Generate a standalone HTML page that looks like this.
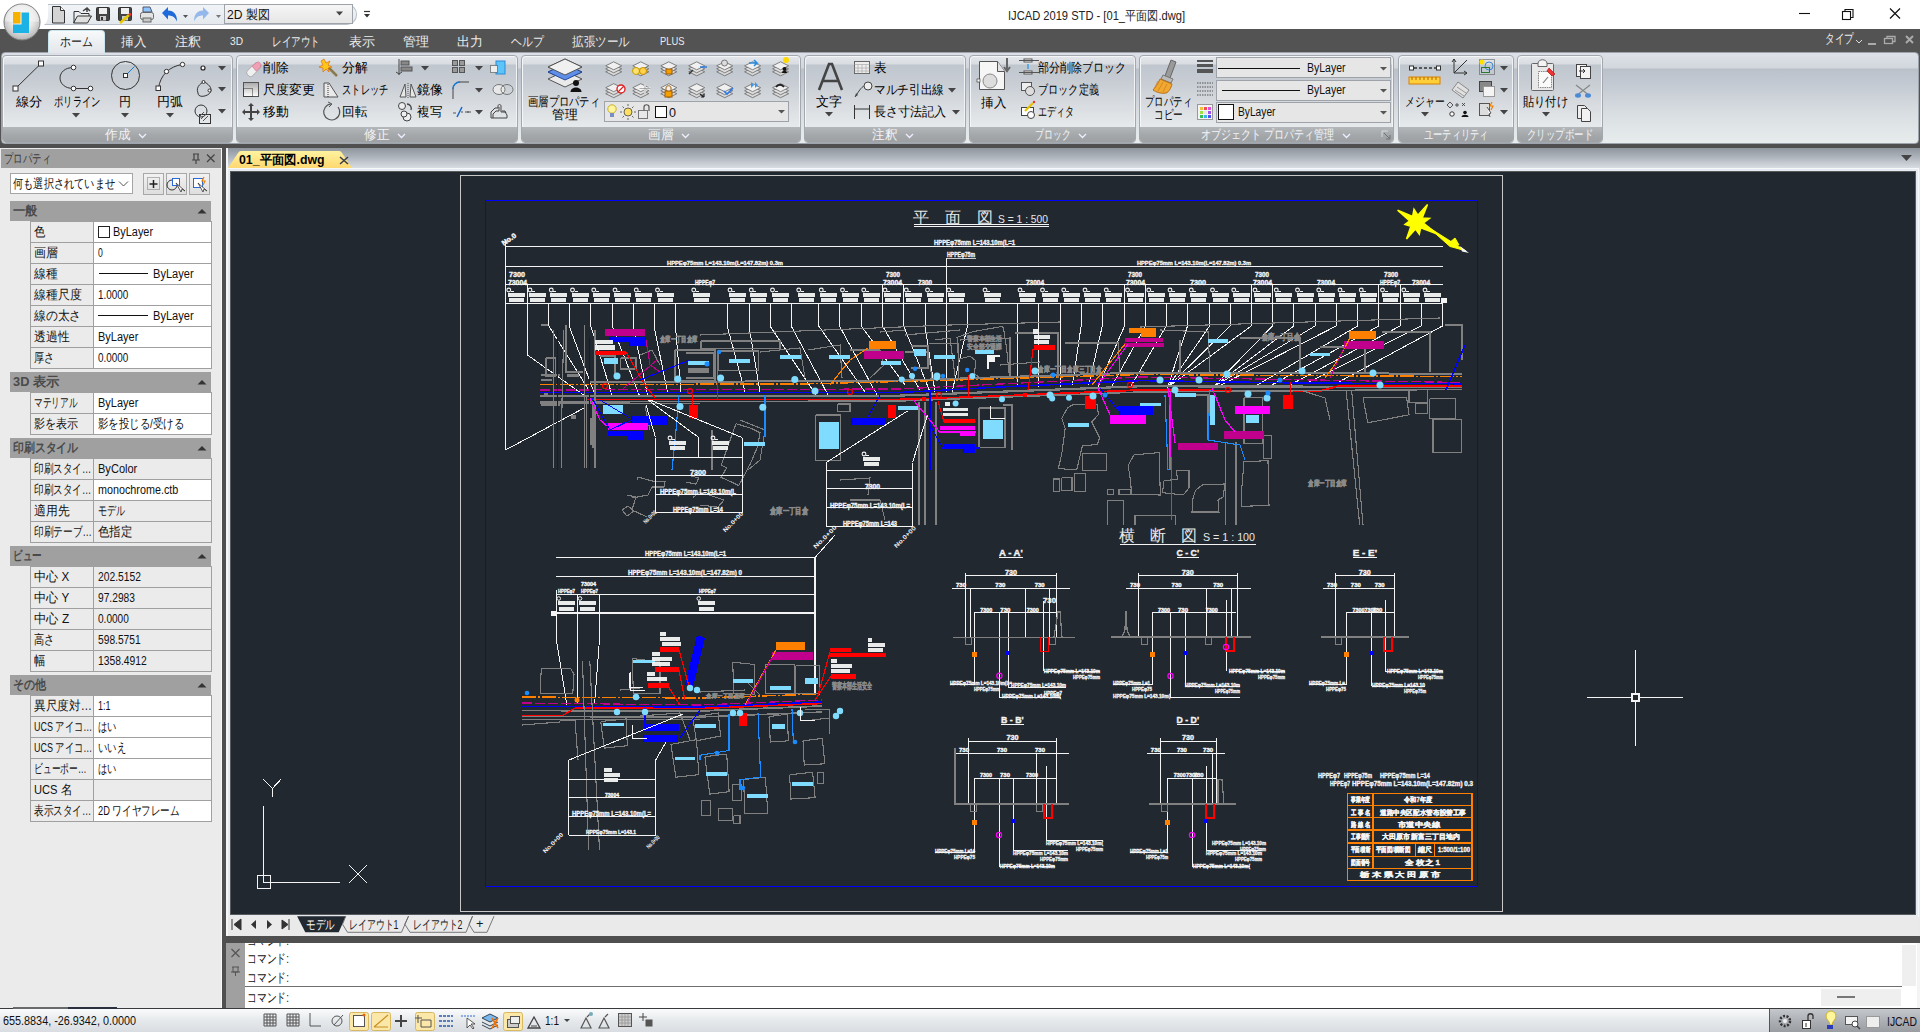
<!DOCTYPE html>
<html><head><meta charset="utf-8"><title>IJCAD</title><style>
*{margin:0;padding:0;box-sizing:border-box}
html,body{width:1920px;height:1032px;overflow:hidden;background:#fff;font-family:"Liberation Sans",sans-serif;font-size:12px;color:#000;position:relative}
.a{position:absolute}
.t{position:absolute;white-space:nowrap;line-height:1;transform-origin:0 50%}
svg{position:absolute;overflow:visible}
</style></head><body>
<div class="a" style="left:0;top:29px;width:1920px;height:23px;background:#535353"></div>
<div class="a" style="left:0;top:52px;width:1920px;height:93px;background:#535353"></div>
<div class="a" style="left:1px;top:52px;width:1918px;height:92px;border:1px solid #9ea4ab;border-radius:4px;background:linear-gradient(#dde1e7 0px,#d2d7de 15px,#bac1ca 16px,#c6ccd4 35px,#d9dee2 60px,#e8eced 90px)"></div>
<div class="a" style="left:48px;top:30px;width:57px;height:23px;border:1px solid #c9e6ee;border-bottom:none;border-radius:4px 4px 0 0;background:linear-gradient(#f7f9fa,#e3e7eb)"></div>
<div class="a" style="left:37px;top:4px;width:320px;height:21px;border:1px solid #b9c0c9;border-left:none;border-radius:0 10px 10px 0;background:linear-gradient(#f1f4f7,#e4e9ee)"></div>
<div class="a" style="left:30px;top:1px;width:18px;height:27px;background:#fff;border-radius:0 0 12px 0"></div>
<svg style="left:48px;top:3px" width="180" height="24">
 <path d="M4.5 3.5h8l4 4v12.5h-12z" fill="#d4d4d4" stroke="#333" stroke-width="1"/><path d="M12.5 3.5v4h4" fill="#f4f4f4" stroke="#333"/>
 <path d="M26 8.5h5l2 2h8v3" fill="#eee" stroke="#333"/><path d="M25.5 20l4-7h14l-4 7z" fill="#e0e0e0" stroke="#333"/><path d="M26 8.5v11.5" stroke="#333"/><path d="M35 8l4-3 3 3M39 5v4" stroke="#444" fill="none" stroke-width="1.5"/>
 <rect x="48.5" y="4.5" width="13" height="13" rx="1" fill="#444" stroke="#333"/><rect x="51" y="5" width="8" height="6" fill="#eee"/><rect x="52" y="13" width="6" height="4.5" fill="#ccc"/><rect x="53" y="14" width="2" height="3" fill="#333"/>
 <rect x="70.5" y="4.5" width="13" height="13" rx="1" fill="#444" stroke="#333"/><rect x="73" y="5" width="8" height="6" fill="#eee"/><rect x="74" y="13" width="6" height="4.5" fill="#ccc"/><path d="M72 20l9-8" stroke="#e8c800" stroke-width="2.5"/><circle cx="82" cy="11.5" r="1.4" fill="#e33"/>
 <path d="M95 4h7l2 5h-9z" fill="#8ec6ff" stroke="#556"/><rect x="92.5" y="9.5" width="13" height="7" rx="2" fill="#e4e4e4" stroke="#666"/><rect x="95" y="15" width="8" height="4" fill="#c8c8c8" stroke="#666"/>
 <path d="M114 10l6-6v3.5c6 0 9 4 9 11-2-4-4-6-9-6v4z" fill="#1e6ad8"/>
 <path d="M135 12h5l-2.5 3z" fill="#555"/>
 <path d="M161 10l-6-6v3.5c-6 0-9 4-9 11 2-4 4-6 9-6v4z" fill="#94b8ec"/>
 <path d="M168 12h5l-2.5 3z" fill="#777"/>
</svg>
<div class="a" style="left:224px;top:4px;width:129px;height:20px;border:1px solid #9ea3aa;background:linear-gradient(#f6f6f6,#e6e6e6)"></div>
<svg style="left:335px;top:11px" width="10" height="6"><path d="M1 0.5h7l-3.5 4z" fill="#444"/></svg>
<svg style="left:362px;top:9px" width="10" height="10"><path d="M2 2.5h6" stroke="#333" stroke-width="1.2"/><path d="M2 5h6l-3 3.5z" fill="#333"/></svg>
<svg style="left:1795px;top:5px" width="110" height="18">
 <path d="M4 8.5h11" stroke="#111" stroke-width="1.1"/>
 <rect x="47.5" y="6.5" width="8" height="8" fill="none" stroke="#111" stroke-width="1.1"/><path d="M50 6.5V4.5h8v8h-2.5" fill="none" stroke="#111" stroke-width="1.1"/>
 <path d="M95 3.5l10 10M105 3.5L95 13.5" stroke="#111" stroke-width="1.2"/>
</svg>
<svg style="left:0;top:0;z-index:3" width="48" height="48">
 <defs><radialGradient id="lg" cx="50%" cy="40%" r="60%"><stop offset="0" stop-color="#ffffff"/><stop offset=".55" stop-color="#e6e6e6"/><stop offset="1" stop-color="#b5b5b5"/></radialGradient></defs>
 <circle cx="22" cy="22" r="18" fill="url(#lg)" stroke="#7d7d7d" stroke-width="1"/>
 <path d="M5 21.5A17 17 0 0 1 39 21.5z" fill="#f6f6f6" opacity=".55"/>
 <rect x="13" y="12" width="7.5" height="11.5" fill="#f7b200"/>
 <path d="M21.5 12.5h7.5v20.5H13v-8.5h8.5z" fill="#1cb2e6"/>
</svg>
<svg style="left:1854px;top:33px" width="64" height="14">
 <path d="M2 7l3 3 3-3" stroke="#ddd" fill="none" stroke-width="1"/>
 <path d="M14 11h8" stroke="#aaa" stroke-width="2"/>
 <rect x="30.5" y="5.5" width="8" height="5" fill="none" stroke="#aaa" stroke-width="1.3"/><path d="M33 5.5V3.5h8v5h-2.5" fill="none" stroke="#aaa" stroke-width="1.3"/>
 <path d="M52 3l7 7M59 3l-7 7" stroke="#aaa" stroke-width="2"/>
</svg>
<div class="a" style="left:2px;top:55px;width:231px;height:88px;border:1px solid #a3a8ae;border-radius:4px;overflow:hidden;background:linear-gradient(#e4e7eb 0px,#d9dde2 8px,#c0c6ce 9px,#c9ced5 28px,#d9dde1 50px,#e6eaec 71px);box-shadow:inset 1px 1px 0 #f4f6f8,inset -1px 0 0 #f0f2f4"><div class="a" style="left:0;right:0;top:71px;height:16px;background:linear-gradient(#b4b7ba,#a5a8ab 50%,#9c9fa2)"></div></div>
<svg style="left:138px;top:133px" width="10" height="6"><path d="M1 1l3.5 3.5L8 1" stroke="#eef" fill="none" stroke-width="1.3"/></svg>
<div class="a" style="left:236px;top:55px;width:282px;height:88px;border:1px solid #a3a8ae;border-radius:4px;overflow:hidden;background:linear-gradient(#e4e7eb 0px,#d9dde2 8px,#c0c6ce 9px,#c9ced5 28px,#d9dde1 50px,#e6eaec 71px);box-shadow:inset 1px 1px 0 #f4f6f8,inset -1px 0 0 #f0f2f4"><div class="a" style="left:0;right:0;top:71px;height:16px;background:linear-gradient(#b4b7ba,#a5a8ab 50%,#9c9fa2)"></div></div>
<svg style="left:397px;top:133px" width="10" height="6"><path d="M1 1l3.5 3.5L8 1" stroke="#eef" fill="none" stroke-width="1.3"/></svg>
<div class="a" style="left:521px;top:55px;width:280px;height:88px;border:1px solid #a3a8ae;border-radius:4px;overflow:hidden;background:linear-gradient(#e4e7eb 0px,#d9dde2 8px,#c0c6ce 9px,#c9ced5 28px,#d9dde1 50px,#e6eaec 71px);box-shadow:inset 1px 1px 0 #f4f6f8,inset -1px 0 0 #f0f2f4"><div class="a" style="left:0;right:0;top:71px;height:16px;background:linear-gradient(#b4b7ba,#a5a8ab 50%,#9c9fa2)"></div></div>
<svg style="left:681px;top:133px" width="10" height="6"><path d="M1 1l3.5 3.5L8 1" stroke="#eef" fill="none" stroke-width="1.3"/></svg>
<div class="a" style="left:804px;top:55px;width:162px;height:88px;border:1px solid #a3a8ae;border-radius:4px;overflow:hidden;background:linear-gradient(#e4e7eb 0px,#d9dde2 8px,#c0c6ce 9px,#c9ced5 28px,#d9dde1 50px,#e6eaec 71px);box-shadow:inset 1px 1px 0 #f4f6f8,inset -1px 0 0 #f0f2f4"><div class="a" style="left:0;right:0;top:71px;height:16px;background:linear-gradient(#b4b7ba,#a5a8ab 50%,#9c9fa2)"></div></div>
<svg style="left:905px;top:133px" width="10" height="6"><path d="M1 1l3.5 3.5L8 1" stroke="#eef" fill="none" stroke-width="1.3"/></svg>
<div class="a" style="left:969px;top:55px;width:167px;height:88px;border:1px solid #a3a8ae;border-radius:4px;overflow:hidden;background:linear-gradient(#e4e7eb 0px,#d9dde2 8px,#c0c6ce 9px,#c9ced5 28px,#d9dde1 50px,#e6eaec 71px);box-shadow:inset 1px 1px 0 #f4f6f8,inset -1px 0 0 #f0f2f4"><div class="a" style="left:0;right:0;top:71px;height:16px;background:linear-gradient(#b4b7ba,#a5a8ab 50%,#9c9fa2)"></div></div>
<svg style="left:1078px;top:133px" width="10" height="6"><path d="M1 1l3.5 3.5L8 1" stroke="#eef" fill="none" stroke-width="1.3"/></svg>
<div class="a" style="left:1139px;top:55px;width:255px;height:88px;border:1px solid #a3a8ae;border-radius:4px;overflow:hidden;background:linear-gradient(#e4e7eb 0px,#d9dde2 8px,#c0c6ce 9px,#c9ced5 28px,#d9dde1 50px,#e6eaec 71px);box-shadow:inset 1px 1px 0 #f4f6f8,inset -1px 0 0 #f0f2f4"><div class="a" style="left:0;right:0;top:71px;height:16px;background:linear-gradient(#b4b7ba,#a5a8ab 50%,#9c9fa2)"></div></div>
<svg style="left:1342px;top:133px" width="10" height="6"><path d="M1 1l3.5 3.5L8 1" stroke="#eef" fill="none" stroke-width="1.3"/></svg>
<div class="a" style="left:1398px;top:55px;width:116px;height:88px;border:1px solid #a3a8ae;border-radius:4px;overflow:hidden;background:linear-gradient(#e4e7eb 0px,#d9dde2 8px,#c0c6ce 9px,#c9ced5 28px,#d9dde1 50px,#e6eaec 71px);box-shadow:inset 1px 1px 0 #f4f6f8,inset -1px 0 0 #f0f2f4"><div class="a" style="left:0;right:0;top:71px;height:16px;background:linear-gradient(#b4b7ba,#a5a8ab 50%,#9c9fa2)"></div></div>
<div class="a" style="left:1517px;top:55px;width:86px;height:88px;border:1px solid #a3a8ae;border-radius:4px;overflow:hidden;background:linear-gradient(#e4e7eb 0px,#d9dde2 8px,#c0c6ce 9px,#c9ced5 28px,#d9dde1 50px,#e6eaec 71px);box-shadow:inset 1px 1px 0 #f4f6f8,inset -1px 0 0 #f0f2f4"><div class="a" style="left:0;right:0;top:71px;height:16px;background:linear-gradient(#b4b7ba,#a5a8ab 50%,#9c9fa2)"></div></div>
<svg style="left:1380px;top:129px" width="12" height="12"><path d="M2 2h6M2 2v6" stroke="#d8dadc" stroke-width="1"/><path d="M4 4l6 6M10 6v4H6" stroke="#6e7175" fill="none" stroke-width="1"/></svg>
<svg style="left:0;top:55px" width="236" height="75">
 <path d="M15.5 33.5L41 8.5" stroke="#333" stroke-width="1"/>
 <rect x="13" y="31" width="5" height="5" fill="#fff" stroke="#333"/><rect x="38.5" y="6" width="5" height="5" fill="#fff" stroke="#333"/>
 <path d="M73.5 12.5c-18 0-18 21 0 21h17" fill="none" stroke="#333"/>
 <circle cx="73.5" cy="12.5" r="2.3" fill="#fff" stroke="#333"/><circle cx="73.5" cy="33.5" r="2.3" fill="#fff" stroke="#333"/><circle cx="90.5" cy="33.5" r="2.3" fill="#fff" stroke="#333"/>
 <circle cx="125.5" cy="20.5" r="14" fill="none" stroke="#333"/><path d="M125.5 20.5l9-9" stroke="#1a7ad0"/><rect x="123.5" y="18.5" width="4" height="4" fill="#fff" stroke="#333"/>
 <path d="M158.5 33.5C160 20 170 11 182.5 9.5" fill="none" stroke="#333"/>
 <rect x="156" y="31" width="4.5" height="4.5" fill="#fff" stroke="#333"/><circle cx="166.5" cy="16.5" r="2.2" fill="#fff" stroke="#333"/><circle cx="182.5" cy="9.5" r="2.2" fill="#fff" stroke="#333"/>
 <circle cx="203" cy="13" r="2" fill="#fff" stroke="#222" stroke-width="1.2"/>
 <path d="M198 38c-3-7 5-11 6-11s8 4 7 9-13 8-13 2z" fill="none" stroke="#333"/><circle cx="203.5" cy="27" r="1.5" fill="#fff" stroke="#333"/><circle cx="209.5" cy="35.5" r="1.5" fill="#fff" stroke="#333"/>
 <rect x="199.5" y="59.5" width="11" height="9" fill="none" stroke="#333"/><circle cx="201" cy="56" r="6" fill="none" stroke="#333"/><path d="M199 62l5-5M201 64l5-5M203 66l5-5" stroke="#555"/>
</svg>
<svg style="left:218px;top:66px" width="8" height="5"><path d="M0 0h8l-4 4.5z" fill="#444"/></svg>
<svg style="left:218px;top:87px" width="8" height="5"><path d="M0 0h8l-4 4.5z" fill="#444"/></svg>
<svg style="left:218px;top:109px" width="8" height="5"><path d="M0 0h8l-4 4.5z" fill="#444"/></svg>
<svg style="left:72px;top:113px" width="8" height="5"><path d="M0 0h8l-4 4.5z" fill="#444"/></svg>
<svg style="left:121px;top:113px" width="8" height="5"><path d="M0 0h8l-4 4.5z" fill="#444"/></svg>
<svg style="left:166px;top:113px" width="8" height="5"><path d="M0 0h8l-4 4.5z" fill="#444"/></svg>
<svg style="left:236px;top:55px" width="285" height="75">
 <g transform="translate(6,4) scale(0.72)"><path d="M8 16l9-9c2-2 4-2 6 0l1 1c2 2 2 4 0 6l-9 9c-2 2-4 2-6 0l-1-1c-2-2-2-4 0-6z" fill="#f0f0f0" stroke="#9a9a9a"/><path d="M14 10l6-5c2-1 4-1 5 1l1 1c1 2 0 4-1 5l-5 5z" fill="#f0a0b4" stroke="#c87890"/></g>
 <path d="M90 10l11 11" stroke="#8a7a50" stroke-width="2.5"/><path d="M88 4l2 4 4-2-2 4 4 2-4 1 1 4-3-3-3 3 0-4-4-1 4-2-2-4z" fill="#ffc61a" stroke="#e07000" stroke-width=".7"/>
 <path d="M163 4v16M163 19l-3-2M163 19l3-2" stroke="#444"/><rect x="165" y="6" width="8" height="4" fill="#888" stroke="#555"/><rect x="165" y="12" width="11" height="4" fill="#888" stroke="#555"/>
 <rect x="216.5" y="5.5" width="5" height="5" fill="#999" stroke="#555"/><rect x="223.5" y="5.5" width="5" height="5" fill="#999" stroke="#555"/><rect x="216.5" y="12.5" width="5" height="5" fill="#999" stroke="#555"/><rect x="223.5" y="12.5" width="5" height="5" fill="#999" stroke="#555"/>
 <rect x="260" y="6" width="9" height="13" fill="#5cc4f8" stroke="#2a8ad8"/><rect x="254.5" y="10.5" width="7" height="7" fill="#eee" stroke="#333" stroke-dasharray="1,1"/>
 <rect x="7.5" y="27.5" width="15" height="14" fill="url(#gsc)" stroke="#555"/><rect x="7.5" y="33.5" width="9" height="8" fill="none" stroke="#333" stroke-dasharray="1,1"/>
 <defs><linearGradient id="gsc" x1="0" y1="0" x2="0" y2="1"><stop offset="0" stop-color="#aaa"/><stop offset="1" stop-color="#fff"/></linearGradient></defs>
 <path d="M88 42V28h5l9 14z" fill="#eaeaea" stroke="#555"/><path d="M92 29v13" stroke="#333" stroke-dasharray="1,1"/>
 <path d="M172 28v15" stroke="#555" stroke-dasharray="1,1"/><path d="M170 42h-6l5-13zM174 42h6l-5-13z" fill="#e8e8e8" stroke="#555"/>
 <path d="M217 44V34c0-4 3-7 7-7h9" fill="none" stroke="#444"/><path d="M217 34c0-4 3-7 7-7" fill="none" stroke="#1a7ad0" stroke-width="1.5"/>
 <ellipse cx="263" cy="34.5" rx="6" ry="5" fill="#e8e8e8" stroke="#777"/><ellipse cx="271" cy="34.5" rx="6" ry="5" fill="none" stroke="#777"/>
 <path d="M15 50v14M8 57h14" stroke="#444" stroke-width="2"/><path d="M15 48l-3 3h6zM15 66l-3-3h6zM6 57l3-3v6zM24 57l-3-3v6z" fill="#444"/>
 <path d="M102 52a8 8 0 1 1-7-3" fill="none" stroke="#555" stroke-width="1.2"/><path d="M92 47l4 2-3 3" fill="none" stroke="#555"/>
 <circle cx="166" cy="51" r="3.5" fill="#eee" stroke="#444"/><circle cx="171" cy="62" r="4" fill="#eee" stroke="#444"/><circle cx="168" cy="59" r="3" fill="#eee" stroke="#444"/><path d="M171 49c3 0 5 3 4 6" fill="none" stroke="#444" stroke-width="1.3"/>
 <path d="M217 58h3M229 57h6" stroke="#555"/><path d="M221 62l5-10" stroke="#1a6ac8" stroke-width="1.6"/><path d="M225 57h2M231 57h2" stroke="#555"/>
 <path d="M255 63v-6l4-4h3v-2c0-2 3-2 3 0v6h4l2 3v3z" fill="none" stroke="#444"/><path d="M257 63v-4l3-3h3v-4M266 56h3l1 2" fill="none" stroke="#444"/>
</svg>
<svg style="left:421px;top:66px" width="8" height="5"><path d="M0 0h8l-4 4.5z" fill="#444"/></svg>
<svg style="left:475px;top:66px" width="8" height="5"><path d="M0 0h8l-4 4.5z" fill="#444"/></svg>
<svg style="left:475px;top:88px" width="8" height="5"><path d="M0 0h8l-4 4.5z" fill="#444"/></svg>
<svg style="left:475px;top:110px" width="8" height="5"><path d="M0 0h8l-4 4.5z" fill="#444"/></svg>
<svg style="left:520px;top:55px" width="285" height="75">
 <path d="M28 17l17-8 17 8-17 8z" fill="#d8d8d8" stroke="#555"/><path d="M28 12l17-8 17 8-17 8z" fill="#f4f4f4" stroke="#555"/>
 <path d="M28 24l17-8 17 8-17 8z" fill="#eaeaea" stroke="#555"/><path d="M28 17l17-8 17 8-17 8z" fill="#5e8ee8" stroke="#24489a"/>
 <path d="M28 12l17-8 17 8-17 8z" fill="#f0f0f0" stroke="#555"/>
 <circle cx="56" cy="28" r="3" fill="#111"/><path d="M50.5 37c0-6 11-6 11 0z" fill="#111"/>
 <g transform="translate(85.70000000000005,6.799999999999997) scale(1.0)"><path d="M0 10l8-4 8 4-8 4z" fill="#d8d8d8" stroke="#666" stroke-width=".8"/><path d="M0 7l8-4 8 4-8 4z" fill="#e0e0e0" stroke="#666" stroke-width=".8"/><path d="M0 4l8-4 8 4-8 4z" fill="#f0f0f0" stroke="#666" stroke-width=".8"/></g><g transform="translate(85.70000000000005,28.700000000000003) scale(1.0)"><path d="M0 10l8-4 8 4-8 4z" fill="#d8d8d8" stroke="#666" stroke-width=".8"/><path d="M0 7l8-4 8 4-8 4z" fill="#e0e0e0" stroke="#666" stroke-width=".8"/><path d="M0 4l8-4 8 4-8 4z" fill="#f0f0f0" stroke="#666" stroke-width=".8"/></g><g transform="translate(112.79999999999995,6.799999999999997) scale(1.0)"><path d="M0 10l8-4 8 4-8 4z" fill="#d8d8d8" stroke="#666" stroke-width=".8"/><path d="M0 7l8-4 8 4-8 4z" fill="#e0e0e0" stroke="#666" stroke-width=".8"/><path d="M0 4l8-4 8 4-8 4z" fill="#f0f0f0" stroke="#666" stroke-width=".8"/></g><g transform="translate(112.79999999999995,28.700000000000003) scale(1.0)"><path d="M0 10l8-4 8 4-8 4z" fill="#d8d8d8" stroke="#666" stroke-width=".8"/><path d="M0 7l8-4 8 4-8 4z" fill="#e0e0e0" stroke="#666" stroke-width=".8"/><path d="M0 4l8-4 8 4-8 4z" fill="#f0f0f0" stroke="#666" stroke-width=".8"/></g><g transform="translate(140.79999999999995,6.799999999999997) scale(1.0)"><path d="M0 10l8-4 8 4-8 4z" fill="#d8d8d8" stroke="#666" stroke-width=".8"/><path d="M0 7l8-4 8 4-8 4z" fill="#e0e0e0" stroke="#666" stroke-width=".8"/><path d="M0 4l8-4 8 4-8 4z" fill="#f0f0f0" stroke="#666" stroke-width=".8"/></g><g transform="translate(140.79999999999995,28.700000000000003) scale(1.0)"><path d="M0 10l8-4 8 4-8 4z" fill="#d8d8d8" stroke="#666" stroke-width=".8"/><path d="M0 7l8-4 8 4-8 4z" fill="#e0e0e0" stroke="#666" stroke-width=".8"/><path d="M0 4l8-4 8 4-8 4z" fill="#f0f0f0" stroke="#666" stroke-width=".8"/></g><g transform="translate(168.70000000000005,6.799999999999997) scale(1.0)"><path d="M0 10l8-4 8 4-8 4z" fill="#d8d8d8" stroke="#666" stroke-width=".8"/><path d="M0 7l8-4 8 4-8 4z" fill="#e0e0e0" stroke="#666" stroke-width=".8"/><path d="M0 4l8-4 8 4-8 4z" fill="#f0f0f0" stroke="#666" stroke-width=".8"/></g><g transform="translate(168.70000000000005,28.700000000000003) scale(1.0)"><path d="M0 10l8-4 8 4-8 4z" fill="#d8d8d8" stroke="#666" stroke-width=".8"/><path d="M0 7l8-4 8 4-8 4z" fill="#e0e0e0" stroke="#666" stroke-width=".8"/><path d="M0 4l8-4 8 4-8 4z" fill="#f0f0f0" stroke="#666" stroke-width=".8"/></g><g transform="translate(196.70000000000005,6.799999999999997) scale(1.0)"><path d="M0 10l8-4 8 4-8 4z" fill="#d8d8d8" stroke="#666" stroke-width=".8"/><path d="M0 7l8-4 8 4-8 4z" fill="#e0e0e0" stroke="#666" stroke-width=".8"/><path d="M0 4l8-4 8 4-8 4z" fill="#f0f0f0" stroke="#666" stroke-width=".8"/></g><g transform="translate(196.70000000000005,28.700000000000003) scale(1.0)"><path d="M0 10l8-4 8 4-8 4z" fill="#d8d8d8" stroke="#666" stroke-width=".8"/><path d="M0 7l8-4 8 4-8 4z" fill="#e0e0e0" stroke="#666" stroke-width=".8"/><path d="M0 4l8-4 8 4-8 4z" fill="#f0f0f0" stroke="#666" stroke-width=".8"/></g><g transform="translate(224.60000000000002,6.799999999999997) scale(1.0)"><path d="M0 10l8-4 8 4-8 4z" fill="#d8d8d8" stroke="#666" stroke-width=".8"/><path d="M0 7l8-4 8 4-8 4z" fill="#e0e0e0" stroke="#666" stroke-width=".8"/><path d="M0 4l8-4 8 4-8 4z" fill="#f0f0f0" stroke="#666" stroke-width=".8"/></g><g transform="translate(224.60000000000002,28.700000000000003) scale(1.0)"><path d="M0 10l8-4 8 4-8 4z" fill="#d8d8d8" stroke="#666" stroke-width=".8"/><path d="M0 7l8-4 8 4-8 4z" fill="#e0e0e0" stroke="#666" stroke-width=".8"/><path d="M0 4l8-4 8 4-8 4z" fill="#f0f0f0" stroke="#666" stroke-width=".8"/></g><g transform="translate(252.60000000000002,6.799999999999997) scale(1.0)"><path d="M0 10l8-4 8 4-8 4z" fill="#d8d8d8" stroke="#666" stroke-width=".8"/><path d="M0 7l8-4 8 4-8 4z" fill="#e0e0e0" stroke="#666" stroke-width=".8"/><path d="M0 4l8-4 8 4-8 4z" fill="#f0f0f0" stroke="#666" stroke-width=".8"/></g><g transform="translate(252.60000000000002,28.700000000000003) scale(1.0)"><path d="M0 10l8-4 8 4-8 4z" fill="#d8d8d8" stroke="#666" stroke-width=".8"/><path d="M0 7l8-4 8 4-8 4z" fill="#e0e0e0" stroke="#666" stroke-width=".8"/><path d="M0 4l8-4 8 4-8 4z" fill="#f0f0f0" stroke="#666" stroke-width=".8"/></g>
 
 <circle cx="116" cy="16" r="3.5" fill="#ffe070" stroke="#c9a000"/>
 <circle cx="123" cy="16" r="3.5" fill="#ffd24a" stroke="#c98c00"/>
 <rect x="146" y="14" width="6" height="5" fill="#f5a000" stroke="#a05a00"/>
 <path d="M169 19l4-4" stroke="#333" stroke-width="1.4"/><path d="M180 12h7" stroke="#2a7ad8" stroke-width="1.5"/>
 <circle cx="204.5" cy="8" r="3" fill="#ddd" stroke="#777"/>
 <path d="M229 8h8l-3-3M237 8l-3 3" stroke="#2a8ae0" fill="none" stroke-width="1.6"/>
 <circle cx="266" cy="5" r="3" fill="#ffd900"/><path d="M262 18c0-3 5-3 5 0z" fill="#111"/><circle cx="264.5" cy="14" r="2" fill="#111"/>
 <circle cx="101" cy="34" r="4" fill="#fff" stroke="#d22" stroke-width="1.4"/><path d="M98 37l6-6" stroke="#d22" stroke-width="1.2"/>
 <path d="M125 28v11M119.5 33.5h11" stroke="#f8f8f8" stroke-width="2"/><path d="M125 28v11M119.5 33.5h11" stroke="#777" stroke-width=".6"/>
 <rect x="145" y="36" width="7" height="6" fill="#f5a000" stroke="#a05a00"/><path d="M146 36v-3c0-3 5-3 5 0v3" fill="none" stroke="#a05a00"/>
 <path d="M180 39l4 3M184 42v-3M184 42h-3" stroke="#222" stroke-width="1.2"/>
 <path d="M204 36l3 3 6-6" stroke="#2a7ae8" fill="none" stroke-width="1.6"/>
 <path d="M231 27l3 3-3 3zM235 27l3 3-3 3z" fill="#3a9af0"/>
 <path d="M256 32c2-3 6-3 8 0" stroke="#222" fill="none" stroke-width="1.8"/>

</svg>
<div class="a" style="left:604px;top:101px;width:185px;height:21px;border:1px solid #9ea3aa;background:#e6e6e6"></div>
<svg style="left:604px;top:101px" width="185" height="21">
 <circle cx="8" cy="8" r="4.2" fill="#fff59a" stroke="#c8b030"/><rect x="6" y="12" width="4" height="4" fill="#7c8cc4"/>
 <circle cx="24" cy="11" r="4" fill="#ffe060" stroke="#444" stroke-width=".8"/><path d="M24 3v2M24 17v2M16 11h2M30 11h2M18.5 5.5l1.5 1.5M28 15l1.5 1.5M18.5 16.5l1.5-1.5M28 7l1.5-1.5" stroke="#444" stroke-width=".8"/>
 <rect x="34.5" y="9.5" width="9" height="8" fill="#e8e8e8" stroke="#777"/><path d="M40 9.5V6c0-3 5-3 5 0v4" fill="none" stroke="#555" stroke-width="1.2"/>
 <rect x="51.5" y="5.5" width="11" height="11" fill="#fff" stroke="#111"/>
 <path d="M174 9h7l-3.5 3.5z" fill="#555"/>
</svg>
<svg style="left:804px;top:55px" width="165" height="75">
 <path d="M15 35l10-26h3l10 26M19 26h15" stroke="#444" stroke-width="2.6" fill="none"/>
 <rect x="50.5" y="6.5" width="15" height="12" fill="#eee" stroke="#666"/><path d="M50.5 9.5h15M54 9.5v9M58 9.5v9M62 9.5v9M50.5 13h15M50.5 16h15" stroke="#aaa" stroke-width=".7"/>
 <path d="M51 42l4-6c2-3 4-5 6-5" fill="none" stroke="#444"/><circle cx="64" cy="31" r="4" fill="#eee" stroke="#444"/><path d="M51 42l1-4 2 2z" fill="#444"/>
 <path d="M50.5 50v14M65.5 50v14M51 54h14" stroke="#333"/>
</svg>
<svg style="left:825px;top:112px" width="8" height="5"><path d="M0 0h8l-4 4.5z" fill="#444"/></svg>
<svg style="left:948px;top:88px" width="8" height="5"><path d="M0 0h8l-4 4.5z" fill="#444"/></svg>
<svg style="left:952px;top:110px" width="8" height="5"><path d="M0 0h8l-4 4.5z" fill="#444"/></svg>
<svg style="left:969px;top:55px" width="170" height="75">
 <path d="M10.5 6.5h18l7 10v18h-25z" fill="#f6f6f6" stroke="#555"/><path d="M28.5 6.5v10h7" fill="#e4e4e4" stroke="#555"/>
 <circle cx="21" cy="26" r="7" fill="#ddd" stroke="#888"/><rect x="8" y="24" width="3" height="3" fill="#fff" stroke="#444" stroke-width=".7"/>
 <path d="M38 3v13M35 12l3 4 3-4" stroke="#666" stroke-width="2" fill="none"/>
 <rect x="55" y="4" width="8" height="3" fill="#fff" stroke="#555"/><rect x="55" y="16" width="8" height="3" fill="#fff" stroke="#555"/><path d="M50 5.5h20M50 17.5h20" stroke="#555"/><path d="M59 9v5" stroke="#2a9ae8" stroke-width="1.3"/>
 <rect x="52.5" y="27.5" width="10" height="8" fill="#eee" stroke="#555"/><circle cx="61" cy="36" r="4.5" fill="#ddd" stroke="#555"/>
 <rect x="52.5" y="52.5" width="12" height="8" fill="#fff" stroke="#444"/><circle cx="62" cy="60" r="3.5" fill="#fff" stroke="#444"/><path d="M56 56l8-8" stroke="#e8c000" stroke-width="2.2"/><circle cx="65" cy="47" r="1.2" fill="#e33"/>
</svg>
<svg style="left:1139px;top:55px" width="255" height="75">
 <path d="M32 5l5 2-6 16-5-2z" fill="#9a9a9a" stroke="#666"/><path d="M24 20l10 4-2 4-10-4z" fill="#bbb" stroke="#777"/>
 <path d="M21 24l12 5c-1 4-3 8-6 9-5 1-10-1-13-3 2-2 5-6 7-11z" fill="#f0a830" stroke="#b8701a"/><path d="M15 34l4-8M19 36l5-9M24 37l4-8" stroke="#d08020" stroke-width=".8"/>
 <rect x="58" y="5" width="16" height="2" fill="#555"/><rect x="58" y="9" width="16" height="3" fill="#555"/><rect x="58" y="14" width="16" height="4" fill="#555"/>
 <path d="M58 28h16M58 32h16M58 36h16M58 40h16" stroke="#555" stroke-dasharray="1.5,1" stroke-width="1"/>
 <rect x="58.5" y="49.5" width="15" height="15" fill="#f4f4f4" stroke="#999"/>
 <rect x="61" y="52" width="3" height="3" fill="#f0c040"/><rect x="65" y="52" width="3" height="3" fill="#f05050"/><rect x="69" y="52" width="3" height="3" fill="#e050e0"/>
 <rect x="61" y="56" width="3" height="3" fill="#a0e040"/><rect x="65" y="56" width="3" height="3" fill="#e8e8e8"/><rect x="69" y="56" width="3" height="3" fill="#a050f0"/>
 <rect x="61" y="60" width="3" height="3" fill="#30c050"/><rect x="65" y="60" width="3" height="3" fill="#40b0f0"/><rect x="69" y="60" width="3" height="3" fill="#5050f0"/>
</svg>
<div class="a" style="left:1216px;top:57px;width:175px;height:21px;border:1px solid #9ea3aa;background:#e6e6e6"></div>
<div class="a" style="left:1216px;top:79.5px;width:175px;height:21px;border:1px solid #9ea3aa;background:#e6e6e6"></div>
<div class="a" style="left:1216px;top:101.5px;width:175px;height:21px;border:1px solid #9ea3aa;background:#e6e6e6"></div>
<svg style="left:1216px;top:57px" width="175" height="66">
 <path d="M2 11.5h82" stroke="#111" stroke-width="1"/><path d="M6 33.5h78" stroke="#111" stroke-width="1"/>
 <rect x="2.5" y="47.5" width="15" height="15" fill="#fff" stroke="#111"/>
 <path d="M164 10h7l-3.5 3.5zM164 32h7l-3.5 3.5zM164 54h7l-3.5 3.5z" fill="#555"/>
</svg>
<svg style="left:1398px;top:55px" width="120" height="75">
 <rect x="11.5" y="11" width="4" height="4" fill="#fff" stroke="#333"/><rect x="38.5" y="11" width="4" height="4" fill="#fff" stroke="#333"/><path d="M16 13h22" stroke="#333" stroke-width="1.5" stroke-dasharray="3,2"/>
 <rect x="11" y="22" width="31" height="7" fill="#ffcf3a" stroke="#d88000"/><path d="M14 22v3M18 22v3M22 22v3M26 22v3M30 22v3M34 22v3M38 22v3" stroke="#a05000" stroke-width=".8"/>
 <path d="M56 4v14h13M56 18l13-13" stroke="#333" fill="none"/><path d="M54 7l2-3 2 3M66 16l3 2-3 2" fill="none" stroke="#333"/>
 <path d="M54 35l6-8 11 8-6 8z" fill="#e0e0e0" stroke="#888"/><path d="M57 35l9 6M59 32l9 6" stroke="#999"/>
 <path d="M52 47l3 3-3 3-3-3zM57 50h4M59 48v4M64 48l3 3M67 48l-3 3" stroke="#333" fill="none" stroke-width=".8"/><circle cx="54" cy="59" r="2.2" fill="#fff" stroke="#333"/><circle cx="67" cy="57.5" r="1.8" fill="#111"/><path d="M63.5 62c0-3 7-3 7 0z" fill="#111"/>
 <rect x="81.5" y="4.5" width="15" height="15" fill="none" stroke="#444" stroke-dasharray="1,1"/><circle cx="84" cy="7" r="2.5" fill="#ffe000"/><circle cx="91" cy="11" r="4" fill="none" stroke="#3a8ad8"/><rect x="83.5" y="12.5" width="8" height="5" fill="none" stroke="#2a7a2a"/>
 <rect x="81.5" y="26.5" width="12" height="10" fill="#888" stroke="#444"/><rect x="85.5" y="31.5" width="11" height="10" fill="#f4f4f4" stroke="#999"/>
 <rect x="81.5" y="48.5" width="10" height="12" fill="#ddd" stroke="#555"/><path d="M89 52l4 6-2 1 1 3" stroke="#555" fill="#fff"/><path d="M94 47l-2 4h3l-2 4" stroke="#f08000" fill="none" stroke-width="1.2"/>
</svg>
<svg style="left:1420.7px;top:112px" width="8" height="5"><path d="M0 0h8l-4 4.5z" fill="#444"/></svg>
<svg style="left:1499.5px;top:66px" width="8" height="5"><path d="M0 0h8l-4 4.5z" fill="#444"/></svg>
<svg style="left:1499.5px;top:88px" width="8" height="5"><path d="M0 0h8l-4 4.5z" fill="#444"/></svg>
<svg style="left:1499.5px;top:110px" width="8" height="5"><path d="M0 0h8l-4 4.5z" fill="#444"/></svg>
<svg style="left:1517px;top:55px" width="90" height="75">
 <rect x="14.5" y="8.5" width="22" height="27" rx="1" fill="#e8e8e8" stroke="#666"/><path d="M21 8.5c0-5 9-5 9 0v3h-9z" fill="#f4f4f4" stroke="#666"/>
 <rect x="21.5" y="16.5" width="13" height="16" fill="#fafafa" stroke="#888" stroke-dasharray="1.5,0.8"/>
 <path d="M31 22l-5 6" stroke="#777" stroke-width="1.1"/><path d="M32 13l6 6-3 2-5-5z" fill="#e33" stroke="#a11" stroke-width=".7"/>
 <rect x="59.5" y="9.5" width="10" height="12" fill="#f4f4f4" stroke="#444"/><rect x="63.5" y="11.5" width="10" height="12" fill="#f4f4f4" stroke="#444"/><path d="M62 16h6l-2-2M68 16l-2 2" stroke="#333" fill="none"/>
 <path d="M59 30l14 11M73 30L59 41" stroke="#888" stroke-width="1.3"/><ellipse cx="61" cy="40.5" rx="3" ry="2.2" fill="#4a8ad8"/><ellipse cx="71" cy="40.5" rx="3" ry="2.2" fill="#4a8ad8"/>
 <path d="M60.5 50.5h7l3 3v10h-10z" fill="#eee" stroke="#444"/><path d="M64.5 53.5h6l3 3v10h-9z" fill="#f2f2f2" stroke="#444"/>
</svg>
<svg style="left:1541.5px;top:112px" width="8" height="5"><path d="M0 0h8l-4 4.5z" fill="#444"/></svg>
<div class="a" style="left:0;top:144px;width:1920px;height:4px;background:#4f4f4f"></div>
<div class="a" style="left:0;top:148px;width:222px;height:861px;background:#ebebeb;border-right:1px solid #f8f8f8"></div>
<div class="a" style="left:1px;top:149px;width:220px;height:19px;background:#a0a0a0"></div>
<svg style="left:188px;top:150px" width="34" height="18">
 <path d="M5 4h6M6 4v6h4V4M4 10h8M8 10v4" stroke="#444" fill="none" stroke-width="1.2"/>
 <path d="M19 4.5l7.5 7.5M26.5 4.5L19 12" stroke="#444" stroke-width="1.3"/>
</svg>
<div class="a" style="left:10px;top:173px;width:123px;height:21px;border:1px solid #a5a5a5;background:#fff"></div>
<svg style="left:118px;top:180px" width="12" height="8"><path d="M1 1.5l4.5 4.5L10 1.5" stroke="#555" fill="none" stroke-width="1"/></svg>
<div class="a" style="left:143px;top:173px;width:21px;height:22px;border:1px solid #a8a8a8;background:linear-gradient(#f2f2f2,#dedede)"></div>
<div class="a" style="left:166px;top:173px;width:21px;height:22px;border:1px solid #a8a8a8;background:linear-gradient(#f2f2f2,#dedede)"></div>
<div class="a" style="left:189px;top:173px;width:21px;height:22px;border:1px solid #a8a8a8;background:linear-gradient(#f2f2f2,#dedede)"></div>
<svg style="left:143px;top:173px" width="70" height="22">
 <rect x="4.5" y="4.5" width="12" height="12" fill="none" stroke="#777" stroke-dasharray="1,1"/><path d="M10.5 7v8M6.5 11h8" stroke="#222" stroke-width="1.5"/>
 <circle cx="29" cy="12" r="5" fill="none" stroke="#333"/><rect x="29.5" y="5.5" width="7" height="7" fill="#fff" stroke="#2a6ad8"/><path d="M33 10l5 9 1-3 3 2z" fill="#fff" stroke="#333" stroke-width=".8"/>
 <rect x="50.5" y="5.5" width="9" height="9" fill="#fff" stroke="#2a6ad8"/><path d="M55 10l5 9 1-3 3 2z" fill="#fff" stroke="#333" stroke-width=".8"/><path d="M61 4l-2 4h3l-2 4" stroke="#f08000" fill="none" stroke-width="1.2"/>
</svg>
<div class="a" style="left:10px;top:201px;width:201px;height:20px;background:#a0a0a0"></div>
<svg style="left:197px;top:208px" width="10" height="6"><path d="M0.5 5.5L5 1l4.5 4.5z" fill="#333"/></svg>
<div class="a" style="left:30px;top:221px;width:182px;height:22px;border:1px solid #a0a0a0;background:#ebebeb"></div>
<div class="a" style="left:93px;top:221px;width:119px;height:22px;border:1px solid #a0a0a0;background:#fff"></div>
<div class="a" style="left:30px;top:242px;width:182px;height:22px;border:1px solid #a0a0a0;background:#ebebeb"></div>
<div class="a" style="left:93px;top:242px;width:119px;height:22px;border:1px solid #a0a0a0;background:#fff"></div>
<div class="a" style="left:30px;top:263px;width:182px;height:22px;border:1px solid #a0a0a0;background:#ebebeb"></div>
<div class="a" style="left:93px;top:263px;width:119px;height:22px;border:1px solid #a0a0a0;background:#fff"></div>
<div class="a" style="left:30px;top:284px;width:182px;height:22px;border:1px solid #a0a0a0;background:#ebebeb"></div>
<div class="a" style="left:93px;top:284px;width:119px;height:22px;border:1px solid #a0a0a0;background:#fff"></div>
<div class="a" style="left:30px;top:305px;width:182px;height:22px;border:1px solid #a0a0a0;background:#ebebeb"></div>
<div class="a" style="left:93px;top:305px;width:119px;height:22px;border:1px solid #a0a0a0;background:#fff"></div>
<div class="a" style="left:30px;top:326px;width:182px;height:22px;border:1px solid #a0a0a0;background:#ebebeb"></div>
<div class="a" style="left:93px;top:326px;width:119px;height:22px;border:1px solid #a0a0a0;background:#fff"></div>
<div class="a" style="left:30px;top:347px;width:182px;height:22px;border:1px solid #a0a0a0;background:#ebebeb"></div>
<div class="a" style="left:93px;top:347px;width:119px;height:22px;border:1px solid #a0a0a0;background:#fff"></div>
<div class="a" style="left:10px;top:372px;width:201px;height:20px;background:#a0a0a0"></div>
<svg style="left:197px;top:379px" width="10" height="6"><path d="M0.5 5.5L5 1l4.5 4.5z" fill="#333"/></svg>
<div class="a" style="left:30px;top:392px;width:182px;height:22px;border:1px solid #a0a0a0;background:#ebebeb"></div>
<div class="a" style="left:93px;top:392px;width:119px;height:22px;border:1px solid #a0a0a0;background:#fff"></div>
<div class="a" style="left:30px;top:413px;width:182px;height:22px;border:1px solid #a0a0a0;background:#ebebeb"></div>
<div class="a" style="left:93px;top:413px;width:119px;height:22px;border:1px solid #a0a0a0;background:#fff"></div>
<div class="a" style="left:10px;top:438px;width:201px;height:20px;background:#a0a0a0"></div>
<svg style="left:197px;top:445px" width="10" height="6"><path d="M0.5 5.5L5 1l4.5 4.5z" fill="#333"/></svg>
<div class="a" style="left:30px;top:458px;width:182px;height:22px;border:1px solid #a0a0a0;background:#ebebeb"></div>
<div class="a" style="left:93px;top:458px;width:119px;height:22px;border:1px solid #a0a0a0;background:#ebebeb"></div>
<div class="a" style="left:30px;top:479px;width:182px;height:22px;border:1px solid #a0a0a0;background:#ebebeb"></div>
<div class="a" style="left:93px;top:479px;width:119px;height:22px;border:1px solid #a0a0a0;background:#fff"></div>
<div class="a" style="left:30px;top:500px;width:182px;height:22px;border:1px solid #a0a0a0;background:#ebebeb"></div>
<div class="a" style="left:93px;top:500px;width:119px;height:22px;border:1px solid #a0a0a0;background:#ebebeb"></div>
<div class="a" style="left:30px;top:521px;width:182px;height:22px;border:1px solid #a0a0a0;background:#ebebeb"></div>
<div class="a" style="left:93px;top:521px;width:119px;height:22px;border:1px solid #a0a0a0;background:#ebebeb"></div>
<div class="a" style="left:10px;top:546px;width:201px;height:20px;background:#a0a0a0"></div>
<svg style="left:197px;top:553px" width="10" height="6"><path d="M0.5 5.5L5 1l4.5 4.5z" fill="#333"/></svg>
<div class="a" style="left:30px;top:566px;width:182px;height:22px;border:1px solid #a0a0a0;background:#ebebeb"></div>
<div class="a" style="left:93px;top:566px;width:119px;height:22px;border:1px solid #a0a0a0;background:#ebebeb"></div>
<div class="a" style="left:30px;top:587px;width:182px;height:22px;border:1px solid #a0a0a0;background:#ebebeb"></div>
<div class="a" style="left:93px;top:587px;width:119px;height:22px;border:1px solid #a0a0a0;background:#ebebeb"></div>
<div class="a" style="left:30px;top:608px;width:182px;height:22px;border:1px solid #a0a0a0;background:#ebebeb"></div>
<div class="a" style="left:93px;top:608px;width:119px;height:22px;border:1px solid #a0a0a0;background:#ebebeb"></div>
<div class="a" style="left:30px;top:629px;width:182px;height:22px;border:1px solid #a0a0a0;background:#ebebeb"></div>
<div class="a" style="left:93px;top:629px;width:119px;height:22px;border:1px solid #a0a0a0;background:#ebebeb"></div>
<div class="a" style="left:30px;top:650px;width:182px;height:22px;border:1px solid #a0a0a0;background:#ebebeb"></div>
<div class="a" style="left:93px;top:650px;width:119px;height:22px;border:1px solid #a0a0a0;background:#ebebeb"></div>
<div class="a" style="left:10px;top:675px;width:201px;height:20px;background:#a0a0a0"></div>
<svg style="left:197px;top:682px" width="10" height="6"><path d="M0.5 5.5L5 1l4.5 4.5z" fill="#333"/></svg>
<div class="a" style="left:30px;top:695px;width:182px;height:22px;border:1px solid #a0a0a0;background:#ebebeb"></div>
<div class="a" style="left:93px;top:695px;width:119px;height:22px;border:1px solid #a0a0a0;background:#fff"></div>
<div class="a" style="left:30px;top:716px;width:182px;height:22px;border:1px solid #a0a0a0;background:#ebebeb"></div>
<div class="a" style="left:93px;top:716px;width:119px;height:22px;border:1px solid #a0a0a0;background:#fff"></div>
<div class="a" style="left:30px;top:737px;width:182px;height:22px;border:1px solid #a0a0a0;background:#ebebeb"></div>
<div class="a" style="left:93px;top:737px;width:119px;height:22px;border:1px solid #a0a0a0;background:#fff"></div>
<div class="a" style="left:30px;top:758px;width:182px;height:22px;border:1px solid #a0a0a0;background:#ebebeb"></div>
<div class="a" style="left:93px;top:758px;width:119px;height:22px;border:1px solid #a0a0a0;background:#fff"></div>
<div class="a" style="left:30px;top:779px;width:182px;height:22px;border:1px solid #a0a0a0;background:#ebebeb"></div>
<div class="a" style="left:93px;top:779px;width:119px;height:22px;border:1px solid #a0a0a0;background:#ebebeb"></div>
<div class="a" style="left:30px;top:800px;width:182px;height:22px;border:1px solid #a0a0a0;background:#ebebeb"></div>
<div class="a" style="left:93px;top:800px;width:119px;height:22px;border:1px solid #a0a0a0;background:#fff"></div>
<div class="a" style="left:98px;top:226px;width:12px;height:12px;border:1px solid #222;background:#fff"></div>
<svg style="left:97px;top:263px" width="60" height="60"><path d="M2 10.5h49M1 52.5h50" stroke="#111" stroke-width="1"/></svg>
<div class="a" style="left:222px;top:148px;width:4px;height:861px;background:#505050"></div>
<div class="a" style="left:226px;top:148px;width:1694px;height:789px;background:#e9e9e9"></div>
<div class="a" style="left:226px;top:148px;width:1694px;height:24px;background:linear-gradient(#8f959d 0,#aab0b8 8px,#c9ced5 16px,#dfe4ea 22px)"></div>
<div class="a" style="left:226px;top:148px;width:2px;height:789px;background:#f4f6f8"></div>
<div class="a" style="left:227px;top:168px;width:1692px;height:749px;background:#e4ebf2;border:1px solid #f6f8fa"></div>
<svg style="left:226px;top:150px" width="130" height="20"><path d="M2 18l10-15q1-2 3-2h98q2 0 3 2l10 15z" fill="url(#tabg)"/><defs><linearGradient id="tabg" x1="0" y1="0" x2="0" y2="1"><stop offset="0" stop-color="#fff3a0"/><stop offset="1" stop-color="#ffd870"/></linearGradient></defs><path d="M114 7l8 7M122 7l-8 7" stroke="#3a3f4a" stroke-width="1.6"/></svg>
<svg style="left:1900px;top:154px" width="14" height="8"><path d="M1 1h11l-5.5 6z" fill="#444"/></svg>
<div class="a" style="left:230px;top:171px;width:1686px;height:744px;background:#5a5a5a"></div>
<div class="a" style="left:231px;top:172px;width:1684px;height:742px;background:#212830;overflow:hidden" id="vp"></div>
<div class="a" style="left:228px;top:916px;width:1690px;height:20px;background:#eaeaea"></div>
<svg style="left:226px;top:914px" width="300" height="22">
 <path d="M6 5v11M15 5l-7 5.5 7 5.5z" fill="#333" stroke="#333" stroke-width="1"/>
 <path d="M30 6l-5 4.5 5 4.5z" fill="#333"/>
 <path d="M41 6l5 4.5-5 4.5z" fill="#333"/>
 <path d="M56 6l6 4.5-6 4.5zM63 5v11" fill="#333" stroke="#333" stroke-width="1"/>
 <path d="M71.1 2.2h48.7l-7.1 16.1H79.3z" fill="#212830"/>
 <path d="M119.8 2.2l-3.3 8 5 8.1h54l7-16.1l-3.7 8 5.2 8.1h56l6.5-16.1l-3.5 8 5 8.1h13l7-16.1" fill="none" stroke="#6a6a6a" stroke-width=".9"/>
</svg>
<div class="a" style="left:226px;top:936px;width:1694px;height:7px;background:#4f4f4f"></div>
<div class="a" style="left:226px;top:943px;width:1694px;height:66px;background:#fff"></div>
<div class="a" style="left:226px;top:943px;width:19px;height:66px;background:#a0a0a0"></div>
<svg style="left:226px;top:943px" width="20" height="40"><path d="M5.5 6l8 8M13.5 6l-8 8" stroke="#555" stroke-width="1.2"/><path d="M6 24h7M7 24v5h5v-5M5 29h9M9.5 29v4" stroke="#555" fill="none"/></svg>
<div class="a" style="left:245px;top:986px;width:1657px;height:1px;background:#707070"></div>
<div class="a" style="left:1902px;top:945px;width:14px;height:41px;background:#efefef"></div>
<div class="a" style="left:1821px;top:989px;width:80px;height:17px;background:#efefef"></div>
<div class="a" style="left:1837px;top:996px;width:18px;height:2px;background:#777"></div>
<div class="a" style="left:1917px;top:943px;width:3px;height:66px;background:#f4f4f4"></div>
<div class="a" style="left:0;top:1008px;width:1920px;height:1px;background:#3a3a3a"></div>
<div class="a" style="left:13px;top:1007px;width:104px;height:2px;background:#6a6a6a"></div>
<div class="a" style="left:68px;top:1007px;width:49px;height:2px;background:#2a3040"></div>
<div class="a" style="left:0;top:1009px;width:1920px;height:23px;background:linear-gradient(#fafbfc,#e6e9ec 50%,#d9dde1)"></div>
<div class="a" style="left:1769px;top:1009px;width:151px;height:23px;background:linear-gradient(#c4c8cd,#a9adb2 60%,#9a9ea3);border-left:1px solid #555"></div>
<svg style="left:260px;top:1010px" width="400" height="22">
 <g stroke="#555" fill="none" stroke-width="1">
 <path d="M4 4h12v12H4zM7 4v12M10 4v12M13 4v12M4 7h12M4 10h12M4 13h12"/>
 <path d="M27 4h12v12H27zM30 4v12M33 4v12M36 4v12M27 7h12M27 10h12M27 13h12"/>
 <path d="M50 3v13h11M53 13h0"/>
 <circle cx="77" cy="11" r="5"/><path d="M74 15l9-10"/>
 </g>
 <rect x="89.5" y="2.5" width="19" height="18" rx="2" fill="#fbe7a8" stroke="#d8b860"/><rect x="93.5" y="5.5" width="11" height="11" fill="#fff" stroke="#555"/><circle cx="104" cy="5" r="1.5" fill="#f06000"/>
 <rect x="111.5" y="2.5" width="19" height="18" rx="2" fill="#fbe7a8" stroke="#d8b860"/><path d="M114 17l14-12M114 17h14" stroke="#c89020" stroke-width="1.2"/>
 <path d="M135 11h12M141 5v12" stroke="#444" stroke-width="2"/>
 <rect x="155.5" y="2.5" width="19" height="18" rx="2" fill="#fbe7a8" stroke="#d8b860"/><path d="M158 5v8M155 8h7M161 10h10v7h-10z" stroke="#555" fill="none"/>
 <path d="M179 6h14M179 11h14M179 16h14" stroke="#2a5aa8" stroke-width="1.3" stroke-dasharray="3,1"/>
 <path d="M201 6h14" stroke="#2a6ad8" stroke-dasharray="2,1"/><path d="M207 8l0 10 3-3 3 4 1-1-3-4h4z" fill="#fff" stroke="#333" stroke-width=".8"/>
 <path d="M222 8l8-4 8 4-8 4z" fill="#7ab8f0" stroke="#345"/><path d="M222 12l8 4 8-4M222 15l8 4 8-4" stroke="#345" fill="none"/><path d="M232 8l6 10M238 8l-6 10" stroke="#f07000" stroke-width="1.5"/>
 <rect x="243.5" y="2.5" width="19" height="18" rx="2" fill="#fbe7a8" stroke="#d8b860"/><rect x="247.5" y="9.5" width="11" height="8" fill="#ccc" stroke="#555"/><rect x="250.5" y="6.5" width="9" height="7" fill="#eee" stroke="#555"/>
 <path d="M268 18l6-11 6 11z" fill="none" stroke="#444" stroke-width="1.3"/><path d="M271 16h6" stroke="#444"/>
 <path d="M304 9h6l-3 3z" fill="#444"/>
 <path d="M321 18l5-10 5 10zM327 7l3-3" stroke="#555" fill="none" stroke-width="1.2"/><circle cx="331" cy="4" r="2" fill="#7ab"/>
 <path d="M339 18l5-10 5 10zM345 7l3-3" stroke="#555" fill="none" stroke-width="1.2"/>
 <rect x="358.5" y="3.5" width="13" height="13" fill="#ccc" stroke="#555"/><path d="M359 7h12M359 10h12M359 13h12M362 4v12M365 4v12M368 4v12" stroke="#888" stroke-width=".6"/>
 <path d="M383 3v8M379 7h8" stroke="#444"/><rect x="385.5" y="9.5" width="7" height="7" fill="#555"/>
 </g>
</svg>
<svg style="left:1775px;top:1010px" width="120" height="22">
 <circle cx="10" cy="11" r="5" fill="none" stroke="#333" stroke-width="2.5" stroke-dasharray="2,1.5"/><circle cx="10" cy="11" r="2" fill="#eee"/>
 <rect x="27.5" y="10.5" width="8" height="8" fill="#fff" stroke="#333"/><path d="M33 10.5V6c0-3 5-3 5 0v3" fill="none" stroke="#333" stroke-width="1.3"/><path d="M31 13v4" stroke="#333"/>
 <path d="M55 15c0-4-4-5-4-9a5 5 0 0 1 10 0c0 4-4 5-4 9z" fill="#fff59a" stroke="#c8b030"/><rect x="52" y="15" width="6" height="4" fill="#2a3ab8"/>
 <rect x="70.5" y="6.5" width="12" height="8" fill="#f4f4f4" stroke="#555"/><circle cx="80" cy="14" r="3" fill="#fff" stroke="#444"/><path d="M82 16l3 3" stroke="#444" stroke-width="1.5"/>
 <rect x="91.5" y="6.5" width="13" height="11" fill="#eee" stroke="#999"/>
</svg>
<svg style="left:231px;top:172px" width="1684" height="742" viewBox="231 172 1684 742" shape-rendering="crispEdges"><defs><pattern id="txw" width="4" height="5" patternUnits="userSpaceOnUse"><rect x="0" y="0" width="3" height="5" fill="#f4f4f4"/><rect x="0" y="2" width="1.5" height="1" fill="#212830"/></pattern><pattern id="txg" width="4" height="5" patternUnits="userSpaceOnUse"><rect x="0" y="0" width="3" height="5" fill="#808080"/><rect x="0" y="2" width="1.5" height="1" fill="#212830"/></pattern></defs><rect x="460.5" y="175.5" width="1042.0" height="736.0" fill="none" stroke="#c8c8c8" stroke-width="1"/><rect x="485.5" y="200.5" width="992.0" height="686.0" fill="none" stroke="#0000ff" stroke-width="1.7"/><text x="913" y="223" font-size="16" fill="#e8e8e8" font-family="'Liberation Sans',sans-serif" letter-spacing="16">平面図</text><text x="998" y="223" font-size="11" fill="#e8e8e8" font-family="'Liberation Sans',sans-serif" textLength="50" lengthAdjust="spacingAndGlyphs">S = 1 : 500</text><line x1="914" y1="224" x2="1049" y2="224" stroke="#f4f4f4" stroke-width="1" /><line x1="914" y1="226.5" x2="1049" y2="226.5" stroke="#f4f4f4" stroke-width="1" /><line x1="505.5" y1="246.5" x2="1443" y2="246.5" stroke="#f4f4f4" stroke-width="1.1" /><line x1="505.5" y1="266.5" x2="1443" y2="266.5" stroke="#f4f4f4" stroke-width="1.1" /><line x1="505.5" y1="284.5" x2="1443" y2="284.5" stroke="#f4f4f4" stroke-width="1.1" /><line x1="505.5" y1="303.5" x2="1443" y2="303.5" stroke="#f4f4f4" stroke-width="1.1" /><line x1="505.5" y1="240" x2="505.5" y2="450" stroke="#f4f4f4" stroke-width="1.1" /><text x="934" y="244.5" font-size="6.5" font-weight="bold" fill="#f4f4f4" stroke="#f4f4f4" stroke-width="0.35" textLength="81.0" lengthAdjust="spacingAndGlyphs" font-family="'Liberation Sans',sans-serif">HPPEφ75mm L=143.10m(L=1</text><text x="667" y="264.5" font-size="5.9" font-weight="bold" fill="#f4f4f4" stroke="#f4f4f4" stroke-width="0.35" textLength="116.0" lengthAdjust="spacingAndGlyphs" font-family="'Liberation Sans',sans-serif">HPPEφ75mm L=143.10m(L=147.82m) 0.3m </text><text x="1137" y="264.5" font-size="5.9" font-weight="bold" fill="#f4f4f4" stroke="#f4f4f4" stroke-width="0.35" textLength="114.0" lengthAdjust="spacingAndGlyphs" font-family="'Liberation Sans',sans-serif">HPPEφ75mm L=143.10m(L=147.82m) 0.3m</text><line x1="946.25" y1="258" x2="946.25" y2="303.5" stroke="#f4f4f4" stroke-width="1" /><text x="947" y="257" font-size="6.5" font-weight="bold" fill="#f4f4f4" stroke="#f4f4f4" stroke-width="0.35" textLength="28.0" lengthAdjust="spacingAndGlyphs" font-family="'Liberation Sans',sans-serif">HPPEφ75m</text><line x1="946.25" y1="258" x2="976" y2="258" stroke="#f4f4f4" stroke-width="0.8" /><text x="509" y="276.5" font-size="6.5" font-weight="bold" fill="#f4f4f4" stroke="#f4f4f4" stroke-width="0.35" textLength="16.0" lengthAdjust="spacingAndGlyphs" font-family="'Liberation Sans',sans-serif">7300</text><text x="508" y="284.5" font-size="6.5" font-weight="bold" fill="#f4f4f4" stroke="#f4f4f4" stroke-width="0.35" textLength="19.0" lengthAdjust="spacingAndGlyphs" font-family="'Liberation Sans',sans-serif">73004</text><text x="695" y="284.5" font-size="6.5" font-weight="bold" fill="#f4f4f4" stroke="#f4f4f4" stroke-width="0.35" textLength="20.0" lengthAdjust="spacingAndGlyphs" font-family="'Liberation Sans',sans-serif">HPPEφ7</text><text x="886" y="276.5" font-size="6.5" font-weight="bold" fill="#f4f4f4" stroke="#f4f4f4" stroke-width="0.35" textLength="14.0" lengthAdjust="spacingAndGlyphs" font-family="'Liberation Sans',sans-serif">7300</text><text x="883" y="284.5" font-size="6.5" font-weight="bold" fill="#f4f4f4" stroke="#f4f4f4" stroke-width="0.35" textLength="19.0" lengthAdjust="spacingAndGlyphs" font-family="'Liberation Sans',sans-serif">73004</text><text x="918" y="284.5" font-size="6.5" font-weight="bold" fill="#f4f4f4" stroke="#f4f4f4" stroke-width="0.35" textLength="14.0" lengthAdjust="spacingAndGlyphs" font-family="'Liberation Sans',sans-serif">7300</text><text x="1026" y="284.5" font-size="6.5" font-weight="bold" fill="#f4f4f4" stroke="#f4f4f4" stroke-width="0.35" textLength="18.0" lengthAdjust="spacingAndGlyphs" font-family="'Liberation Sans',sans-serif">73004</text><text x="1128" y="276.5" font-size="6.5" font-weight="bold" fill="#f4f4f4" stroke="#f4f4f4" stroke-width="0.35" textLength="14.0" lengthAdjust="spacingAndGlyphs" font-family="'Liberation Sans',sans-serif">7300</text><text x="1126" y="284.5" font-size="6.5" font-weight="bold" fill="#f4f4f4" stroke="#f4f4f4" stroke-width="0.35" textLength="19.0" lengthAdjust="spacingAndGlyphs" font-family="'Liberation Sans',sans-serif">73004</text><text x="1190" y="284.5" font-size="6.5" font-weight="bold" fill="#f4f4f4" stroke="#f4f4f4" stroke-width="0.35" textLength="16.0" lengthAdjust="spacingAndGlyphs" font-family="'Liberation Sans',sans-serif">7300</text><text x="1255" y="276.5" font-size="6.5" font-weight="bold" fill="#f4f4f4" stroke="#f4f4f4" stroke-width="0.35" textLength="14.0" lengthAdjust="spacingAndGlyphs" font-family="'Liberation Sans',sans-serif">7300</text><text x="1253" y="284.5" font-size="6.5" font-weight="bold" fill="#f4f4f4" stroke="#f4f4f4" stroke-width="0.35" textLength="19.0" lengthAdjust="spacingAndGlyphs" font-family="'Liberation Sans',sans-serif">73004</text><text x="1317" y="284.5" font-size="6.5" font-weight="bold" fill="#f4f4f4" stroke="#f4f4f4" stroke-width="0.35" textLength="18.0" lengthAdjust="spacingAndGlyphs" font-family="'Liberation Sans',sans-serif">73004</text><text x="1384" y="276.5" font-size="6.5" font-weight="bold" fill="#f4f4f4" stroke="#f4f4f4" stroke-width="0.35" textLength="14.0" lengthAdjust="spacingAndGlyphs" font-family="'Liberation Sans',sans-serif">7300</text><text x="1380" y="284.5" font-size="6.5" font-weight="bold" fill="#f4f4f4" stroke="#f4f4f4" stroke-width="0.35" textLength="20.0" lengthAdjust="spacingAndGlyphs" font-family="'Liberation Sans',sans-serif">HPPEφ7</text><text x="1412" y="284.5" font-size="6.5" font-weight="bold" fill="#f4f4f4" stroke="#f4f4f4" stroke-width="0.35" textLength="18.0" lengthAdjust="spacingAndGlyphs" font-family="'Liberation Sans',sans-serif">73004</text><text x="500" y="242" font-size="7" font-weight="bold" fill="#f4f4f4" stroke="#f4f4f4" stroke-width=".4" textLength="16" lengthAdjust="spacingAndGlyphs" transform="rotate(-35 508 238)" font-family="'Liberation Sans',sans-serif">No.0</text><circle cx="508.75" cy="290" r="1.9" fill="none" stroke="#f4f4f4" stroke-width="1.1" shape-rendering="geometricPrecision"/><line x1="510.75" y1="291.5" x2="513.75" y2="291.5" stroke="#f4f4f4" stroke-width="1" /><rect x="507.75" y="293" width="17.0" height="4" fill="#f4f4f4" opacity="0.95"/><rect x="508.75" y="298" width="15.0" height="4" fill="#f4f4f4" opacity="0.95"/><circle cx="530" cy="290" r="1.9" fill="none" stroke="#f4f4f4" stroke-width="1.1" shape-rendering="geometricPrecision"/><line x1="532" y1="291.5" x2="535" y2="291.5" stroke="#f4f4f4" stroke-width="1" /><rect x="529" y="293" width="17" height="4" fill="#f4f4f4" opacity="0.95"/><rect x="530" y="298" width="15" height="4" fill="#f4f4f4" opacity="0.95"/><circle cx="551.25" cy="290" r="1.9" fill="none" stroke="#f4f4f4" stroke-width="1.1" shape-rendering="geometricPrecision"/><line x1="553.25" y1="291.5" x2="556.25" y2="291.5" stroke="#f4f4f4" stroke-width="1" /><rect x="550.25" y="293" width="17.0" height="4" fill="#f4f4f4" opacity="0.95"/><rect x="551.25" y="298" width="15.0" height="4" fill="#f4f4f4" opacity="0.95"/><circle cx="572.5" cy="290" r="1.9" fill="none" stroke="#f4f4f4" stroke-width="1.1" shape-rendering="geometricPrecision"/><line x1="574.5" y1="291.5" x2="577.5" y2="291.5" stroke="#f4f4f4" stroke-width="1" /><rect x="571.5" y="293" width="17.0" height="4" fill="#f4f4f4" opacity="0.95"/><rect x="572.5" y="298" width="15.0" height="4" fill="#f4f4f4" opacity="0.95"/><circle cx="593.75" cy="290" r="1.9" fill="none" stroke="#f4f4f4" stroke-width="1.1" shape-rendering="geometricPrecision"/><line x1="595.75" y1="291.5" x2="598.75" y2="291.5" stroke="#f4f4f4" stroke-width="1" /><rect x="592.75" y="293" width="17.0" height="4" fill="#f4f4f4" opacity="0.95"/><rect x="593.75" y="298" width="15.0" height="4" fill="#f4f4f4" opacity="0.95"/><circle cx="615" cy="290" r="1.9" fill="none" stroke="#f4f4f4" stroke-width="1.1" shape-rendering="geometricPrecision"/><line x1="617" y1="291.5" x2="620" y2="291.5" stroke="#f4f4f4" stroke-width="1" /><rect x="614" y="293" width="17" height="4" fill="#f4f4f4" opacity="0.95"/><rect x="615" y="298" width="15" height="4" fill="#f4f4f4" opacity="0.95"/><circle cx="636.25" cy="290" r="1.9" fill="none" stroke="#f4f4f4" stroke-width="1.1" shape-rendering="geometricPrecision"/><line x1="638.25" y1="291.5" x2="641.25" y2="291.5" stroke="#f4f4f4" stroke-width="1" /><rect x="635.25" y="293" width="17.0" height="4" fill="#f4f4f4" opacity="0.95"/><rect x="636.25" y="298" width="15.0" height="4" fill="#f4f4f4" opacity="0.95"/><circle cx="657.5" cy="290" r="1.9" fill="none" stroke="#f4f4f4" stroke-width="1.1" shape-rendering="geometricPrecision"/><line x1="659.5" y1="291.5" x2="662.5" y2="291.5" stroke="#f4f4f4" stroke-width="1" /><rect x="656.5" y="293" width="17.0" height="4" fill="#f4f4f4" opacity="0.95"/><rect x="657.5" y="298" width="15.0" height="4" fill="#f4f4f4" opacity="0.95"/><circle cx="693.75" cy="290" r="1.9" fill="none" stroke="#f4f4f4" stroke-width="1.1" shape-rendering="geometricPrecision"/><line x1="695.75" y1="291.5" x2="698.75" y2="291.5" stroke="#f4f4f4" stroke-width="1" /><rect x="692.75" y="293" width="17.0" height="4" fill="#f4f4f4" opacity="0.95"/><rect x="693.75" y="298" width="15.0" height="4" fill="#f4f4f4" opacity="0.95"/><circle cx="730" cy="290" r="1.9" fill="none" stroke="#f4f4f4" stroke-width="1.1" shape-rendering="geometricPrecision"/><line x1="732" y1="291.5" x2="735" y2="291.5" stroke="#f4f4f4" stroke-width="1" /><rect x="729" y="293" width="17" height="4" fill="#f4f4f4" opacity="0.95"/><rect x="730" y="298" width="15" height="4" fill="#f4f4f4" opacity="0.95"/><circle cx="751.25" cy="290" r="1.9" fill="none" stroke="#f4f4f4" stroke-width="1.1" shape-rendering="geometricPrecision"/><line x1="753.25" y1="291.5" x2="756.25" y2="291.5" stroke="#f4f4f4" stroke-width="1" /><rect x="750.25" y="293" width="17.0" height="4" fill="#f4f4f4" opacity="0.95"/><rect x="751.25" y="298" width="15.0" height="4" fill="#f4f4f4" opacity="0.95"/><circle cx="772.5" cy="290" r="1.9" fill="none" stroke="#f4f4f4" stroke-width="1.1" shape-rendering="geometricPrecision"/><line x1="774.5" y1="291.5" x2="777.5" y2="291.5" stroke="#f4f4f4" stroke-width="1" /><rect x="771.5" y="293" width="17.0" height="4" fill="#f4f4f4" opacity="0.95"/><rect x="772.5" y="298" width="15.0" height="4" fill="#f4f4f4" opacity="0.95"/><circle cx="798.75" cy="290" r="1.9" fill="none" stroke="#f4f4f4" stroke-width="1.1" shape-rendering="geometricPrecision"/><line x1="800.75" y1="291.5" x2="803.75" y2="291.5" stroke="#f4f4f4" stroke-width="1" /><rect x="797.75" y="293" width="17.0" height="4" fill="#f4f4f4" opacity="0.95"/><rect x="798.75" y="298" width="15.0" height="4" fill="#f4f4f4" opacity="0.95"/><circle cx="821.25" cy="290" r="1.9" fill="none" stroke="#f4f4f4" stroke-width="1.1" shape-rendering="geometricPrecision"/><line x1="823.25" y1="291.5" x2="826.25" y2="291.5" stroke="#f4f4f4" stroke-width="1" /><rect x="820.25" y="293" width="17.0" height="4" fill="#f4f4f4" opacity="0.95"/><rect x="821.25" y="298" width="15.0" height="4" fill="#f4f4f4" opacity="0.95"/><circle cx="842.5" cy="290" r="1.9" fill="none" stroke="#f4f4f4" stroke-width="1.1" shape-rendering="geometricPrecision"/><line x1="844.5" y1="291.5" x2="847.5" y2="291.5" stroke="#f4f4f4" stroke-width="1" /><rect x="841.5" y="293" width="17.0" height="4" fill="#f4f4f4" opacity="0.95"/><rect x="842.5" y="298" width="15.0" height="4" fill="#f4f4f4" opacity="0.95"/><circle cx="863.75" cy="290" r="1.9" fill="none" stroke="#f4f4f4" stroke-width="1.1" shape-rendering="geometricPrecision"/><line x1="865.75" y1="291.5" x2="868.75" y2="291.5" stroke="#f4f4f4" stroke-width="1" /><rect x="862.75" y="293" width="17.0" height="4" fill="#f4f4f4" opacity="0.95"/><rect x="863.75" y="298" width="15.0" height="4" fill="#f4f4f4" opacity="0.95"/><circle cx="885" cy="290" r="1.9" fill="none" stroke="#f4f4f4" stroke-width="1.1" shape-rendering="geometricPrecision"/><line x1="887" y1="291.5" x2="890" y2="291.5" stroke="#f4f4f4" stroke-width="1" /><rect x="884" y="293" width="17" height="4" fill="#f4f4f4" opacity="0.95"/><rect x="885" y="298" width="15" height="4" fill="#f4f4f4" opacity="0.95"/><circle cx="906.25" cy="290" r="1.9" fill="none" stroke="#f4f4f4" stroke-width="1.1" shape-rendering="geometricPrecision"/><line x1="908.25" y1="291.5" x2="911.25" y2="291.5" stroke="#f4f4f4" stroke-width="1" /><rect x="905.25" y="293" width="17.0" height="4" fill="#f4f4f4" opacity="0.95"/><rect x="906.25" y="298" width="15.0" height="4" fill="#f4f4f4" opacity="0.95"/><circle cx="927.5" cy="290" r="1.9" fill="none" stroke="#f4f4f4" stroke-width="1.1" shape-rendering="geometricPrecision"/><line x1="929.5" y1="291.5" x2="932.5" y2="291.5" stroke="#f4f4f4" stroke-width="1" /><rect x="926.5" y="293" width="17.0" height="4" fill="#f4f4f4" opacity="0.95"/><rect x="927.5" y="298" width="15.0" height="4" fill="#f4f4f4" opacity="0.95"/><circle cx="948.75" cy="290" r="1.9" fill="none" stroke="#f4f4f4" stroke-width="1.1" shape-rendering="geometricPrecision"/><line x1="950.75" y1="291.5" x2="953.75" y2="291.5" stroke="#f4f4f4" stroke-width="1" /><rect x="947.75" y="293" width="17.0" height="4" fill="#f4f4f4" opacity="0.95"/><rect x="948.75" y="298" width="15.0" height="4" fill="#f4f4f4" opacity="0.95"/><circle cx="985" cy="290" r="1.9" fill="none" stroke="#f4f4f4" stroke-width="1.1" shape-rendering="geometricPrecision"/><line x1="987" y1="291.5" x2="990" y2="291.5" stroke="#f4f4f4" stroke-width="1" /><rect x="984" y="293" width="17" height="4" fill="#f4f4f4" opacity="0.95"/><rect x="985" y="298" width="15" height="4" fill="#f4f4f4" opacity="0.95"/><circle cx="1020" cy="290" r="1.9" fill="none" stroke="#f4f4f4" stroke-width="1.1" shape-rendering="geometricPrecision"/><line x1="1022" y1="291.5" x2="1025" y2="291.5" stroke="#f4f4f4" stroke-width="1" /><rect x="1019" y="293" width="17" height="4" fill="#f4f4f4" opacity="0.95"/><rect x="1020" y="298" width="15" height="4" fill="#f4f4f4" opacity="0.95"/><circle cx="1042.5" cy="290" r="1.9" fill="none" stroke="#f4f4f4" stroke-width="1.1" shape-rendering="geometricPrecision"/><line x1="1044.5" y1="291.5" x2="1047.5" y2="291.5" stroke="#f4f4f4" stroke-width="1" /><rect x="1041.5" y="293" width="17.0" height="4" fill="#f4f4f4" opacity="0.95"/><rect x="1042.5" y="298" width="15.0" height="4" fill="#f4f4f4" opacity="0.95"/><circle cx="1063.75" cy="290" r="1.9" fill="none" stroke="#f4f4f4" stroke-width="1.1" shape-rendering="geometricPrecision"/><line x1="1065.75" y1="291.5" x2="1068.75" y2="291.5" stroke="#f4f4f4" stroke-width="1" /><rect x="1062.75" y="293" width="17.0" height="4" fill="#f4f4f4" opacity="0.95"/><rect x="1063.75" y="298" width="15.0" height="4" fill="#f4f4f4" opacity="0.95"/><circle cx="1085" cy="290" r="1.9" fill="none" stroke="#f4f4f4" stroke-width="1.1" shape-rendering="geometricPrecision"/><line x1="1087" y1="291.5" x2="1090" y2="291.5" stroke="#f4f4f4" stroke-width="1" /><rect x="1084" y="293" width="17" height="4" fill="#f4f4f4" opacity="0.95"/><rect x="1085" y="298" width="15" height="4" fill="#f4f4f4" opacity="0.95"/><circle cx="1106.25" cy="290" r="1.9" fill="none" stroke="#f4f4f4" stroke-width="1.1" shape-rendering="geometricPrecision"/><line x1="1108.25" y1="291.5" x2="1111.25" y2="291.5" stroke="#f4f4f4" stroke-width="1" /><rect x="1105.25" y="293" width="17.0" height="4" fill="#f4f4f4" opacity="0.95"/><rect x="1106.25" y="298" width="15.0" height="4" fill="#f4f4f4" opacity="0.95"/><circle cx="1127.5" cy="290" r="1.9" fill="none" stroke="#f4f4f4" stroke-width="1.1" shape-rendering="geometricPrecision"/><line x1="1129.5" y1="291.5" x2="1132.5" y2="291.5" stroke="#f4f4f4" stroke-width="1" /><rect x="1126.5" y="293" width="17.0" height="4" fill="#f4f4f4" opacity="0.95"/><rect x="1127.5" y="298" width="15.0" height="4" fill="#f4f4f4" opacity="0.95"/><circle cx="1148.75" cy="290" r="1.9" fill="none" stroke="#f4f4f4" stroke-width="1.1" shape-rendering="geometricPrecision"/><line x1="1150.75" y1="291.5" x2="1153.75" y2="291.5" stroke="#f4f4f4" stroke-width="1" /><rect x="1147.75" y="293" width="17.0" height="4" fill="#f4f4f4" opacity="0.95"/><rect x="1148.75" y="298" width="15.0" height="4" fill="#f4f4f4" opacity="0.95"/><circle cx="1170" cy="290" r="1.9" fill="none" stroke="#f4f4f4" stroke-width="1.1" shape-rendering="geometricPrecision"/><line x1="1172" y1="291.5" x2="1175" y2="291.5" stroke="#f4f4f4" stroke-width="1" /><rect x="1169" y="293" width="17" height="4" fill="#f4f4f4" opacity="0.95"/><rect x="1170" y="298" width="15" height="4" fill="#f4f4f4" opacity="0.95"/><circle cx="1191.25" cy="290" r="1.9" fill="none" stroke="#f4f4f4" stroke-width="1.1" shape-rendering="geometricPrecision"/><line x1="1193.25" y1="291.5" x2="1196.25" y2="291.5" stroke="#f4f4f4" stroke-width="1" /><rect x="1190.25" y="293" width="17.0" height="4" fill="#f4f4f4" opacity="0.95"/><rect x="1191.25" y="298" width="15.0" height="4" fill="#f4f4f4" opacity="0.95"/><circle cx="1212.5" cy="290" r="1.9" fill="none" stroke="#f4f4f4" stroke-width="1.1" shape-rendering="geometricPrecision"/><line x1="1214.5" y1="291.5" x2="1217.5" y2="291.5" stroke="#f4f4f4" stroke-width="1" /><rect x="1211.5" y="293" width="17.0" height="4" fill="#f4f4f4" opacity="0.95"/><rect x="1212.5" y="298" width="15.0" height="4" fill="#f4f4f4" opacity="0.95"/><circle cx="1233.75" cy="290" r="1.9" fill="none" stroke="#f4f4f4" stroke-width="1.1" shape-rendering="geometricPrecision"/><line x1="1235.75" y1="291.5" x2="1238.75" y2="291.5" stroke="#f4f4f4" stroke-width="1" /><rect x="1232.75" y="293" width="17.0" height="4" fill="#f4f4f4" opacity="0.95"/><rect x="1233.75" y="298" width="15.0" height="4" fill="#f4f4f4" opacity="0.95"/><circle cx="1255" cy="290" r="1.9" fill="none" stroke="#f4f4f4" stroke-width="1.1" shape-rendering="geometricPrecision"/><line x1="1257" y1="291.5" x2="1260" y2="291.5" stroke="#f4f4f4" stroke-width="1" /><rect x="1254" y="293" width="17" height="4" fill="#f4f4f4" opacity="0.95"/><rect x="1255" y="298" width="15" height="4" fill="#f4f4f4" opacity="0.95"/><circle cx="1276.25" cy="290" r="1.9" fill="none" stroke="#f4f4f4" stroke-width="1.1" shape-rendering="geometricPrecision"/><line x1="1278.25" y1="291.5" x2="1281.25" y2="291.5" stroke="#f4f4f4" stroke-width="1" /><rect x="1275.25" y="293" width="17.0" height="4" fill="#f4f4f4" opacity="0.95"/><rect x="1276.25" y="298" width="15.0" height="4" fill="#f4f4f4" opacity="0.95"/><circle cx="1297.5" cy="290" r="1.9" fill="none" stroke="#f4f4f4" stroke-width="1.1" shape-rendering="geometricPrecision"/><line x1="1299.5" y1="291.5" x2="1302.5" y2="291.5" stroke="#f4f4f4" stroke-width="1" /><rect x="1296.5" y="293" width="17.0" height="4" fill="#f4f4f4" opacity="0.95"/><rect x="1297.5" y="298" width="15.0" height="4" fill="#f4f4f4" opacity="0.95"/><circle cx="1318.75" cy="290" r="1.9" fill="none" stroke="#f4f4f4" stroke-width="1.1" shape-rendering="geometricPrecision"/><line x1="1320.75" y1="291.5" x2="1323.75" y2="291.5" stroke="#f4f4f4" stroke-width="1" /><rect x="1317.75" y="293" width="17.0" height="4" fill="#f4f4f4" opacity="0.95"/><rect x="1318.75" y="298" width="15.0" height="4" fill="#f4f4f4" opacity="0.95"/><circle cx="1340" cy="290" r="1.9" fill="none" stroke="#f4f4f4" stroke-width="1.1" shape-rendering="geometricPrecision"/><line x1="1342" y1="291.5" x2="1345" y2="291.5" stroke="#f4f4f4" stroke-width="1" /><rect x="1339" y="293" width="17" height="4" fill="#f4f4f4" opacity="0.95"/><rect x="1340" y="298" width="15" height="4" fill="#f4f4f4" opacity="0.95"/><circle cx="1361.25" cy="290" r="1.9" fill="none" stroke="#f4f4f4" stroke-width="1.1" shape-rendering="geometricPrecision"/><line x1="1363.25" y1="291.5" x2="1366.25" y2="291.5" stroke="#f4f4f4" stroke-width="1" /><rect x="1360.25" y="293" width="17.0" height="4" fill="#f4f4f4" opacity="0.95"/><rect x="1361.25" y="298" width="15.0" height="4" fill="#f4f4f4" opacity="0.95"/><circle cx="1382.5" cy="290" r="1.9" fill="none" stroke="#f4f4f4" stroke-width="1.1" shape-rendering="geometricPrecision"/><line x1="1384.5" y1="291.5" x2="1387.5" y2="291.5" stroke="#f4f4f4" stroke-width="1" /><rect x="1381.5" y="293" width="17.0" height="4" fill="#f4f4f4" opacity="0.95"/><rect x="1382.5" y="298" width="15.0" height="4" fill="#f4f4f4" opacity="0.95"/><circle cx="1403.75" cy="290" r="1.9" fill="none" stroke="#f4f4f4" stroke-width="1.1" shape-rendering="geometricPrecision"/><line x1="1405.75" y1="291.5" x2="1408.75" y2="291.5" stroke="#f4f4f4" stroke-width="1" /><rect x="1402.75" y="293" width="17.0" height="4" fill="#f4f4f4" opacity="0.95"/><rect x="1403.75" y="298" width="15.0" height="4" fill="#f4f4f4" opacity="0.95"/><circle cx="1425" cy="290" r="1.9" fill="none" stroke="#f4f4f4" stroke-width="1.1" shape-rendering="geometricPrecision"/><line x1="1427" y1="291.5" x2="1430" y2="291.5" stroke="#f4f4f4" stroke-width="1" /><rect x="1424" y="293" width="17" height="4" fill="#f4f4f4" opacity="0.95"/><rect x="1425" y="298" width="15" height="4" fill="#f4f4f4" opacity="0.95"/><rect x="1441" y="298" width="6" height="5" fill="#f4f4f4" opacity="1"/><line x1="527.5" y1="284.5" x2="527.5" y2="303.5" stroke="#f4f4f4" stroke-width="1" /><line x1="882.5" y1="284.5" x2="882.5" y2="303.5" stroke="#f4f4f4" stroke-width="1" /><line x1="903.75" y1="284.5" x2="903.75" y2="303.5" stroke="#f4f4f4" stroke-width="1" /><line x1="1124.5" y1="284.5" x2="1124.5" y2="303.5" stroke="#f4f4f4" stroke-width="1" /><line x1="1145.5" y1="284.5" x2="1145.5" y2="303.5" stroke="#f4f4f4" stroke-width="1" /><line x1="1251.25" y1="284.5" x2="1251.25" y2="303.5" stroke="#f4f4f4" stroke-width="1" /><line x1="1272.5" y1="284.5" x2="1272.5" y2="303.5" stroke="#f4f4f4" stroke-width="1" /><line x1="1378.75" y1="284.5" x2="1378.75" y2="303.5" stroke="#f4f4f4" stroke-width="1" /><line x1="1400" y1="284.5" x2="1400" y2="303.5" stroke="#f4f4f4" stroke-width="1" /><polyline points="527.5,303.5 527.5,355 585,396" fill="none" stroke="#f4f4f4" stroke-width="1" /><polyline points="548.25,303.5 548.25,325 590,392" fill="none" stroke="#f4f4f4" stroke-width="1" /><polyline points="569.5,303.5 569.5,327 594,392" fill="none" stroke="#f4f4f4" stroke-width="1" /><polyline points="590.5,303.5 590.5,325 612,395" fill="none" stroke="#f4f4f4" stroke-width="1" /><polyline points="612.5,303.5 612.5,327 640,397" fill="none" stroke="#f4f4f4" stroke-width="1" /><polyline points="633.25,303.5 633.25,327 648,397" fill="none" stroke="#f4f4f4" stroke-width="1" /><polyline points="654.25,303.5 654.25,327 667.5,392.5" fill="none" stroke="#f4f4f4" stroke-width="1" /><polyline points="675.5,303.5 675.5,327 681,392.5" fill="none" stroke="#f4f4f4" stroke-width="1" /><polyline points="727.5,303.5 727.5,327 745,392" fill="none" stroke="#f4f4f4" stroke-width="1" /><polyline points="749.25,303.5 749.25,327 760,392" fill="none" stroke="#f4f4f4" stroke-width="1" /><polyline points="770,303.5 770,326 816,395" fill="none" stroke="#f4f4f4" stroke-width="1" /><polyline points="791.25,303.5 791.25,326 828,395" fill="none" stroke="#f4f4f4" stroke-width="1" /><polyline points="818.75,303.5 818.75,326 865,392" fill="none" stroke="#f4f4f4" stroke-width="1" /><polyline points="839.5,303.5 839.5,326 877,395" fill="none" stroke="#f4f4f4" stroke-width="1" /><polyline points="861.25,303.5 861.25,326 905,385" fill="none" stroke="#f4f4f4" stroke-width="1" /><polyline points="882.5,303.5 882.5,326 920,390" fill="none" stroke="#f4f4f4" stroke-width="1" /><polyline points="903.75,303.5 903.75,326 930,392" fill="none" stroke="#f4f4f4" stroke-width="1" /><polyline points="925,303.5 925,326 935,392" fill="none" stroke="#f4f4f4" stroke-width="1" /><polyline points="946.25,303.5 946.25,392 946.25,392" fill="none" stroke="#f4f4f4" stroke-width="1" /><polyline points="967.5,303.5 967.5,326 952,392" fill="none" stroke="#f4f4f4" stroke-width="1" /><polyline points="1017.5,303.5 1017.5,387 1017.5,387" fill="none" stroke="#f4f4f4" stroke-width="1" /><polyline points="1038.75,303.5 1038.75,387 1038.75,387" fill="none" stroke="#f4f4f4" stroke-width="1" /><polyline points="1060,303.5 1060,387 1060,387" fill="none" stroke="#f4f4f4" stroke-width="1" /><polyline points="1081.25,303.5 1081.25,325 1072.5,385" fill="none" stroke="#f4f4f4" stroke-width="1" /><polyline points="1102.5,303.5 1102.5,325 1088.75,385" fill="none" stroke="#f4f4f4" stroke-width="1" /><polyline points="1124.5,303.5 1124.5,326 1097.5,388" fill="none" stroke="#f4f4f4" stroke-width="1" /><polyline points="1145.5,303.5 1145.5,326 1111,387.5" fill="none" stroke="#f4f4f4" stroke-width="1" /><polyline points="1166.25,303.5 1166.25,326 1131,386" fill="none" stroke="#f4f4f4" stroke-width="1" /><polyline points="1187.5,303.5 1187.5,326 1167.5,387.5" fill="none" stroke="#f4f4f4" stroke-width="1" /><polyline points="1209.5,303.5 1209.5,326 1167.5,387.5" fill="none" stroke="#f4f4f4" stroke-width="1" /><polyline points="1230,303.5 1230,326 1167.5,387.5" fill="none" stroke="#f4f4f4" stroke-width="1" /><polyline points="1251.25,303.5 1251.25,326 1167.5,387.5" fill="none" stroke="#f4f4f4" stroke-width="1" /><polyline points="1272.5,303.5 1272.5,326 1212.5,387.5" fill="none" stroke="#f4f4f4" stroke-width="1" /><polyline points="1293.75,303.5 1293.75,326 1212.5,387.5" fill="none" stroke="#f4f4f4" stroke-width="1" /><polyline points="1315,303.5 1315,326 1212.5,387.5" fill="none" stroke="#f4f4f4" stroke-width="1" /><polyline points="1336.25,303.5 1336.25,326 1217,387" fill="none" stroke="#f4f4f4" stroke-width="1" /><polyline points="1357.5,303.5 1357.5,326 1252,388" fill="none" stroke="#f4f4f4" stroke-width="1" /><polyline points="1378.75,303.5 1378.75,326 1270,386" fill="none" stroke="#f4f4f4" stroke-width="1" /><polyline points="1400,303.5 1400,326 1290,385" fill="none" stroke="#f4f4f4" stroke-width="1" /><polyline points="1421.25,303.5 1421.25,326 1305,384" fill="none" stroke="#f4f4f4" stroke-width="1" /><polyline points="1442.5,303.5 1442.5,326 1337,383" fill="none" stroke="#f4f4f4" stroke-width="1" /><polyline points="505.5,450 585,407.5" fill="none" stroke="#f4f4f4" stroke-width="1" /><polyline points="590,382.5 900,380.5 1140,372.5 1462,373.8" fill="none" stroke="#808080" stroke-width="2" /><polyline points="540,384.5 800,384 940,380.5 1140,374.5 1300,375.5 1462,376.5" fill="none" stroke="#ff7f00" stroke-width="1.4" stroke-dasharray="14,2,2,2"/><polyline points="540,390 900,389 1000,384 1140,377 1462,382.5" fill="none" stroke="#c0008c" stroke-width="1.3" stroke-dasharray="10,3"/><polyline points="540,392.3 900,392.5 1000,387 1140,380.6 1300,383 1462,383.8" fill="none" stroke="#0000ff" stroke-width="1.5" /><polyline points="540,396.3 900,395.6 1140,386.3 1462,386.9" fill="none" stroke="#808080" stroke-width="2.2" /><polyline points="587,399.4 900,399.4 1000,396 1140,390 1320,391 1340,385.6 1462,385.6" fill="none" stroke="#ff0000" stroke-width="1.8" /><polyline points="540,402 900,401 1140,392 1462,389.4" fill="none" stroke="#808080" stroke-width="1.5" /><rect x="566.7" y="374" width="12.299999999999955" height="3.3999999999999773" fill="#808080" opacity="1"/><rect x="543.7" y="393" width="4.099999999999909" height="3.3999999999999773" fill="#808080" opacity="1"/><rect x="570.8" y="415.3" width="5.0" height="3.3000000000000114" fill="#808080" opacity="1"/><rect x="592" y="402" width="3" height="46" fill="#808080" opacity="1"/><polyline points="540,404 700,403.5" fill="none" stroke="#808080" stroke-width="1" /><polyline points="553.6,330 553.6,468" fill="none" stroke="#808080" stroke-width="1.1" /><polyline points="563.8,330 562,400 561.7,468" fill="none" stroke="#808080" stroke-width="1.1" /><polyline points="584.8,325 584.8,468" fill="none" stroke="#808080" stroke-width="1.1" /><polyline points="595,330 595,468" fill="none" stroke="#808080" stroke-width="1.1" /><polyline points="546,358 555.5,358 555.5,376.7 546,376.7 546,358" fill="none" stroke="#808080" stroke-width="1.1" /><polyline points="541,375 560,375" fill="none" stroke="#808080" stroke-width="1.1" /><polyline points="541,380 552,380" fill="none" stroke="#808080" stroke-width="1.1" /><polyline points="541,405 560,405" fill="none" stroke="#808080" stroke-width="1.1" /><polyline points="541,325 548,325" fill="none" stroke="#808080" stroke-width="1.1" /><polyline points="566,325 566,372 583,372" fill="none" stroke="#808080" stroke-width="1.1" /><polyline points="620.6,358 636,358 636,369 620.6,369 620.6,358" fill="none" stroke="#808080" stroke-width="1.1" /><polyline points="600,356 615,356 615,378" fill="none" stroke="#808080" stroke-width="1.1" /><polyline points="640,355 652,350 660,365" fill="none" stroke="#808080" stroke-width="1.1" /><polyline points="675,350 715,350 715,381 675,381 675,350" fill="none" stroke="#808080" stroke-width="1.1" /><polyline points="686,353 714,353 714,378 686,378" fill="none" stroke="#808080" stroke-width="1.1" /><polyline points="701,341 780,341 780,348.8 701,348.8 701,341" fill="none" stroke="#808080" stroke-width="1.1" /><polyline points="718,351 758.6,351 758.6,370.5 718,370.5 718,351" fill="none" stroke="#808080" stroke-width="1.1" /><polyline points="760,352 800,348 805,378" fill="none" stroke="#808080" stroke-width="1.1" /><polyline points="808,350 840,345 842,378" fill="none" stroke="#808080" stroke-width="1.1" /><polyline points="850,350 880,350 884,365 870,378" fill="none" stroke="#808080" stroke-width="1.1" /><polyline points="905,352 928,352 932,378" fill="none" stroke="#808080" stroke-width="1.1" /><polyline points="935,340 950,338 955,376" fill="none" stroke="#808080" stroke-width="1.1" /><polyline points="700,335 950,325 1060,322" fill="none" stroke="#808080" stroke-width="1.1" /><polyline points="960,340 1010,338 1010,378" fill="none" stroke="#808080" stroke-width="1.1" /><polyline points="1015,333 1058,333 1058,378" fill="none" stroke="#808080" stroke-width="1.1" /><polyline points="1065,343 1118,343 1120,373" fill="none" stroke="#808080" stroke-width="1.1" /><polyline points="1160,330 1208,332 1210,372" fill="none" stroke="#808080" stroke-width="1.1" /><polyline points="1180,340 1180,372" fill="none" stroke="#808080" stroke-width="1.1" /><polyline points="1240,338 1300,338 1300,370" fill="none" stroke="#808080" stroke-width="1.1" /><polyline points="1320,347 1365,347 1365,372" fill="none" stroke="#808080" stroke-width="1.1" /><polyline points="1382,332 1430,332 1430,372" fill="none" stroke="#808080" stroke-width="1.1" /><polyline points="1140,327 1440,318" fill="none" stroke="#808080" stroke-width="1.1" /><polyline points="1445,325 1462,325 1462,360" fill="none" stroke="#808080" stroke-width="1.1" /><polyline points="1000,365 1040,362" fill="none" stroke="#808080" stroke-width="1.1" /><polyline points="586.5,397 586.5,468" fill="none" stroke="#808080" stroke-width="1.1" /><polyline points="591,417.6 591,444.8" fill="none" stroke="#808080" stroke-width="1.1" /><polyline points="637,480 638,477 652,481 665,482 664,487 652,487 648,495 632,498" fill="none" stroke="#808080" stroke-width="1.1" /><polyline points="627,495 636,497 632,510 647,517" fill="none" stroke="#808080" stroke-width="1.1" /><polyline points="622,510 628,506 634,511 627,516 622,510" fill="none" stroke="#808080" stroke-width="1.1" /><polyline points="736,423.7 749.7,427.8 760,432.6 757.8,446.1 750.3,463.8 738.8,485.5 721.2,477.3 726.6,467.8 721.2,465 736,423.7" fill="none" stroke="#808080" stroke-width="1.1" /><polyline points="688,475.3 698.8,478 696,484.1 686,482" fill="none" stroke="#808080" stroke-width="1.1" /><polyline points="692.7,497.7 700,492 723.9,500 718,507.2 700,505" fill="none" stroke="#808080" stroke-width="1.1" /><polyline points="712,430 712,470" fill="none" stroke="#808080" stroke-width="1.1" /><polyline points="645,406 650,430" fill="none" stroke="#808080" stroke-width="1.1" /><polyline points="815.8,415 840.8,415 840.8,460.8 815.8,460.8 815.8,415" fill="none" stroke="#808080" stroke-width="1.1" /><polyline points="837.5,404 850,404 850,411.7 837.5,411.7 837.5,404" fill="none" stroke="#808080" stroke-width="1.1" /><polyline points="919,401.7 919,525" fill="none" stroke="#808080" stroke-width="1.1" /><polyline points="925,401.7 925,525" fill="none" stroke="#808080" stroke-width="1.1" /><polyline points="936,401.7 936,525" fill="none" stroke="#808080" stroke-width="1.1" /><polyline points="979,408 1005,408 1005,447.5 979,447.5 979,408" fill="none" stroke="#808080" stroke-width="1.1" /><polyline points="1003,405 1012,405 1012,450" fill="none" stroke="#808080" stroke-width="1.1" /><polyline points="740,420 765,430 760,460 748,470" fill="none" stroke="#808080" stroke-width="1.1" /><polyline points="840,480 870,478 868,495" fill="none" stroke="#808080" stroke-width="1.1" /><polyline points="850,500 880,500 885,520" fill="none" stroke="#808080" stroke-width="1.1" /><polyline points="1061.8,418.2 1067.5,407.9 1073.2,404.5 1097.3,404.5 1098.4,414.8 1091.6,421.7 1099.6,437.7 1097.3,444.6 1082.4,445.7 1076.7,469.8 1058.3,468.6 1061.8,453.7 1065.2,428.5 1061.8,418.2" fill="none" stroke="#808080" stroke-width="1.1" /><polyline points="1082.4,453.7 1106.5,453.7 1106.5,470.9 1082.4,470.9 1082.4,453.7" fill="none" stroke="#808080" stroke-width="1.1" /><polyline points="1053.3,479 1059.5,479 1059.5,491.6 1053.3,491.6 1053.3,479" fill="none" stroke="#808080" stroke-width="1.1" /><polyline points="1061.8,477.8 1072,477.8 1072,490.4 1061.8,490.4 1061.8,477.8" fill="none" stroke="#808080" stroke-width="1.1" /><polyline points="1074.4,473.2 1085.8,473.2 1085.8,491.6 1074.4,491.6 1074.4,473.2" fill="none" stroke="#808080" stroke-width="1.1" /><polyline points="1107.6,489.3 1113.3,489.3 1113.3,494.5 1107.6,494.5 1107.6,489.3" fill="none" stroke="#808080" stroke-width="1.1" /><polyline points="1119,489.3 1130.5,489.3 1130.5,494.5 1119,494.5 1119,489.3" fill="none" stroke="#808080" stroke-width="1.1" /><polyline points="1128.2,465.2 1134,454.9 1159.2,452.6 1160.3,495 1131.7,494.5 1130.5,481.2 1128.2,465.2" fill="none" stroke="#808080" stroke-width="1.1" /><polyline points="1163.7,481 1177.5,479 1176.3,471 1189,470.2 1189,488 1183.2,495 1162.6,492.7 1163.7,481" fill="none" stroke="#808080" stroke-width="1.1" /><polyline points="1195.8,490 1202.7,484.7 1225,484 1223,497 1218,500 1219,512 1192,512 1193,498 1195.8,490" fill="none" stroke="#808080" stroke-width="1.1" /><polyline points="1107.6,524.8 1107.6,500.7 1123.6,500.7 1123.6,524.8" fill="none" stroke="#808080" stroke-width="1.1" /><polyline points="1135,524.8 1135,515.6 1175.2,515.6 1175.2,524.8" fill="none" stroke="#808080" stroke-width="1.1" /><polyline points="1225.6,442 1225.6,525" fill="none" stroke="#808080" stroke-width="1.1" /><polyline points="1236,442 1236,525" fill="none" stroke="#808080" stroke-width="1.1" /><polyline points="1241.6,490.4 1244,461.8 1268,460.6 1269,505.3 1241.6,506.4 1241.6,490.4" fill="none" stroke="#808080" stroke-width="1.1" /><polyline points="1263.4,435.4 1271.4,435.4 1271.4,458.3 1263.4,458.3 1263.4,435.4" fill="none" stroke="#808080" stroke-width="1.1" /><polyline points="1244,397.6 1262.3,397.6 1262.3,443.4 1244,443.4 1244,397.6" fill="none" stroke="#808080" stroke-width="1.1" /><polyline points="1175,395 1208,395 1208,440" fill="none" stroke="#808080" stroke-width="1.1" /><polyline points="1170,400 1170,470" fill="none" stroke="#808080" stroke-width="1.1" /><polyline points="1346,389.6 1359.7,524.8" fill="none" stroke="#808080" stroke-width="1.1" /><polyline points="1351.6,389.6 1363,524.8" fill="none" stroke="#808080" stroke-width="1.1" /><polyline points="1363,397.6 1406.6,397.6 1409,414.8 1367.7,422.8 1363,397.6" fill="none" stroke="#808080" stroke-width="1.1" /><polyline points="1409,389.6 1427.3,389.6 1427.3,402.2 1409,402.2 1409,389.6" fill="none" stroke="#808080" stroke-width="1.1" /><polyline points="1415.8,403.3 1427.3,403.3 1427.3,413.6 1415.8,413.6 1415.8,403.3" fill="none" stroke="#808080" stroke-width="1.1" /><polyline points="1429.5,398.7 1455.9,398.7 1455.9,418.2 1429.5,418.2 1429.5,398.7" fill="none" stroke="#808080" stroke-width="1.1" /><polyline points="1433,419.4 1461.6,419.4 1461.6,452.6 1433,452.6 1433,419.4" fill="none" stroke="#808080" stroke-width="1.1" /><polyline points="1300,390 1325,398 1330,420" fill="none" stroke="#808080" stroke-width="1.1" /><polyline points="957,337.4 973,331.6 1002,326.5 1003.5,328 1006.5,347.6 1009.4,376.7 980.3,378.1 974.5,373.8 975.9,360.7 970,356.3 958.5,359.2 957,337.4" fill="none" stroke="#808080" stroke-width="1.1" /><polyline points="929.4,343.3 958.5,343.3 958.5,378" fill="none" stroke="#808080" stroke-width="1.1" /><polyline points="910.5,346 928,346 928,368 910.5,368" fill="none" stroke="#808080" stroke-width="1.1" /><polyline points="905,335 960,330" fill="none" stroke="#808080" stroke-width="1.1" /><polyline points="880,332 905,330" fill="none" stroke="#808080" stroke-width="1.1" /><polyline points="988,369 988,356 1000,356" fill="none" stroke="#f4f4f4" stroke-width="1.2" /><rect x="988" y="357" width="7" height="5" fill="#f4f4f4" opacity="1"/><polyline points="990.5,406 990.5,418.8 1005,418.8" fill="none" stroke="#f4f4f4" stroke-width="1.1" /><polyline points="930,392 930,470" fill="none" stroke="#0000ff" stroke-width="1.2" /><polyline points="913.4,400 939.6,432 976,432" fill="none" stroke="#ff00ff" stroke-width="1.2" /><polyline points="930,424.7 942.5,447.9 980,447.9" fill="none" stroke="#0000ff" stroke-width="1.2" /><polyline points="938,401.4 944,421.7 976,421.7" fill="none" stroke="#ff0000" stroke-width="1.2" /><circle cx="901.8" cy="379.6" r="3" fill="#80dcff" stroke="#80dcff" stroke-width="0" shape-rendering="geometricPrecision"/><circle cx="912" cy="376" r="3" fill="#80dcff" stroke="#80dcff" stroke-width="0" shape-rendering="geometricPrecision"/><circle cx="936.7" cy="377.4" r="3" fill="#80dcff" stroke="#80dcff" stroke-width="0" shape-rendering="geometricPrecision"/><circle cx="972.3" cy="376" r="3" fill="#80dcff" stroke="#80dcff" stroke-width="0" shape-rendering="geometricPrecision"/><circle cx="1002" cy="399.2" r="3" fill="#80dcff" stroke="#80dcff" stroke-width="0" shape-rendering="geometricPrecision"/><circle cx="1052.2" cy="398.5" r="3" fill="#80dcff" stroke="#80dcff" stroke-width="0" shape-rendering="geometricPrecision"/><circle cx="1069" cy="397.8" r="3" fill="#80dcff" stroke="#80dcff" stroke-width="0" shape-rendering="geometricPrecision"/><circle cx="955.6" cy="403.6" r="3" fill="#80dcff" stroke="#80dcff" stroke-width="0" shape-rendering="geometricPrecision"/><circle cx="915" cy="368.7" r="2.2" fill="#1a8cff" stroke="#1a8cff" stroke-width="0" shape-rendering="geometricPrecision"/><circle cx="967.2" cy="370" r="2.2" fill="#1a8cff" stroke="#1a8cff" stroke-width="0" shape-rendering="geometricPrecision"/><circle cx="943" cy="376" r="2.2" fill="#1a8cff" stroke="#1a8cff" stroke-width="0" shape-rendering="geometricPrecision"/><polyline points="968,375 968,395.6" fill="none" stroke="#ff0000" stroke-width="1" /><rect x="921.5" y="396.5" width="4.0" height="4.0" fill="#ff0000" opacity="1"/><rect x="1023" y="393" width="4" height="4" fill="#ff0000" opacity="1"/><text x="660" y="342" font-size="7.8" font-weight="bold" fill="#8a8a8a" stroke="#8a8a8a" stroke-width="0.35" textLength="37.5" lengthAdjust="spacingAndGlyphs" font-family="'Liberation Sans',sans-serif">倉庫一丁目倉庫</text><text x="1262" y="339.5" font-size="8.5" font-weight="bold" fill="#8a8a8a" stroke="#8a8a8a" stroke-width="0.35" textLength="38.0" lengthAdjust="spacingAndGlyphs" font-family="'Liberation Sans',sans-serif">倉庫一丁目倉</text><text x="1038" y="372" font-size="7.8" font-weight="bold" fill="#8a8a8a" stroke="#8a8a8a" stroke-width="0.35" textLength="64.0" lengthAdjust="spacingAndGlyphs" font-family="'Liberation Sans',sans-serif">倉庫一丁目倉庫三丁目倉</text><text x="770" y="513.5" font-size="8.5" font-weight="bold" fill="#8a8a8a" stroke="#8a8a8a" stroke-width="0.35" textLength="38.0" lengthAdjust="spacingAndGlyphs" font-family="'Liberation Sans',sans-serif">倉庫一丁目倉</text><text x="1308" y="486" font-size="7.8" font-weight="bold" fill="#8a8a8a" stroke="#8a8a8a" stroke-width="0.35" textLength="39.0" lengthAdjust="spacingAndGlyphs" font-family="'Liberation Sans',sans-serif">倉庫一丁目倉庫</text><text x="967" y="341" font-size="6.5" font-weight="bold" fill="#8a8a8a" stroke="#8a8a8a" stroke-width="0.35" textLength="35.0" lengthAdjust="spacingAndGlyphs" font-family="'Liberation Sans',sans-serif">警察本部生活</text><text x="967" y="349" font-size="6.5" font-weight="bold" fill="#8a8a8a" stroke="#8a8a8a" stroke-width="0.35" textLength="35.0" lengthAdjust="spacingAndGlyphs" font-family="'Liberation Sans',sans-serif">安全部交通課</text><rect x="605" y="328.75" width="40" height="7.5" fill="#c0008c" opacity="1"/><rect x="608.75" y="337" width="37.5" height="5" fill="#0000ff" opacity="1"/><rect x="628.75" y="342" width="17.5" height="3.5" fill="#0000ff" opacity="1"/><rect x="595" y="351.25" width="31.25" height="3.75" fill="#ff0000" opacity="1"/><rect x="603.75" y="357.5" width="13.75" height="6.25" fill="#80dcff" opacity="1"/><rect x="687.5" y="361.25" width="21.25" height="3.75" fill="#80dcff" opacity="1"/><rect x="687.5" y="367.5" width="21.25" height="5.0" fill="#808080" opacity="1"/><rect x="728.75" y="358.75" width="21.25" height="4.25" fill="#80dcff" opacity="1"/><rect x="780" y="355" width="21.25" height="3.75" fill="#80dcff" opacity="1"/><rect x="828.75" y="355" width="21.25" height="3.75" fill="#80dcff" opacity="1"/><rect x="868.75" y="341.25" width="27.5" height="7.5" fill="#ff7f00" opacity="1"/><rect x="863.75" y="351.25" width="40.0" height="7.5" fill="#c0008c" opacity="1"/><rect x="881.25" y="360.5" width="20.0" height="4.5" fill="#80dcff" opacity="1"/><rect x="913.75" y="348.75" width="12.5" height="7.5" fill="#80dcff" opacity="1"/><rect x="933.75" y="355" width="21.25" height="3.75" fill="#80dcff" opacity="1"/><rect x="602.5" y="405" width="20.0" height="8.75" fill="#80dcff" opacity="1"/><rect x="631.25" y="416.25" width="36.25" height="8.75" fill="#0000ff" opacity="1"/><rect x="607.5" y="422.5" width="40.0" height="7.5" fill="#ff00ff" opacity="1"/><rect x="607.5" y="431.25" width="36.25" height="5.0" fill="#0000ff" opacity="1"/><rect x="627.5" y="436.25" width="16.25" height="3.75" fill="#0000ff" opacity="1"/><rect x="688.75" y="405" width="8.75" height="12.5" fill="#ff0000" opacity="1"/><rect x="818.5" y="422" width="20.25" height="27" fill="#80dcff" opacity="1"/><rect x="851.25" y="417.5" width="35.0" height="7.5" fill="#0000ff" opacity="1"/><rect x="887.5" y="405" width="8.75" height="12.5" fill="#ff0000" opacity="1"/><rect x="897.5" y="406.25" width="20.0" height="3.75" fill="#80dcff" opacity="1"/><rect x="943.75" y="418.75" width="31.25" height="3.75" fill="#ff0000" opacity="1"/><rect x="940" y="426.25" width="35" height="3.75" fill="#ff00ff" opacity="1"/><rect x="960" y="431.25" width="15" height="4.25" fill="#ff00ff" opacity="1"/><rect x="943.75" y="443.75" width="31.25" height="3.75" fill="#0000ff" opacity="1"/><rect x="962.5" y="448.75" width="12.5" height="3.75" fill="#0000ff" opacity="1"/><rect x="743.75" y="442" width="21.25" height="3.5" fill="#80dcff" opacity="1"/><rect x="1033.75" y="345" width="21.25" height="4.5" fill="#ff0000" opacity="1"/><rect x="975" y="350" width="18.75" height="3.75" fill="#80dcff" opacity="1"/><rect x="1128.75" y="327.5" width="27.5" height="5.0" fill="#ff7f00" opacity="1"/><rect x="1141.25" y="332.5" width="15.0" height="4.5" fill="#ff7f00" opacity="1"/><rect x="1125" y="337.5" width="37.5" height="4.5" fill="#c0008c" opacity="1"/><rect x="1123.75" y="343" width="40.0" height="4" fill="#c0008c" opacity="1"/><rect x="1207.5" y="338.75" width="20.0" height="4.25" fill="#80dcff" opacity="1"/><rect x="1348.75" y="331.25" width="27.5" height="7.5" fill="#ff7f00" opacity="1"/><rect x="1343.75" y="341.25" width="40.0" height="7.5" fill="#c0008c" opacity="1"/><rect x="1310" y="352.5" width="20" height="3.75" fill="#80dcff" opacity="1"/><rect x="1085" y="396.25" width="11.25" height="12.5" fill="#ff0000" opacity="1"/><rect x="1117.5" y="406.25" width="35.0" height="5.0" fill="#0000ff" opacity="1"/><rect x="1118.75" y="411.25" width="33.75" height="3.75" fill="#0000ff" opacity="1"/><rect x="1110" y="415" width="36.25" height="8.75" fill="#ff00ff" opacity="1"/><rect x="1140" y="402.5" width="21.25" height="3.75" fill="#80dcff" opacity="1"/><rect x="1175" y="392.5" width="21.25" height="4.5" fill="#80dcff" opacity="1"/><rect x="1067.5" y="422.5" width="21.25" height="4.5" fill="#80dcff" opacity="1"/><rect x="982.5" y="420" width="20.0" height="18.75" fill="#80dcff" opacity="1"/><rect x="1210" y="395" width="5" height="30" fill="#80dcff" opacity="1"/><rect x="1235" y="406.25" width="35" height="7.5" fill="#ff00ff" opacity="1"/><rect x="1246.25" y="415" width="12.5" height="7.5" fill="#80dcff" opacity="1"/><rect x="1223.75" y="431.25" width="40.0" height="7.5" fill="#c0008c" opacity="1"/><rect x="1177.5" y="442.5" width="40.0" height="7.5" fill="#c0008c" opacity="1"/><rect x="1282.5" y="395" width="10.0" height="13.75" fill="#ff0000" opacity="1"/><rect x="595" y="340" width="17.5" height="3.75" fill="#f4f4f4" opacity="0.95"/><rect x="595" y="345" width="20" height="4.5" fill="#f4f4f4" opacity="0.95"/><rect x="1032.5" y="328.75" width="6.25" height="5.0" fill="#f4f4f4" opacity="0.95"/><rect x="1033.75" y="335" width="16.25" height="3.75" fill="#f4f4f4" opacity="0.95"/><rect x="1033.75" y="340" width="15.0" height="3.75" fill="#f4f4f4" opacity="0.95"/><rect x="942.5" y="407.5" width="25.0" height="3.75" fill="#f4f4f4" opacity="0.95"/><rect x="942.5" y="412.5" width="25.0" height="3.75" fill="#f4f4f4" opacity="0.95"/><rect x="945" y="402" width="5" height="4" fill="#f4f4f4" opacity="0.95"/><polyline points="626,352 645,385 655,398" fill="none" stroke="#ff0000" stroke-width="1.2" /><polyline points="646,340 650,365 660,372" fill="none" stroke="#c0008c" stroke-width="1.1" /><polyline points="640,380 690,360" fill="none" stroke="#0000ff" stroke-width="1" /><polyline points="590,398 600,420 607,426" fill="none" stroke="#ff00ff" stroke-width="1.2" /><polyline points="592,398 610,430 631,420" fill="none" stroke="#0000ff" stroke-width="1.1" /><polyline points="600,400 630,418" fill="none" stroke="#0000ff" stroke-width="1" /><polyline points="868,348 850,360 830,385" fill="none" stroke="#ff7f00" stroke-width="1.2" /><polyline points="880,395 868,417" fill="none" stroke="#0000ff" stroke-width="1" /><polyline points="1033,349 1030,375 1028,390" fill="none" stroke="#ff0000" stroke-width="1.2" /><polyline points="1125,344 1100,375 1092,385" fill="none" stroke="#ff7f00" stroke-width="1.2" /><polyline points="1128,344 1098,385" fill="none" stroke="#ff00ff" stroke-width="1" /><polyline points="1098,388 1110,415" fill="none" stroke="#ff00ff" stroke-width="1.2" /><polyline points="1100,388 1118,410" fill="none" stroke="#0000ff" stroke-width="1.1" /><polyline points="1350,338 1338,360 1325,378" fill="none" stroke="#ff7f00" stroke-width="1.2" /><polyline points="1345,346 1330,378" fill="none" stroke="#c0008c" stroke-width="1" /><polyline points="1212,388 1225,420 1235,432" fill="none" stroke="#ff00ff" stroke-width="1.2" /><polyline points="1210,390 1208,440 1240,445 1245,460" fill="none" stroke="#1a8cff" stroke-width="1.1" /><polyline points="1168,388 1175,443" fill="none" stroke="#ff00ff" stroke-width="1.2" /><polyline points="1165,395 1168,470" fill="none" stroke="#1a8cff" stroke-width="1.1" /><polyline points="1170,392 1172,520" fill="none" stroke="#ff00ff" stroke-width="1" /><polyline points="717.7,350.5 717.7,395.6" fill="none" stroke="#1a8cff" stroke-width="1.1" /><circle cx="719" cy="352" r="2.2" fill="#1a8cff" stroke="#1a8cff" stroke-width="0" shape-rendering="geometricPrecision"/><polyline points="679,395 676,430 672,470" fill="none" stroke="#1a8cff" stroke-width="1.1" /><polyline points="717,378 717,399" fill="none" stroke="#ff0000" stroke-width="1" /><polyline points="692.3,394 692.3,419" fill="none" stroke="#ff0000" stroke-width="1" /><polyline points="621.8,389.8 658,359.2" fill="none" stroke="#c0008c" stroke-width="1" /><polyline points="765,395 765,437" fill="none" stroke="#1a8cff" stroke-width="1.1" /><polyline points="1290,382 1290,395" fill="none" stroke="#ff0000" stroke-width="1" /><polyline points="1465,345 1446,390" fill="none" stroke="#0000ff" stroke-width="1.5" /><polyline points="557.7,330 557.7,470" fill="none" stroke="#0000ff" stroke-width="1" /><polyline points="589,338 589,470" fill="none" stroke="#0000ff" stroke-width="1" /><circle cx="617" cy="376" r="3.5" fill="#80dcff" stroke="#80dcff" stroke-width="0" shape-rendering="geometricPrecision"/><circle cx="677.8" cy="378.9" r="3.5" fill="#80dcff" stroke="#80dcff" stroke-width="0" shape-rendering="geometricPrecision"/><circle cx="720.6" cy="378" r="3.5" fill="#80dcff" stroke="#80dcff" stroke-width="0" shape-rendering="geometricPrecision"/><circle cx="680" cy="406.5" r="3.5" fill="#80dcff" stroke="#80dcff" stroke-width="0" shape-rendering="geometricPrecision"/><circle cx="762.8" cy="407.2" r="3.5" fill="#80dcff" stroke="#80dcff" stroke-width="0" shape-rendering="geometricPrecision"/><circle cx="794.8" cy="379.6" r="3.5" fill="#80dcff" stroke="#80dcff" stroke-width="0" shape-rendering="geometricPrecision"/><circle cx="815" cy="391" r="3.5" fill="#80dcff" stroke="#80dcff" stroke-width="0" shape-rendering="geometricPrecision"/><circle cx="937" cy="376" r="3.5" fill="#80dcff" stroke="#80dcff" stroke-width="0" shape-rendering="geometricPrecision"/><circle cx="1035" cy="371" r="3.5" fill="#80dcff" stroke="#80dcff" stroke-width="0" shape-rendering="geometricPrecision"/><circle cx="1050" cy="395" r="3.5" fill="#80dcff" stroke="#80dcff" stroke-width="0" shape-rendering="geometricPrecision"/><circle cx="1093" cy="396" r="3.5" fill="#80dcff" stroke="#80dcff" stroke-width="0" shape-rendering="geometricPrecision"/><circle cx="1160" cy="380" r="3.5" fill="#80dcff" stroke="#80dcff" stroke-width="0" shape-rendering="geometricPrecision"/><circle cx="1175" cy="390" r="3.5" fill="#80dcff" stroke="#80dcff" stroke-width="0" shape-rendering="geometricPrecision"/><circle cx="1199" cy="380" r="3.5" fill="#80dcff" stroke="#80dcff" stroke-width="0" shape-rendering="geometricPrecision"/><circle cx="1227" cy="374" r="3.5" fill="#80dcff" stroke="#80dcff" stroke-width="0" shape-rendering="geometricPrecision"/><circle cx="1302" cy="371" r="3.5" fill="#80dcff" stroke="#80dcff" stroke-width="0" shape-rendering="geometricPrecision"/><circle cx="1373" cy="373" r="3.5" fill="#80dcff" stroke="#80dcff" stroke-width="0" shape-rendering="geometricPrecision"/><circle cx="1380" cy="385" r="3.5" fill="#80dcff" stroke="#80dcff" stroke-width="0" shape-rendering="geometricPrecision"/><circle cx="1248" cy="394" r="3.5" fill="#80dcff" stroke="#80dcff" stroke-width="0" shape-rendering="geometricPrecision"/><circle cx="1267" cy="398" r="3.5" fill="#80dcff" stroke="#80dcff" stroke-width="0" shape-rendering="geometricPrecision"/><circle cx="707" cy="364" r="2.5" fill="#1a8cff" stroke="#1a8cff" stroke-width="0" shape-rendering="geometricPrecision"/><circle cx="1053" cy="375" r="2.5" fill="#1a8cff" stroke="#1a8cff" stroke-width="0" shape-rendering="geometricPrecision"/><circle cx="1105" cy="395" r="2.5" fill="#1a8cff" stroke="#1a8cff" stroke-width="0" shape-rendering="geometricPrecision"/><circle cx="1280" cy="380" r="2.5" fill="#1a8cff" stroke="#1a8cff" stroke-width="0" shape-rendering="geometricPrecision"/><circle cx="1268" cy="393" r="2.5" fill="#1a8cff" stroke="#1a8cff" stroke-width="0" shape-rendering="geometricPrecision"/><circle cx="605" cy="386" r="2.5" fill="none" stroke="#ff0000" stroke-width="1.2" shape-rendering="geometricPrecision"/><circle cx="690" cy="391" r="2.5" fill="none" stroke="#ff0000" stroke-width="1.2" shape-rendering="geometricPrecision"/><circle cx="850" cy="392" r="2.5" fill="none" stroke="#ff0000" stroke-width="1.2" shape-rendering="geometricPrecision"/><circle cx="939" cy="395" r="2.5" fill="none" stroke="#ff0000" stroke-width="1.2" shape-rendering="geometricPrecision"/><circle cx="1130" cy="385" r="2.5" fill="none" stroke="#ff0000" stroke-width="1.2" shape-rendering="geometricPrecision"/><circle cx="1228" cy="390" r="2.5" fill="none" stroke="#ff0000" stroke-width="1.2" shape-rendering="geometricPrecision"/><line x1="655.5" y1="457" x2="742" y2="457" stroke="#f4f4f4" stroke-width="1" /><line x1="655.5" y1="475" x2="742" y2="475" stroke="#f4f4f4" stroke-width="1" /><line x1="655.5" y1="494.25" x2="742" y2="494.25" stroke="#f4f4f4" stroke-width="1" /><line x1="655.5" y1="512.5" x2="742" y2="512.5" stroke="#f4f4f4" stroke-width="1" /><line x1="655.5" y1="437.5" x2="655.5" y2="512.5" stroke="#f4f4f4" stroke-width="1" /><line x1="742" y1="437.5" x2="742" y2="512.5" stroke="#f4f4f4" stroke-width="1" /><polyline points="655.5,437.5 646,405" fill="none" stroke="#f4f4f4" stroke-width="1" /><polyline points="742,437.5 650,400" fill="none" stroke="#f4f4f4" stroke-width="1" /><polyline points="698.75,457 698.75,437.5 648,400" fill="none" stroke="#f4f4f4" stroke-width="1" /><circle cx="670" cy="438" r="1.9" fill="none" stroke="#f4f4f4" stroke-width="1.1" shape-rendering="geometricPrecision"/><line x1="672" y1="439.5" x2="675" y2="439.5" stroke="#f4f4f4" stroke-width="1" /><rect x="669" y="441" width="17" height="4" fill="#f4f4f4" opacity="0.95"/><rect x="670" y="446" width="15" height="4" fill="#f4f4f4" opacity="0.95"/><circle cx="713" cy="438" r="1.9" fill="none" stroke="#f4f4f4" stroke-width="1.1" shape-rendering="geometricPrecision"/><line x1="715" y1="439.5" x2="718" y2="439.5" stroke="#f4f4f4" stroke-width="1" /><rect x="712" y="441" width="17" height="4" fill="#f4f4f4" opacity="0.95"/><rect x="713" y="446" width="15" height="4" fill="#f4f4f4" opacity="0.95"/><circle cx="864" cy="454" r="1.9" fill="none" stroke="#f4f4f4" stroke-width="1.1" shape-rendering="geometricPrecision"/><line x1="866" y1="455.5" x2="869" y2="455.5" stroke="#f4f4f4" stroke-width="1" /><rect x="863" y="457" width="17" height="4" fill="#f4f4f4" opacity="0.95"/><rect x="864" y="462" width="15" height="4" fill="#f4f4f4" opacity="0.95"/><text x="690" y="475" font-size="6.5" font-weight="bold" fill="#f4f4f4" stroke="#f4f4f4" stroke-width="0.35" textLength="16.0" lengthAdjust="spacingAndGlyphs" font-family="'Liberation Sans',sans-serif">7300</text><text x="660" y="494" font-size="6.5" font-weight="bold" fill="#f4f4f4" stroke="#f4f4f4" stroke-width="0.35" textLength="76.0" lengthAdjust="spacingAndGlyphs" font-family="'Liberation Sans',sans-serif">HPPEφ75mm L=143.10m(L</text><text x="673" y="512" font-size="6.5" font-weight="bold" fill="#f4f4f4" stroke="#f4f4f4" stroke-width="0.35" textLength="50.0" lengthAdjust="spacingAndGlyphs" font-family="'Liberation Sans',sans-serif">HPPEφ75mm L=14</text><line x1="826.25" y1="470" x2="912.5" y2="470" stroke="#f4f4f4" stroke-width="1" /><line x1="826.25" y1="488.75" x2="912.5" y2="488.75" stroke="#f4f4f4" stroke-width="1" /><line x1="826.25" y1="507.5" x2="912.5" y2="507.5" stroke="#f4f4f4" stroke-width="1" /><line x1="826.25" y1="526.25" x2="912.5" y2="526.25" stroke="#f4f4f4" stroke-width="1" /><line x1="826.25" y1="462.5" x2="826.25" y2="526.25" stroke="#f4f4f4" stroke-width="1" /><line x1="912.5" y1="462.5" x2="912.5" y2="526.25" stroke="#f4f4f4" stroke-width="1" /><polyline points="826.25,462.5 907.5,411" fill="none" stroke="#f4f4f4" stroke-width="1" /><polyline points="912.5,462.5 927.5,415" fill="none" stroke="#f4f4f4" stroke-width="1" /><text x="865" y="489" font-size="6.5" font-weight="bold" fill="#f4f4f4" stroke="#f4f4f4" stroke-width="0.35" textLength="15.0" lengthAdjust="spacingAndGlyphs" font-family="'Liberation Sans',sans-serif">7300</text><text x="830" y="508" font-size="6.5" font-weight="bold" fill="#f4f4f4" stroke="#f4f4f4" stroke-width="0.35" textLength="80.0" lengthAdjust="spacingAndGlyphs" font-family="'Liberation Sans',sans-serif">HPPEφ75mm L=143.10m(L=</text><text x="843" y="526" font-size="6.5" font-weight="bold" fill="#f4f4f4" stroke="#f4f4f4" stroke-width="0.35" textLength="54.0" lengthAdjust="spacingAndGlyphs" font-family="'Liberation Sans',sans-serif">HPPEφ75mm L=143</text><text x="642.0" y="519" font-size="6" font-weight="bold" fill="#f4f4f4" textLength="16" lengthAdjust="spacingAndGlyphs" transform="rotate(-45 650 517)" font-family="'Liberation Sans',sans-serif">No.0+00</text><text x="720.0" y="524" font-size="6" font-weight="bold" fill="#f4f4f4" textLength="26" lengthAdjust="spacingAndGlyphs" transform="rotate(-45 733 522)" font-family="'Liberation Sans',sans-serif">No.0+00</text><text x="810.0" y="539" font-size="6" font-weight="bold" fill="#f4f4f4" textLength="30" lengthAdjust="spacingAndGlyphs" transform="rotate(-45 825 537)" font-family="'Liberation Sans',sans-serif">No.0+00</text><text x="891.0" y="539" font-size="6" font-weight="bold" fill="#f4f4f4" textLength="28" lengthAdjust="spacingAndGlyphs" transform="rotate(-45 905 537)" font-family="'Liberation Sans',sans-serif">No.0+00</text><text x="540.0" y="845" font-size="6" font-weight="bold" fill="#f4f4f4" textLength="26" lengthAdjust="spacingAndGlyphs" transform="rotate(-45 553 843)" font-family="'Liberation Sans',sans-serif">No.0+00</text><text x="645.0" y="844" font-size="6" font-weight="bold" fill="#f4f4f4" textLength="16" lengthAdjust="spacingAndGlyphs" transform="rotate(-45 653 842)" font-family="'Liberation Sans',sans-serif">No.0+00</text><g shape-rendering="geometricPrecision"><polygon points="1397.6,210.3 1412.6,216.4 1414.0,209.2 1417.8,215.2 1427.5,204.5 1422.2,217.9 1429.5,218.4 1423.5,223.0 1436.6,233.7 1420.7,227.7 1419.3,234.3 1415.5,229.0 1406.5,239.1 1410.9,226.2 1405.0,224.5 1409.7,220.9" fill="#ffff00" stroke="#ffff00" stroke-width="1.5"/><path d="M1428 227L1466 251l-12-3.5-4-1zM1449 243l6-5 4 7z" fill="#ffff00" stroke="#ffff00" stroke-width="1"/><path d="M1460 246l9 7-7-1.5z" fill="#f4f4f4"/></g><line x1="556.25" y1="557.5" x2="815" y2="557.5" stroke="#f4f4f4" stroke-width="1.1" /><line x1="556.25" y1="576.25" x2="815" y2="576.25" stroke="#f4f4f4" stroke-width="1.1" /><line x1="556.25" y1="594.5" x2="815" y2="594.5" stroke="#f4f4f4" stroke-width="1.1" /><line x1="556.25" y1="613" x2="815" y2="613" stroke="#f4f4f4" stroke-width="1.1" /><line x1="556.25" y1="590" x2="556.25" y2="639" stroke="#f4f4f4" stroke-width="1" /><line x1="577.5" y1="594.5" x2="577.5" y2="704" stroke="#f4f4f4" stroke-width="1" /><line x1="599.5" y1="594.5" x2="599.5" y2="639" stroke="#f4f4f4" stroke-width="1" /><line x1="815" y1="557.5" x2="815" y2="695" stroke="#f4f4f4" stroke-width="1.1" /><polyline points="815,557.5 835,535" fill="none" stroke="#f4f4f4" stroke-width="1" /><polyline points="556.25,639 566.8,704.5" fill="none" stroke="#f4f4f4" stroke-width="1" /><polyline points="599.5,639 594.6,704" fill="none" stroke="#f4f4f4" stroke-width="1" /><text x="645" y="556" font-size="6.5" font-weight="bold" fill="#f4f4f4" stroke="#f4f4f4" stroke-width="0.35" textLength="81.0" lengthAdjust="spacingAndGlyphs" font-family="'Liberation Sans',sans-serif">HPPEφ75mm L=143.10m(L=1</text><text x="628" y="574.5" font-size="6.5" font-weight="bold" fill="#f4f4f4" stroke="#f4f4f4" stroke-width="0.35" textLength="114.0" lengthAdjust="spacingAndGlyphs" font-family="'Liberation Sans',sans-serif">HPPEφ75mm L=143.10m(L=147.82m) 0</text><text x="581" y="586" font-size="5.2" font-weight="bold" fill="#f4f4f4" stroke="#f4f4f4" stroke-width="0.35" textLength="15.0" lengthAdjust="spacingAndGlyphs" font-family="'Liberation Sans',sans-serif">73004</text><text x="558" y="593" font-size="5.2" font-weight="bold" fill="#f4f4f4" stroke="#f4f4f4" stroke-width="0.35" textLength="17.0" lengthAdjust="spacingAndGlyphs" font-family="'Liberation Sans',sans-serif">HPPEφ7</text><text x="581" y="593" font-size="5.2" font-weight="bold" fill="#f4f4f4" stroke="#f4f4f4" stroke-width="0.35" textLength="17.0" lengthAdjust="spacingAndGlyphs" font-family="'Liberation Sans',sans-serif">HPPEφ7</text><text x="699" y="593" font-size="5.2" font-weight="bold" fill="#f4f4f4" stroke="#f4f4f4" stroke-width="0.35" textLength="17.0" lengthAdjust="spacingAndGlyphs" font-family="'Liberation Sans',sans-serif">HPPEφ7</text><circle cx="558.75" cy="598.5" r="1.8" fill="none" stroke="#f4f4f4" stroke-width="1" shape-rendering="geometricPrecision"/><rect x="557.75" y="601" width="17.0" height="4" fill="#f4f4f4" opacity="0.95"/><rect x="558.75" y="607" width="15.0" height="4" fill="#f4f4f4" opacity="0.95"/><circle cx="580" cy="598.5" r="1.8" fill="none" stroke="#f4f4f4" stroke-width="1" shape-rendering="geometricPrecision"/><rect x="579" y="601" width="17" height="4" fill="#f4f4f4" opacity="0.95"/><rect x="580" y="607" width="15" height="4" fill="#f4f4f4" opacity="0.95"/><circle cx="698.75" cy="598.5" r="1.8" fill="none" stroke="#f4f4f4" stroke-width="1" shape-rendering="geometricPrecision"/><rect x="697.75" y="601" width="17.0" height="4" fill="#f4f4f4" opacity="0.95"/><rect x="698.75" y="607" width="15.0" height="4" fill="#f4f4f4" opacity="0.95"/><rect x="551" y="611" width="5" height="5" fill="#f4f4f4" opacity="1"/><polyline points="522,697 700,698 822,694" fill="none" stroke="#ff7f00" stroke-width="1.4" stroke-dasharray="14,2,2,2"/><polyline points="522,703 700,705 822,700" fill="none" stroke="#c0008c" stroke-width="1.2" stroke-dasharray="10,3"/><polyline points="522,706.5 700,707 822,702" fill="none" stroke="#0000ff" stroke-width="1.5" /><polyline points="522,710.5 700,711 822,706" fill="none" stroke="#808080" stroke-width="1.8" /><polyline points="575,708 700,708.5 822,703.5" fill="none" stroke="#ff0000" stroke-width="1.6" /><polyline points="522,715.4 563,715.4 575,708" fill="none" stroke="#ff0000" stroke-width="1.3" /><polyline points="522,716.6 700,717 822,712" fill="none" stroke="#808080" stroke-width="1.5" /><polyline points="522,720 700,719" fill="none" stroke="#808080" stroke-width="1" /><polyline points="541.3,668.1 570.4,668.1 574,674.2 572.8,693.6 540.1,693.6 541.3,668.1" fill="none" stroke="#808080" stroke-width="1.1" /><polyline points="600.7,721.5 626.1,719 627.3,745.7 604.3,748.1 600.7,721.5" fill="none" stroke="#808080" stroke-width="1.1" /><polyline points="632.2,658.4 660,662 660,693.6 633.4,693.6 632.2,658.4" fill="none" stroke="#808080" stroke-width="1.1" /><polyline points="671,744.4 696.5,739.6 698.8,774.7 675.8,777.2 671,744.4" fill="none" stroke="#808080" stroke-width="1.1" /><polyline points="692.7,717 718.2,713 720.6,736 696.4,740.8 692.7,717" fill="none" stroke="#808080" stroke-width="1.1" /><polyline points="704.9,756.6 726.7,754.1 729.1,791.7 709.7,794.1 704.9,756.6" fill="none" stroke="#808080" stroke-width="1.1" /><polyline points="701.2,800.2 710.9,800.2 710.9,815.9 701.2,815.9 701.2,800.2" fill="none" stroke="#808080" stroke-width="1.1" /><polyline points="718.2,808.6 732.7,808.6 732.7,820.8 718.2,820.8 718.2,808.6" fill="none" stroke="#808080" stroke-width="1.1" /><polyline points="733.9,815.9 740,815.9 740,823.2 733.9,823.2 733.9,815.9" fill="none" stroke="#808080" stroke-width="1.1" /><polyline points="732.7,784.4 741.2,784.4 741.2,800.2 732.7,800.2 732.7,784.4" fill="none" stroke="#808080" stroke-width="1.1" /><polyline points="743.6,779.6 765.4,777.2 767.8,813.5 744.8,813.5 743.6,779.6" fill="none" stroke="#808080" stroke-width="1.1" /><polyline points="732.7,662.1 754.5,664.5 754.5,694.8 733.9,693.6 732.7,662.1" fill="none" stroke="#808080" stroke-width="1.1" /><polyline points="765.4,664.5 794.5,664.5 794.5,693.6 765.4,693.6 765.4,664.5" fill="none" stroke="#808080" stroke-width="1.1" /><polyline points="769,716.6 787.2,714.2 788.4,740.8 770.3,742 769,716.6" fill="none" stroke="#808080" stroke-width="1.1" /><polyline points="795.7,665.7 819.9,665.7 819.9,693.6 795.7,693.6 795.7,665.7" fill="none" stroke="#808080" stroke-width="1.1" /><polyline points="803,740.8 822.3,738.4 824.8,763.8 804.2,765 803,740.8" fill="none" stroke="#808080" stroke-width="1.1" /><polyline points="789.6,774.7 812.6,772.3 815.1,797.7 790.9,799 789.6,774.7" fill="none" stroke="#808080" stroke-width="1.1" /><polyline points="817.5,772.3 823.6,772.3 823.6,783.2 817.5,783.2 817.5,772.3" fill="none" stroke="#808080" stroke-width="1.1" /><polyline points="805.4,709.3 829.6,709.3 829.6,733.5" fill="none" stroke="#808080" stroke-width="1.1" /><polyline points="812,720 829,718" fill="none" stroke="#808080" stroke-width="1.1" /><polyline points="582.5,660.9 588.6,849.8" fill="none" stroke="#808080" stroke-width="1.1" /><polyline points="589.8,660.9 599.5,849.8" fill="none" stroke="#808080" stroke-width="1.1" /><polyline points="640,716 680,713 690,740" fill="none" stroke="#808080" stroke-width="1.1" /><polyline points="700,692 745,690" fill="none" stroke="#808080" stroke-width="1.1" /><polyline points="745,680 760,695" fill="none" stroke="#808080" stroke-width="1.1" /><polyline points="560,720 575,720 578,760" fill="none" stroke="#808080" stroke-width="1.1" /><polyline points="522,725 560,722" fill="none" stroke="#808080" stroke-width="1.1" /><polyline points="620,690 640,688" fill="none" stroke="#808080" stroke-width="1.1" /><rect x="776.3" y="641.5" width="29.100000000000023" height="8.5" fill="#ff7f00" opacity="1"/><rect x="771.5" y="652.4" width="41.10000000000002" height="7.300000000000068" fill="#c0008c" opacity="1"/><rect x="660" y="646.8" width="19" height="4.900000000000091" fill="#ff0000" opacity="1"/><rect x="654.7" y="667.4" width="24.299999999999955" height="4.399999999999977" fill="#ff0000" opacity="1"/><rect x="648" y="683" width="20.5" height="4.5" fill="#ff0000" opacity="1"/><rect x="829.6" y="647.5" width="21.399999999999977" height="4.2000000000000455" fill="#ff0000" opacity="1"/><rect x="829.6" y="653" width="56.19999999999993" height="3.5" fill="#ff0000" opacity="1"/><rect x="830.8" y="674.2" width="25.5" height="4.399999999999977" fill="#ff0000" opacity="1"/><rect x="738.8" y="713" width="8.400000000000091" height="12.799999999999955" fill="#ff0000" opacity="1"/><rect x="644.3" y="723.9" width="35.10000000000002" height="7.2000000000000455" fill="#0000ff" opacity="1"/><rect x="643" y="734.8" width="34.5" height="7.2000000000000455" fill="#0000ff" opacity="1"/><rect x="633.4" y="659.7" width="21.800000000000068" height="3.099999999999909" fill="#80dcff" opacity="1"/><rect x="732.7" y="679" width="20.59999999999991" height="3.7000000000000455" fill="#80dcff" opacity="1"/><rect x="770.3" y="686.3" width="20.600000000000023" height="3.7000000000000455" fill="#80dcff" opacity="1"/><rect x="603" y="722.6" width="20.700000000000045" height="3.699999999999932" fill="#80dcff" opacity="1"/><rect x="695.2" y="723.9" width="20.59999999999991" height="3.6000000000000227" fill="#80dcff" opacity="1"/><rect x="674.6" y="756.6" width="20.600000000000023" height="3.6000000000000227" fill="#80dcff" opacity="1"/><rect x="706" y="771.8" width="20.700000000000045" height="3.7000000000000455" fill="#80dcff" opacity="1"/><rect x="747.2" y="794.1" width="20.59999999999991" height="3.6000000000000227" fill="#80dcff" opacity="1"/><rect x="792" y="782" width="20.700000000000045" height="3.6000000000000227" fill="#80dcff" opacity="1"/><rect x="771.5" y="723.9" width="13.299999999999955" height="4.800000000000068" fill="#80dcff" opacity="1"/><rect x="805.4" y="677.8" width="12.100000000000023" height="6.100000000000023" fill="#80dcff" opacity="1"/><path d="M697 635.4l8 2.5-12 49-8-2.5z" fill="#0000ff"/><rect x="660" y="631.8" width="6" height="4.2000000000000455" fill="#f4f4f4" opacity="0.95"/><rect x="660" y="637" width="20" height="4" fill="#f4f4f4" opacity="0.95"/><rect x="662" y="642" width="19" height="4" fill="#f4f4f4" opacity="0.95"/><rect x="652" y="652" width="8" height="4" fill="#f4f4f4" opacity="0.95"/><rect x="652" y="657" width="20" height="4" fill="#f4f4f4" opacity="0.95"/><rect x="652" y="662" width="18" height="4" fill="#f4f4f4" opacity="0.95"/><rect x="647" y="672" width="8" height="4" fill="#f4f4f4" opacity="0.95"/><rect x="647" y="677" width="20" height="4" fill="#f4f4f4" opacity="0.95"/><rect x="868" y="638" width="4" height="4" fill="#f4f4f4" opacity="0.95"/><rect x="868" y="643" width="17" height="4" fill="#f4f4f4" opacity="0.95"/><rect x="868" y="648" width="15" height="4" fill="#f4f4f4" opacity="0.95"/><rect x="831" y="659" width="6" height="4" fill="#f4f4f4" opacity="0.95"/><rect x="831" y="664" width="21" height="4" fill="#f4f4f4" opacity="0.95"/><rect x="831" y="669" width="19" height="4" fill="#f4f4f4" opacity="0.95"/><rect x="604" y="768" width="8" height="4" fill="#f4f4f4" opacity="0.95"/><rect x="604" y="773" width="16" height="4" fill="#f4f4f4" opacity="0.95"/><rect x="604" y="778" width="14" height="4" fill="#f4f4f4" opacity="0.95"/><polyline points="679,650 690,690" fill="none" stroke="#ff0000" stroke-width="1.2" /><polyline points="679,670 685,700" fill="none" stroke="#ff0000" stroke-width="1.2" /><polyline points="668,686 680,705" fill="none" stroke="#ff0000" stroke-width="1.2" /><polyline points="776,650 745,705" fill="none" stroke="#ff7f00" stroke-width="1.2" /><polyline points="772,658 746,705" fill="none" stroke="#c0008c" stroke-width="1.2" /><polyline points="830,652 818,695" fill="none" stroke="#ff0000" stroke-width="1.2" /><polyline points="831,676 815,700" fill="none" stroke="#ff0000" stroke-width="1.2" /><polyline points="645,708 645,725" fill="none" stroke="#0000ff" stroke-width="1.2" /><polyline points="680,738 700,710" fill="none" stroke="#0000ff" stroke-width="1.2" /><polyline points="729,714.2 729,750.5 700,755.3 700,760" fill="none" stroke="#1a8cff" stroke-width="1.1" /><polyline points="758,713 760.6,777.2 740,779.6 740,790" fill="none" stroke="#1a8cff" stroke-width="1.1" /><polyline points="792,709 793.3,742" fill="none" stroke="#1a8cff" stroke-width="1.1" /><text x="832" y="688.7" font-size="9.4" font-weight="bold" fill="#8a8a8a" stroke="#8a8a8a" stroke-width="0.35" textLength="40.0" lengthAdjust="spacingAndGlyphs" font-family="'Liberation Sans',sans-serif">警察本部生活安全</text><text x="706" y="698.4" font-size="6.2" font-weight="bold" fill="#8a8a8a" stroke="#8a8a8a" stroke-width="0.35" textLength="38.8" lengthAdjust="spacingAndGlyphs" font-family="'Liberation Sans',sans-serif">倉庫一丁目倉庫</text><polyline points="629.8,673 629.8,687.5 643,687.5" fill="none" stroke="#f4f4f4" stroke-width="1" /><circle cx="636" cy="697" r="3.2" fill="#80dcff" stroke="#80dcff" stroke-width="0" shape-rendering="geometricPrecision"/><circle cx="690" cy="688" r="3.2" fill="#80dcff" stroke="#80dcff" stroke-width="0" shape-rendering="geometricPrecision"/><circle cx="697" cy="690" r="3.2" fill="#80dcff" stroke="#80dcff" stroke-width="0" shape-rendering="geometricPrecision"/><circle cx="617" cy="712" r="3.2" fill="#80dcff" stroke="#80dcff" stroke-width="0" shape-rendering="geometricPrecision"/><circle cx="645" cy="712" r="3.2" fill="#80dcff" stroke="#80dcff" stroke-width="0" shape-rendering="geometricPrecision"/><circle cx="733" cy="713" r="3.2" fill="#80dcff" stroke="#80dcff" stroke-width="0" shape-rendering="geometricPrecision"/><circle cx="740" cy="713" r="3.2" fill="#80dcff" stroke="#80dcff" stroke-width="0" shape-rendering="geometricPrecision"/><circle cx="800" cy="713" r="3.2" fill="#80dcff" stroke="#80dcff" stroke-width="0" shape-rendering="geometricPrecision"/><circle cx="836" cy="716" r="3.2" fill="#80dcff" stroke="#80dcff" stroke-width="0" shape-rendering="geometricPrecision"/><circle cx="840" cy="711" r="3.2" fill="#80dcff" stroke="#80dcff" stroke-width="0" shape-rendering="geometricPrecision"/><circle cx="527" cy="693" r="2.3" fill="#1a8cff" stroke="#1a8cff" stroke-width="0" shape-rendering="geometricPrecision"/><circle cx="717" cy="753" r="2.3" fill="#1a8cff" stroke="#1a8cff" stroke-width="0" shape-rendering="geometricPrecision"/><circle cx="743" cy="788" r="2.3" fill="#1a8cff" stroke="#1a8cff" stroke-width="0" shape-rendering="geometricPrecision"/><circle cx="795" cy="742" r="2.3" fill="#1a8cff" stroke="#1a8cff" stroke-width="0" shape-rendering="geometricPrecision"/><circle cx="577" cy="700" r="2.5" fill="#ff7f00" stroke="#ff7f00" stroke-width="0" shape-rendering="geometricPrecision"/><line x1="568.5" y1="779.6" x2="655.7" y2="779.6" stroke="#f4f4f4" stroke-width="1" /><line x1="568.5" y1="797.7" x2="655.7" y2="797.7" stroke="#f4f4f4" stroke-width="1" /><line x1="568.5" y1="816.6" x2="655.7" y2="816.6" stroke="#f4f4f4" stroke-width="1" /><line x1="568.5" y1="835.3" x2="655.7" y2="835.3" stroke="#f4f4f4" stroke-width="1" /><line x1="568.5" y1="760.2" x2="568.5" y2="835.3" stroke="#f4f4f4" stroke-width="1" /><line x1="655.7" y1="760.2" x2="655.7" y2="835.3" stroke="#f4f4f4" stroke-width="1" /><polyline points="568.5,760.2 683,714" fill="none" stroke="#f4f4f4" stroke-width="1" /><polyline points="655.7,760.2 666,742" fill="none" stroke="#f4f4f4" stroke-width="1" /><text x="605" y="797" font-size="5.2" font-weight="bold" fill="#f4f4f4" stroke="#f4f4f4" stroke-width="0.35" textLength="14.0" lengthAdjust="spacingAndGlyphs" font-family="'Liberation Sans',sans-serif">73004</text><text x="572" y="816" font-size="6.5" font-weight="bold" fill="#f4f4f4" stroke="#f4f4f4" stroke-width="0.35" textLength="79.0" lengthAdjust="spacingAndGlyphs" font-family="'Liberation Sans',sans-serif">HPPEφ75mm L=143.10m(L=</text><text x="586" y="834" font-size="5.2" font-weight="bold" fill="#f4f4f4" stroke="#f4f4f4" stroke-width="0.35" textLength="50.0" lengthAdjust="spacingAndGlyphs" font-family="'Liberation Sans',sans-serif">HPPEφ75mm L=143.1</text><polyline points="630,672 630,690 645,690" fill="none" stroke="#f4f4f4" stroke-width="1" /><polyline points="632,725 632,738 647,738" fill="none" stroke="#f4f4f4" stroke-width="1" /><polyline points="800,707 800,720 815,720" fill="none" stroke="#f4f4f4" stroke-width="1" /><text x="999" y="556" font-size="9.1" font-weight="bold" fill="#f4f4f4" stroke="#f4f4f4" stroke-width="0.35" textLength="23.7" lengthAdjust="spacingAndGlyphs" font-family="'Liberation Sans',sans-serif">A - A'</text><line x1="999" y1="557.5" x2="1022.7" y2="557.5" stroke="#f4f4f4" stroke-width="1" /><line x1="965" y1="575.7" x2="1056.8" y2="575.7" stroke="#f4f4f4" stroke-width="1" /><text x="1004.9" y="574.7" font-size="6.5" font-weight="bold" fill="#f4f4f4" stroke="#f4f4f4" stroke-width="0.35" textLength="12.0" lengthAdjust="spacingAndGlyphs" font-family="'Liberation Sans',sans-serif">730</text><line x1="952" y1="588.4000000000001" x2="1070" y2="588.4000000000001" stroke="#f4f4f4" stroke-width="1" /><line x1="974.3" y1="612.7" x2="1056.8" y2="612.7" stroke="#f4f4f4" stroke-width="1" /><line x1="965" y1="572.7" x2="965" y2="637.4" stroke="#f4f4f4" stroke-width="1" /><line x1="1056.8" y1="572.7" x2="1056.8" y2="637.4" stroke="#f4f4f4" stroke-width="1" /><line x1="970.3" y1="588" x2="970.3" y2="637" stroke="#f4f4f4" stroke-width="1" /><line x1="1025.5" y1="588" x2="1025.5" y2="637" stroke="#f4f4f4" stroke-width="1" /><line x1="1049.5" y1="588" x2="1049.5" y2="637" stroke="#f4f4f4" stroke-width="1" /><line x1="1043.6" y1="600.5" x2="1043.6" y2="671" stroke="#f4f4f4" stroke-width="1" /><line x1="974.3" y1="612.6" x2="974.3" y2="662" stroke="#f4f4f4" stroke-width="1" /><line x1="999.4" y1="612.6" x2="999.4" y2="695" stroke="#f4f4f4" stroke-width="1" /><line x1="1008.3" y1="612.6" x2="1008.3" y2="686" stroke="#f4f4f4" stroke-width="1" /><polyline points="953,637.4 1074.6,637.4" fill="none" stroke="#808080" stroke-width="1.2" /><polyline points="1054,637 1058,612 1060,612 1062,637" fill="none" stroke="#808080" stroke-width="1.2" /><polyline points="1040.5,637.4 1040.5,651.4 1048.5,651.4 1048.5,637.4" fill="none" stroke="#ff0000" stroke-width="1.4" /><rect x="965" y="637.4" width="6" height="7.0" fill="none" stroke="#808080" stroke-width="1"/><rect x="1049" y="637.4" width="6" height="7.0" fill="none" stroke="#808080" stroke-width="1"/><text x="956.0" y="586.7" font-size="5.2" font-weight="bold" fill="#f4f4f4" stroke="#f4f4f4" stroke-width="0.35" textLength="10.0" lengthAdjust="spacingAndGlyphs" font-family="'Liberation Sans',sans-serif">730</text><text x="995.3333333333334" y="586.7" font-size="5.2" font-weight="bold" fill="#f4f4f4" stroke="#f4f4f4" stroke-width="0.35" textLength="10.0" lengthAdjust="spacingAndGlyphs" font-family="'Liberation Sans',sans-serif">730</text><text x="1034.6666666666667" y="586.7" font-size="5.2" font-weight="bold" fill="#f4f4f4" stroke="#f4f4f4" stroke-width="0.35" textLength="10.0" lengthAdjust="spacingAndGlyphs" font-family="'Liberation Sans',sans-serif">730</text><text x="980.3" y="611.7" font-size="5.2" font-weight="bold" fill="#f4f4f4" stroke="#f4f4f4" stroke-width="0.35" textLength="12.0" lengthAdjust="spacingAndGlyphs" font-family="'Liberation Sans',sans-serif">7300</text><text x="1000.3" y="611.7" font-size="5.2" font-weight="bold" fill="#f4f4f4" stroke="#f4f4f4" stroke-width="0.35" textLength="10.0" lengthAdjust="spacingAndGlyphs" font-family="'Liberation Sans',sans-serif">730</text><text x="1026.8" y="611.7" font-size="5.2" font-weight="bold" fill="#f4f4f4" stroke="#f4f4f4" stroke-width="0.35" textLength="12.0" lengthAdjust="spacingAndGlyphs" font-family="'Liberation Sans',sans-serif">7300</text><text x="1043" y="603" font-size="7.8" font-weight="bold" fill="#f4f4f4" stroke="#f4f4f4" stroke-width="0.35" textLength="13.0" lengthAdjust="spacingAndGlyphs" font-family="'Liberation Sans',sans-serif">730</text><circle cx="999.4" cy="675.8" r="2.6" fill="none" stroke="#ff00ff" stroke-width="1.2" shape-rendering="geometricPrecision"/><rect x="972" y="652" width="5" height="5" fill="#ff7f00" opacity="1"/><rect x="1006" y="651" width="4" height="4" fill="#0000ff" opacity="1"/><text x="950" y="685" font-size="5.2" font-weight="bold" fill="#f4f4f4" stroke="#f4f4f4" stroke-width="0.35" textLength="62.0" lengthAdjust="spacingAndGlyphs" font-family="'Liberation Sans',sans-serif">HPPEφ75mm L=143.10m(L=</text><text x="974" y="691" font-size="5.2" font-weight="bold" fill="#f4f4f4" stroke="#f4f4f4" stroke-width="0.35" textLength="26.0" lengthAdjust="spacingAndGlyphs" font-family="'Liberation Sans',sans-serif">HPPEφ75mm</text><text x="1002" y="698" font-size="5.2" font-weight="bold" fill="#f4f4f4" stroke="#f4f4f4" stroke-width="0.35" textLength="59.0" lengthAdjust="spacingAndGlyphs" font-family="'Liberation Sans',sans-serif">HPPEφ75mm L=143.10m(</text><text x="1011" y="687" font-size="5.2" font-weight="bold" fill="#f4f4f4" stroke="#f4f4f4" stroke-width="0.35" textLength="55.0" lengthAdjust="spacingAndGlyphs" font-family="'Liberation Sans',sans-serif">HPPEφ75mm L=143.10m</text><text x="1044" y="695" font-size="5.2" font-weight="bold" fill="#f4f4f4" stroke="#f4f4f4" stroke-width="0.35" textLength="18.0" lengthAdjust="spacingAndGlyphs" font-family="'Liberation Sans',sans-serif">HPPEφ7</text><text x="1044" y="673" font-size="5.2" font-weight="bold" fill="#f4f4f4" stroke="#f4f4f4" stroke-width="0.35" textLength="56.0" lengthAdjust="spacingAndGlyphs" font-family="'Liberation Sans',sans-serif">HPPEφ75mm L=143.10m</text><text x="1073" y="679" font-size="5.2" font-weight="bold" fill="#f4f4f4" stroke="#f4f4f4" stroke-width="0.35" textLength="27.0" lengthAdjust="spacingAndGlyphs" font-family="'Liberation Sans',sans-serif">HPPEφ75mm</text><polyline points="974,662 974,684 950,684" fill="none" stroke="#f4f4f4" stroke-width="1" /><polyline points="999.4,678 999.4,697 1061,697" fill="none" stroke="#f4f4f4" stroke-width="1" /><polyline points="1008,686 1008,687 1066,687" fill="none" stroke="#f4f4f4" stroke-width="1" /><polyline points="1043.6,671 1100,671" fill="none" stroke="#f4f4f4" stroke-width="1" /><text x="1176.5" y="556" font-size="9.1" font-weight="bold" fill="#f4f4f4" stroke="#f4f4f4" stroke-width="0.35" textLength="22.5" lengthAdjust="spacingAndGlyphs" font-family="'Liberation Sans',sans-serif">C - C'</text><line x1="1176.5" y1="557.5" x2="1199" y2="557.5" stroke="#f4f4f4" stroke-width="1" /><line x1="1138" y1="575.7" x2="1237.5" y2="575.7" stroke="#f4f4f4" stroke-width="1" /><text x="1181.75" y="574.7" font-size="6.5" font-weight="bold" fill="#f4f4f4" stroke="#f4f4f4" stroke-width="0.35" textLength="12.0" lengthAdjust="spacingAndGlyphs" font-family="'Liberation Sans',sans-serif">730</text><line x1="1126" y1="588.4000000000001" x2="1250.8" y2="588.4000000000001" stroke="#f4f4f4" stroke-width="1" /><line x1="1152" y1="612.7" x2="1235.8" y2="612.7" stroke="#f4f4f4" stroke-width="1" /><line x1="1138" y1="572.7" x2="1138" y2="637" stroke="#f4f4f4" stroke-width="1" /><line x1="1237.5" y1="572.7" x2="1237.5" y2="637" stroke="#f4f4f4" stroke-width="1" /><line x1="1152" y1="612" x2="1152" y2="662" stroke="#f4f4f4" stroke-width="1" /><line x1="1170.5" y1="612" x2="1170.5" y2="695" stroke="#f4f4f4" stroke-width="1" /><line x1="1185" y1="612" x2="1185" y2="686" stroke="#f4f4f4" stroke-width="1" /><line x1="1206" y1="588" x2="1206" y2="637" stroke="#f4f4f4" stroke-width="1" /><line x1="1226" y1="600" x2="1226" y2="671" stroke="#f4f4f4" stroke-width="1" /><line x1="1231" y1="588" x2="1231" y2="637" stroke="#f4f4f4" stroke-width="1" /><polyline points="1111,637 1250.8,637" fill="none" stroke="#808080" stroke-width="1.2" /><polyline points="1122,637 1125,630 1125.5,612 1126.5,612 1127,630 1130,637" fill="none" stroke="#808080" stroke-width="1.2" /><polyline points="1226,637 1226,651 1234,651 1234,637" fill="none" stroke="#ff0000" stroke-width="1.4" /><rect x="1141" y="637" width="6" height="7" fill="none" stroke="#808080" stroke-width="1"/><rect x="1205" y="637" width="6" height="7" fill="none" stroke="#808080" stroke-width="1"/><text x="1130.0" y="586.7" font-size="5.2" font-weight="bold" fill="#f4f4f4" stroke="#f4f4f4" stroke-width="0.35" textLength="10.0" lengthAdjust="spacingAndGlyphs" font-family="'Liberation Sans',sans-serif">730</text><text x="1171.6" y="586.7" font-size="5.2" font-weight="bold" fill="#f4f4f4" stroke="#f4f4f4" stroke-width="0.35" textLength="10.0" lengthAdjust="spacingAndGlyphs" font-family="'Liberation Sans',sans-serif">730</text><text x="1213.2" y="586.7" font-size="5.2" font-weight="bold" fill="#f4f4f4" stroke="#f4f4f4" stroke-width="0.35" textLength="10.0" lengthAdjust="spacingAndGlyphs" font-family="'Liberation Sans',sans-serif">730</text><text x="1158" y="611.7" font-size="5.2" font-weight="bold" fill="#f4f4f4" stroke="#f4f4f4" stroke-width="0.35" textLength="12.0" lengthAdjust="spacingAndGlyphs" font-family="'Liberation Sans',sans-serif">7300</text><text x="1178" y="611.7" font-size="5.2" font-weight="bold" fill="#f4f4f4" stroke="#f4f4f4" stroke-width="0.35" textLength="10.0" lengthAdjust="spacingAndGlyphs" font-family="'Liberation Sans',sans-serif">730</text><text x="1205.8" y="611.7" font-size="5.2" font-weight="bold" fill="#f4f4f4" stroke="#f4f4f4" stroke-width="0.35" textLength="12.0" lengthAdjust="spacingAndGlyphs" font-family="'Liberation Sans',sans-serif">7300</text><circle cx="1226" cy="647" r="2.6" fill="none" stroke="#ff00ff" stroke-width="1.2" shape-rendering="geometricPrecision"/><circle cx="1170.5" cy="676" r="2.6" fill="none" stroke="#ff00ff" stroke-width="1.2" shape-rendering="geometricPrecision"/><rect x="1150" y="652" width="5" height="5" fill="#ff7f00" opacity="1"/><rect x="1183" y="651" width="4" height="4" fill="#0000ff" opacity="1"/><text x="1113" y="685" font-size="5.2" font-weight="bold" fill="#f4f4f4" stroke="#f4f4f4" stroke-width="0.35" textLength="37.0" lengthAdjust="spacingAndGlyphs" font-family="'Liberation Sans',sans-serif">HPPEφ75mm L=1</text><text x="1132" y="691" font-size="5.2" font-weight="bold" fill="#f4f4f4" stroke="#f4f4f4" stroke-width="0.35" textLength="20.0" lengthAdjust="spacingAndGlyphs" font-family="'Liberation Sans',sans-serif">HPPEφ75</text><text x="1113" y="698" font-size="5.2" font-weight="bold" fill="#f4f4f4" stroke="#f4f4f4" stroke-width="0.35" textLength="57.0" lengthAdjust="spacingAndGlyphs" font-family="'Liberation Sans',sans-serif">HPPEφ75mm L=143.10m(</text><text x="1185" y="687" font-size="5.2" font-weight="bold" fill="#f4f4f4" stroke="#f4f4f4" stroke-width="0.35" textLength="55.0" lengthAdjust="spacingAndGlyphs" font-family="'Liberation Sans',sans-serif">HPPEφ75mm L=143.10m</text><text x="1215" y="693" font-size="5.2" font-weight="bold" fill="#f4f4f4" stroke="#f4f4f4" stroke-width="0.35" textLength="25.0" lengthAdjust="spacingAndGlyphs" font-family="'Liberation Sans',sans-serif">HPPEφ75mm</text><text x="1229" y="673" font-size="5.2" font-weight="bold" fill="#f4f4f4" stroke="#f4f4f4" stroke-width="0.35" textLength="56.0" lengthAdjust="spacingAndGlyphs" font-family="'Liberation Sans',sans-serif">HPPEφ75mm L=143.10m</text><text x="1258" y="679" font-size="5.2" font-weight="bold" fill="#f4f4f4" stroke="#f4f4f4" stroke-width="0.35" textLength="27.0" lengthAdjust="spacingAndGlyphs" font-family="'Liberation Sans',sans-serif">HPPEφ75mm</text><polyline points="1152,662 1152,684 1113,684" fill="none" stroke="#f4f4f4" stroke-width="1" /><polyline points="1170.5,678 1170.5,697 1240,697" fill="none" stroke="#f4f4f4" stroke-width="1" /><polyline points="1185,686 1240,686" fill="none" stroke="#f4f4f4" stroke-width="1" /><polyline points="1229,671 1285,671" fill="none" stroke="#f4f4f4" stroke-width="1" /><text x="1352.7" y="556" font-size="9.1" font-weight="bold" fill="#f4f4f4" stroke="#f4f4f4" stroke-width="0.35" textLength="24.3" lengthAdjust="spacingAndGlyphs" font-family="'Liberation Sans',sans-serif">E - E'</text><line x1="1352.7" y1="557.5" x2="1377" y2="557.5" stroke="#f4f4f4" stroke-width="1" /><line x1="1335.2" y1="575.7" x2="1394.5" y2="575.7" stroke="#f4f4f4" stroke-width="1" /><text x="1358.85" y="574.7" font-size="6.5" font-weight="bold" fill="#f4f4f4" stroke="#f4f4f4" stroke-width="0.35" textLength="12.0" lengthAdjust="spacingAndGlyphs" font-family="'Liberation Sans',sans-serif">730</text><line x1="1323" y1="588.4000000000001" x2="1394.5" y2="588.4000000000001" stroke="#f4f4f4" stroke-width="1" /><line x1="1346.4" y1="612.7" x2="1394.5" y2="612.7" stroke="#f4f4f4" stroke-width="1" /><line x1="1335.2" y1="572.7" x2="1335.2" y2="637" stroke="#f4f4f4" stroke-width="1" /><line x1="1394.5" y1="572.7" x2="1394.5" y2="637" stroke="#f4f4f4" stroke-width="1" /><line x1="1346.4" y1="612" x2="1346.4" y2="662" stroke="#f4f4f4" stroke-width="1" /><line x1="1371.8" y1="612" x2="1371.8" y2="686" stroke="#f4f4f4" stroke-width="1" /><line x1="1385" y1="600" x2="1385" y2="671" stroke="#f4f4f4" stroke-width="1" /><polyline points="1321,637 1408.5,637" fill="none" stroke="#808080" stroke-width="1.2" /><polyline points="1384,637 1384,651 1392,651 1392,637" fill="none" stroke="#ff0000" stroke-width="1.4" /><rect x="1335" y="637" width="6" height="7" fill="none" stroke="#808080" stroke-width="1"/><text x="1327.0" y="586.7" font-size="5.2" font-weight="bold" fill="#f4f4f4" stroke="#f4f4f4" stroke-width="0.35" textLength="10.0" lengthAdjust="spacingAndGlyphs" font-family="'Liberation Sans',sans-serif">730</text><text x="1350.8333333333333" y="586.7" font-size="5.2" font-weight="bold" fill="#f4f4f4" stroke="#f4f4f4" stroke-width="0.35" textLength="10.0" lengthAdjust="spacingAndGlyphs" font-family="'Liberation Sans',sans-serif">730</text><text x="1374.6666666666667" y="586.7" font-size="5.2" font-weight="bold" fill="#f4f4f4" stroke="#f4f4f4" stroke-width="0.35" textLength="10.0" lengthAdjust="spacingAndGlyphs" font-family="'Liberation Sans',sans-serif">730</text><text x="1352.4" y="611.7" font-size="5.2" font-weight="bold" fill="#f4f4f4" stroke="#f4f4f4" stroke-width="0.35" textLength="12.0" lengthAdjust="spacingAndGlyphs" font-family="'Liberation Sans',sans-serif">7300</text><text x="1372.4" y="611.7" font-size="5.2" font-weight="bold" fill="#f4f4f4" stroke="#f4f4f4" stroke-width="0.35" textLength="10.0" lengthAdjust="spacingAndGlyphs" font-family="'Liberation Sans',sans-serif">730</text><text x="1364.5" y="611.7" font-size="5.2" font-weight="bold" fill="#f4f4f4" stroke="#f4f4f4" stroke-width="0.35" textLength="12.0" lengthAdjust="spacingAndGlyphs" font-family="'Liberation Sans',sans-serif">7300</text><rect x="1344" y="652" width="5" height="5" fill="#ff7f00" opacity="1"/><rect x="1370" y="651" width="4" height="4" fill="#0000ff" opacity="1"/><text x="1309" y="685" font-size="5.2" font-weight="bold" fill="#f4f4f4" stroke="#f4f4f4" stroke-width="0.35" textLength="36.0" lengthAdjust="spacingAndGlyphs" font-family="'Liberation Sans',sans-serif">HPPEφ75mm L=</text><text x="1326" y="691" font-size="5.2" font-weight="bold" fill="#f4f4f4" stroke="#f4f4f4" stroke-width="0.35" textLength="20.0" lengthAdjust="spacingAndGlyphs" font-family="'Liberation Sans',sans-serif">HPPEφ75</text><text x="1372" y="687" font-size="5.2" font-weight="bold" fill="#f4f4f4" stroke="#f4f4f4" stroke-width="0.35" textLength="53.0" lengthAdjust="spacingAndGlyphs" font-family="'Liberation Sans',sans-serif">HPPEφ75mm L=143.10</text><text x="1404" y="693" font-size="5.2" font-weight="bold" fill="#f4f4f4" stroke="#f4f4f4" stroke-width="0.35" textLength="22.0" lengthAdjust="spacingAndGlyphs" font-family="'Liberation Sans',sans-serif">HPPEφ75m</text><text x="1387" y="673" font-size="5.2" font-weight="bold" fill="#f4f4f4" stroke="#f4f4f4" stroke-width="0.35" textLength="56.0" lengthAdjust="spacingAndGlyphs" font-family="'Liberation Sans',sans-serif">HPPEφ75mm L=143.10m</text><text x="1418" y="679" font-size="5.2" font-weight="bold" fill="#f4f4f4" stroke="#f4f4f4" stroke-width="0.35" textLength="25.0" lengthAdjust="spacingAndGlyphs" font-family="'Liberation Sans',sans-serif">HPPEφ75mm</text><polyline points="1346.4,662 1346.4,684 1309,684" fill="none" stroke="#f4f4f4" stroke-width="1" /><polyline points="1371.8,686 1425,686" fill="none" stroke="#f4f4f4" stroke-width="1" /><polyline points="1385,671 1443,671" fill="none" stroke="#f4f4f4" stroke-width="1" /><text x="1001" y="723" font-size="9.1" font-weight="bold" fill="#f4f4f4" stroke="#f4f4f4" stroke-width="0.35" textLength="22.6" lengthAdjust="spacingAndGlyphs" font-family="'Liberation Sans',sans-serif">B - B'</text><line x1="1001" y1="724.5" x2="1023.6" y2="724.5" stroke="#f4f4f4" stroke-width="1" /><line x1="968.8" y1="741" x2="1056" y2="741" stroke="#f4f4f4" stroke-width="1" /><text x="1006.4" y="740" font-size="6.5" font-weight="bold" fill="#f4f4f4" stroke="#f4f4f4" stroke-width="0.35" textLength="12.0" lengthAdjust="spacingAndGlyphs" font-family="'Liberation Sans',sans-serif">730</text><line x1="955" y1="753.7" x2="1069" y2="753.7" stroke="#f4f4f4" stroke-width="1" /><line x1="974" y1="778" x2="1056" y2="778" stroke="#f4f4f4" stroke-width="1" /><line x1="968.8" y1="738" x2="968.8" y2="804" stroke="#f4f4f4" stroke-width="1" /><line x1="1056" y1="738" x2="1056" y2="804" stroke="#f4f4f4" stroke-width="1" /><line x1="974" y1="778" x2="974" y2="830" stroke="#f4f4f4" stroke-width="1" /><line x1="999" y1="778" x2="999" y2="862" stroke="#f4f4f4" stroke-width="1" /><line x1="1013" y1="778" x2="1013" y2="850" stroke="#f4f4f4" stroke-width="1" /><line x1="1036" y1="753" x2="1036" y2="804" stroke="#f4f4f4" stroke-width="1" /><line x1="1046" y1="766" x2="1046" y2="840" stroke="#f4f4f4" stroke-width="1" /><polyline points="954,804 1069,804" fill="none" stroke="#808080" stroke-width="1.2" /><polyline points="955,748 955,804" fill="none" stroke="#808080" stroke-width="1.2" /><polyline points="1043.9,804 1043.9,818 1051.9,818 1051.9,804" fill="none" stroke="#ff0000" stroke-width="1.4" /><rect x="970" y="804" width="6" height="7" fill="none" stroke="#808080" stroke-width="1"/><rect x="1036" y="804" width="6" height="7" fill="none" stroke="#808080" stroke-width="1"/><text x="959.0" y="752" font-size="5.2" font-weight="bold" fill="#f4f4f4" stroke="#f4f4f4" stroke-width="0.35" textLength="10.0" lengthAdjust="spacingAndGlyphs" font-family="'Liberation Sans',sans-serif">730</text><text x="997.0" y="752" font-size="5.2" font-weight="bold" fill="#f4f4f4" stroke="#f4f4f4" stroke-width="0.35" textLength="10.0" lengthAdjust="spacingAndGlyphs" font-family="'Liberation Sans',sans-serif">730</text><text x="1035.0" y="752" font-size="5.2" font-weight="bold" fill="#f4f4f4" stroke="#f4f4f4" stroke-width="0.35" textLength="10.0" lengthAdjust="spacingAndGlyphs" font-family="'Liberation Sans',sans-serif">730</text><text x="980" y="777" font-size="5.2" font-weight="bold" fill="#f4f4f4" stroke="#f4f4f4" stroke-width="0.35" textLength="12.0" lengthAdjust="spacingAndGlyphs" font-family="'Liberation Sans',sans-serif">7300</text><text x="1000" y="777" font-size="5.2" font-weight="bold" fill="#f4f4f4" stroke="#f4f4f4" stroke-width="0.35" textLength="10.0" lengthAdjust="spacingAndGlyphs" font-family="'Liberation Sans',sans-serif">730</text><text x="1026" y="777" font-size="5.2" font-weight="bold" fill="#f4f4f4" stroke="#f4f4f4" stroke-width="0.35" textLength="12.0" lengthAdjust="spacingAndGlyphs" font-family="'Liberation Sans',sans-serif">7300</text><circle cx="999" cy="835" r="2.6" fill="none" stroke="#ff00ff" stroke-width="1.2" shape-rendering="geometricPrecision"/><rect x="972" y="820" width="5" height="5" fill="#ff7f00" opacity="1"/><rect x="1011" y="819" width="4" height="4" fill="#0000ff" opacity="1"/><text x="935" y="853" font-size="5.2" font-weight="bold" fill="#f4f4f4" stroke="#f4f4f4" stroke-width="0.35" textLength="40.0" lengthAdjust="spacingAndGlyphs" font-family="'Liberation Sans',sans-serif">HPPEφ75mm L=14</text><text x="954" y="859" font-size="5.2" font-weight="bold" fill="#f4f4f4" stroke="#f4f4f4" stroke-width="0.35" textLength="21.0" lengthAdjust="spacingAndGlyphs" font-family="'Liberation Sans',sans-serif">HPPEφ75</text><text x="1000" y="868" font-size="5.2" font-weight="bold" fill="#f4f4f4" stroke="#f4f4f4" stroke-width="0.35" textLength="55.0" lengthAdjust="spacingAndGlyphs" font-family="'Liberation Sans',sans-serif">HPPEφ75mm L=143.10m</text><text x="1013" y="855" font-size="5.2" font-weight="bold" fill="#f4f4f4" stroke="#f4f4f4" stroke-width="0.35" textLength="55.0" lengthAdjust="spacingAndGlyphs" font-family="'Liberation Sans',sans-serif">HPPEφ75mm L=143.10m</text><text x="1040" y="861" font-size="5.2" font-weight="bold" fill="#f4f4f4" stroke="#f4f4f4" stroke-width="0.35" textLength="28.0" lengthAdjust="spacingAndGlyphs" font-family="'Liberation Sans',sans-serif">HPPEφ75mm </text><text x="1046" y="845" font-size="5.2" font-weight="bold" fill="#f4f4f4" stroke="#f4f4f4" stroke-width="0.35" textLength="57.0" lengthAdjust="spacingAndGlyphs" font-family="'Liberation Sans',sans-serif">HPPEφ75mm L=143.10m(</text><text x="1076" y="851" font-size="5.2" font-weight="bold" fill="#f4f4f4" stroke="#f4f4f4" stroke-width="0.35" textLength="27.0" lengthAdjust="spacingAndGlyphs" font-family="'Liberation Sans',sans-serif">HPPEφ75mm</text><polyline points="974,830 974,852 935,852" fill="none" stroke="#f4f4f4" stroke-width="1" /><polyline points="999,838 999,866 1055,866" fill="none" stroke="#f4f4f4" stroke-width="1" /><polyline points="1013,850 1068,850" fill="none" stroke="#f4f4f4" stroke-width="1" /><polyline points="1046,840 1103,840" fill="none" stroke="#f4f4f4" stroke-width="1" /><text x="1176.5" y="723" font-size="9.1" font-weight="bold" fill="#f4f4f4" stroke="#f4f4f4" stroke-width="0.35" textLength="22.5" lengthAdjust="spacingAndGlyphs" font-family="'Liberation Sans',sans-serif">D - D'</text><line x1="1176.5" y1="724.5" x2="1199" y2="724.5" stroke="#f4f4f4" stroke-width="1" /><line x1="1160" y1="741" x2="1216" y2="741" stroke="#f4f4f4" stroke-width="1" /><text x="1182.0" y="740" font-size="6.5" font-weight="bold" fill="#f4f4f4" stroke="#f4f4f4" stroke-width="0.35" textLength="12.0" lengthAdjust="spacingAndGlyphs" font-family="'Liberation Sans',sans-serif">730</text><line x1="1146.8" y1="753.7" x2="1225.3" y2="753.7" stroke="#f4f4f4" stroke-width="1" /><line x1="1167.7" y1="778" x2="1216" y2="778" stroke="#f4f4f4" stroke-width="1" /><line x1="1160" y1="738" x2="1160" y2="804" stroke="#f4f4f4" stroke-width="1" /><line x1="1216" y1="738" x2="1216" y2="804" stroke="#f4f4f4" stroke-width="1" /><line x1="1167.7" y1="778" x2="1167.7" y2="830" stroke="#f4f4f4" stroke-width="1" /><line x1="1192" y1="778" x2="1192" y2="862" stroke="#f4f4f4" stroke-width="1" /><line x1="1206" y1="766" x2="1206" y2="850" stroke="#f4f4f4" stroke-width="1" /><line x1="1212" y1="753" x2="1212" y2="804" stroke="#f4f4f4" stroke-width="1" /><polyline points="1148.5,804 1235.8,804" fill="none" stroke="#808080" stroke-width="1.2" /><polyline points="1218,804 1218,779.5 1222,779.5 1224,804" fill="none" stroke="#808080" stroke-width="1.2" /><polyline points="1206,804 1206,818 1214,818 1214,804" fill="none" stroke="#ff0000" stroke-width="1.4" /><rect x="1161" y="804" width="6" height="7" fill="none" stroke="#808080" stroke-width="1"/><text x="1150.8" y="752" font-size="5.2" font-weight="bold" fill="#f4f4f4" stroke="#f4f4f4" stroke-width="0.35" textLength="10.0" lengthAdjust="spacingAndGlyphs" font-family="'Liberation Sans',sans-serif">730</text><text x="1176.9666666666667" y="752" font-size="5.2" font-weight="bold" fill="#f4f4f4" stroke="#f4f4f4" stroke-width="0.35" textLength="10.0" lengthAdjust="spacingAndGlyphs" font-family="'Liberation Sans',sans-serif">730</text><text x="1203.1333333333332" y="752" font-size="5.2" font-weight="bold" fill="#f4f4f4" stroke="#f4f4f4" stroke-width="0.35" textLength="10.0" lengthAdjust="spacingAndGlyphs" font-family="'Liberation Sans',sans-serif">730</text><text x="1173.7" y="777" font-size="5.2" font-weight="bold" fill="#f4f4f4" stroke="#f4f4f4" stroke-width="0.35" textLength="12.0" lengthAdjust="spacingAndGlyphs" font-family="'Liberation Sans',sans-serif">7300</text><text x="1193.7" y="777" font-size="5.2" font-weight="bold" fill="#f4f4f4" stroke="#f4f4f4" stroke-width="0.35" textLength="10.0" lengthAdjust="spacingAndGlyphs" font-family="'Liberation Sans',sans-serif">730</text><text x="1186" y="777" font-size="5.2" font-weight="bold" fill="#f4f4f4" stroke="#f4f4f4" stroke-width="0.35" textLength="12.0" lengthAdjust="spacingAndGlyphs" font-family="'Liberation Sans',sans-serif">7300</text><circle cx="1192" cy="835" r="2.6" fill="none" stroke="#ff00ff" stroke-width="1.2" shape-rendering="geometricPrecision"/><rect x="1165" y="820" width="5" height="5" fill="#ff7f00" opacity="1"/><rect x="1204" y="819" width="4" height="4" fill="#0000ff" opacity="1"/><text x="1130" y="853" font-size="5.2" font-weight="bold" fill="#f4f4f4" stroke="#f4f4f4" stroke-width="0.35" textLength="38.0" lengthAdjust="spacingAndGlyphs" font-family="'Liberation Sans',sans-serif">HPPEφ75mm L=1</text><text x="1146" y="859" font-size="5.2" font-weight="bold" fill="#f4f4f4" stroke="#f4f4f4" stroke-width="0.35" textLength="22.0" lengthAdjust="spacingAndGlyphs" font-family="'Liberation Sans',sans-serif">HPPEφ75m</text><text x="1193" y="868" font-size="5.2" font-weight="bold" fill="#f4f4f4" stroke="#f4f4f4" stroke-width="0.35" textLength="57.0" lengthAdjust="spacingAndGlyphs" font-family="'Liberation Sans',sans-serif">HPPEφ75mm L=143.10m(</text><text x="1206" y="855" font-size="5.2" font-weight="bold" fill="#f4f4f4" stroke="#f4f4f4" stroke-width="0.35" textLength="56.0" lengthAdjust="spacingAndGlyphs" font-family="'Liberation Sans',sans-serif">HPPEφ75mm L=143.10m</text><text x="1235" y="861" font-size="5.2" font-weight="bold" fill="#f4f4f4" stroke="#f4f4f4" stroke-width="0.35" textLength="27.0" lengthAdjust="spacingAndGlyphs" font-family="'Liberation Sans',sans-serif">HPPEφ75mm</text><text x="1212" y="845" font-size="5.2" font-weight="bold" fill="#f4f4f4" stroke="#f4f4f4" stroke-width="0.35" textLength="54.0" lengthAdjust="spacingAndGlyphs" font-family="'Liberation Sans',sans-serif">HPPEφ75mm L=143.10m</text><text x="1240" y="851" font-size="5.2" font-weight="bold" fill="#f4f4f4" stroke="#f4f4f4" stroke-width="0.35" textLength="26.0" lengthAdjust="spacingAndGlyphs" font-family="'Liberation Sans',sans-serif">HPPEφ75mm</text><polyline points="1167.7,830 1167.7,852 1130,852" fill="none" stroke="#f4f4f4" stroke-width="1" /><polyline points="1192,838 1192,866 1250,866" fill="none" stroke="#f4f4f4" stroke-width="1" /><polyline points="1206,850 1262,850" fill="none" stroke="#f4f4f4" stroke-width="1" /><text x="1119" y="541" font-size="16" fill="#e8e8e8" font-family="'Liberation Sans',sans-serif" letter-spacing="15">横断図</text><text x="1203" y="541" font-size="11" fill="#e8e8e8" font-family="'Liberation Sans',sans-serif" textLength="52" lengthAdjust="spacingAndGlyphs">S = 1 : 100</text><line x1="1119.6" y1="544.5" x2="1255.7" y2="544.5" stroke="#f4f4f4" stroke-width="1.2" /><text x="1318" y="778" font-size="6.5" font-weight="bold" fill="#f4f4f4" stroke="#f4f4f4" stroke-width="0.35" textLength="22.0" lengthAdjust="spacingAndGlyphs" font-family="'Liberation Sans',sans-serif">HPPEφ7</text><text x="1344" y="778" font-size="6.5" font-weight="bold" fill="#f4f4f4" stroke="#f4f4f4" stroke-width="0.35" textLength="28.0" lengthAdjust="spacingAndGlyphs" font-family="'Liberation Sans',sans-serif">HPPEφ75m</text><text x="1380" y="778" font-size="6.5" font-weight="bold" fill="#f4f4f4" stroke="#f4f4f4" stroke-width="0.35" textLength="50.0" lengthAdjust="spacingAndGlyphs" font-family="'Liberation Sans',sans-serif">HPPEφ75mm L=14</text><text x="1330" y="786" font-size="6.5" font-weight="bold" fill="#f4f4f4" stroke="#f4f4f4" stroke-width="0.35" textLength="20.0" lengthAdjust="spacingAndGlyphs" font-family="'Liberation Sans',sans-serif">HPPEφ7</text><text x="1352" y="786" font-size="6.5" font-weight="bold" fill="#f4f4f4" stroke="#f4f4f4" stroke-width="0.35" textLength="121.0" lengthAdjust="spacingAndGlyphs" font-family="'Liberation Sans',sans-serif">HPPEφ75mm L=143.10m(L=147.82m) 0.3</text><rect x="1347.4" y="793.4" width="124.59999999999991" height="87.30000000000007" fill="none" stroke="#ff7f00" stroke-width="1.4"/><line x1="1347.4" y1="805.6" x2="1472" y2="805.6" stroke="#ff7f00" stroke-width="1.1" /><line x1="1347.4" y1="817.9" x2="1472" y2="817.9" stroke="#ff7f00" stroke-width="1.1" /><line x1="1347.4" y1="830" x2="1472" y2="830" stroke="#ff7f00" stroke-width="1.1" /><line x1="1347.4" y1="843" x2="1472" y2="843" stroke="#ff7f00" stroke-width="1.1" /><line x1="1347.4" y1="856.2" x2="1472" y2="856.2" stroke="#ff7f00" stroke-width="1.1" /><line x1="1347.4" y1="868.5" x2="1472" y2="868.5" stroke="#ff7f00" stroke-width="1.1" /><line x1="1373" y1="793.4" x2="1373" y2="868.5" stroke="#ff7f00" stroke-width="1.1" /><line x1="1415.5" y1="843" x2="1415.5" y2="856.2" stroke="#ff7f00" stroke-width="1" /><line x1="1434.6" y1="843" x2="1434.6" y2="856.2" stroke="#ff7f00" stroke-width="1" /><text x="1351" y="802" font-size="6.5" font-weight="bold" fill="#f4f4f4" stroke="#f4f4f4" stroke-width="0.35" textLength="19.0" lengthAdjust="spacingAndGlyphs" font-family="'Liberation Sans',sans-serif">事業年度</text><text x="1351" y="814.5" font-size="6.5" font-weight="bold" fill="#f4f4f4" stroke="#f4f4f4" stroke-width="0.35" textLength="19.0" lengthAdjust="spacingAndGlyphs" font-family="'Liberation Sans',sans-serif">工 事 名</text><text x="1351" y="826.5" font-size="6.5" font-weight="bold" fill="#f4f4f4" stroke="#f4f4f4" stroke-width="0.35" textLength="19.0" lengthAdjust="spacingAndGlyphs" font-family="'Liberation Sans',sans-serif">路 線 名</text><text x="1351" y="839" font-size="6.5" font-weight="bold" fill="#f4f4f4" stroke="#f4f4f4" stroke-width="0.35" textLength="19.0" lengthAdjust="spacingAndGlyphs" font-family="'Liberation Sans',sans-serif">工事箇所</text><text x="1351" y="852" font-size="6.5" font-weight="bold" fill="#f4f4f4" stroke="#f4f4f4" stroke-width="0.35" textLength="19.0" lengthAdjust="spacingAndGlyphs" font-family="'Liberation Sans',sans-serif">平面/横断</text><text x="1351" y="864.5" font-size="6.5" font-weight="bold" fill="#f4f4f4" stroke="#f4f4f4" stroke-width="0.35" textLength="19.0" lengthAdjust="spacingAndGlyphs" font-family="'Liberation Sans',sans-serif">図面番号</text><text x="1404" y="802" font-size="6.5" font-weight="bold" fill="#f4f4f4" stroke="#f4f4f4" stroke-width="0.35" textLength="28.0" lengthAdjust="spacingAndGlyphs" font-family="'Liberation Sans',sans-serif">令和7年度</text><text x="1380" y="814.5" font-size="6.5" font-weight="bold" fill="#f4f4f4" stroke="#f4f4f4" stroke-width="0.35" textLength="86.0" lengthAdjust="spacingAndGlyphs" font-family="'Liberation Sans',sans-serif">道路中央区配水管布設替工事</text><text x="1398" y="826.5" font-size="6.5" font-weight="bold" fill="#f4f4f4" stroke="#f4f4f4" stroke-width="0.35" textLength="42.0" lengthAdjust="spacingAndGlyphs" font-family="'Liberation Sans',sans-serif">市道中央線</text><text x="1382" y="839" font-size="6.5" font-weight="bold" fill="#f4f4f4" stroke="#f4f4f4" stroke-width="0.35" textLength="78.0" lengthAdjust="spacingAndGlyphs" font-family="'Liberation Sans',sans-serif">大田原市 新富三丁目地内</text><text x="1376" y="852" font-size="6.5" font-weight="bold" fill="#f4f4f4" stroke="#f4f4f4" stroke-width="0.35" textLength="34.0" lengthAdjust="spacingAndGlyphs" font-family="'Liberation Sans',sans-serif">平面図/横断図</text><text x="1418" y="852" font-size="6.5" font-weight="bold" fill="#f4f4f4" stroke="#f4f4f4" stroke-width="0.35" textLength="14.0" lengthAdjust="spacingAndGlyphs" font-family="'Liberation Sans',sans-serif">縮尺</text><text x="1438" y="852" font-size="6.5" font-weight="bold" fill="#f4f4f4" stroke="#f4f4f4" stroke-width="0.35" textLength="32.0" lengthAdjust="spacingAndGlyphs" font-family="'Liberation Sans',sans-serif">1:500/1:100</text><text x="1405" y="864.5" font-size="6.5" font-weight="bold" fill="#f4f4f4" stroke="#f4f4f4" stroke-width="0.35" textLength="35.0" lengthAdjust="spacingAndGlyphs" font-family="'Liberation Sans',sans-serif">全 枚之 1</text><text x="1360" y="877" font-size="6.5" font-weight="bold" fill="#f4f4f4" stroke="#f4f4f4" stroke-width="0.35" textLength="80.0" lengthAdjust="spacingAndGlyphs" font-family="'Liberation Sans',sans-serif">栃 木 県 大 田 原 市</text><g stroke="#f4f4f4" stroke-width="1.2" fill="none"><path d="M263.5 806V882.5H340"/><rect x="257.5" y="875.5" width="13" height="13"/><path d="M263 779l9.6 9.5M281 779l-8.4 9.5M272.6 788.5V797M349 865l18 18M367 865l-18 18"/></g><g stroke="#f4f4f4" stroke-width="1.1" fill="none"><path d="M1587 697.5h45M1639 697.5h44M1635.5 650v44M1635.5 701v45"/><rect x="1632" y="694" width="7" height="7"/></g></svg>
<div class="t" style="left:227.0px;top:8.0px;font-size:13px;color:#111;font-weight:normal;font-family:'Liberation Sans',sans-serif;transform:scaleX(0.930);">2D 製図</div>
<div class="t" style="left:1008.0px;top:8.5px;font-size:13px;color:#222;font-weight:normal;font-family:'Liberation Sans',sans-serif;transform:scaleX(0.857);">IJCAD 2019 STD - [01_平面図.dwg]</div>
<div class="t" style="left:60.0px;top:35.0px;font-size:13px;color:#1a1a1a;font-weight:normal;font-family:'Liberation Sans',sans-serif;transform:scaleX(0.846);">ホーム</div>
<div class="t" style="left:121.0px;top:35.0px;font-size:13px;color:#ececec;font-weight:normal;font-family:'Liberation Sans',sans-serif;transform:scaleX(0.962);">挿入</div>
<div class="t" style="left:175.0px;top:35.0px;font-size:13px;color:#ececec;font-weight:normal;font-family:'Liberation Sans',sans-serif;transform:scaleX(1.000);">注釈</div>
<div class="t" style="left:229.5px;top:36.0px;font-size:11px;color:#ececec;font-weight:normal;font-family:'Liberation Sans',sans-serif;transform:scaleX(0.924);">3D</div>
<div class="t" style="left:272.0px;top:35.0px;font-size:13px;color:#ececec;font-weight:normal;font-family:'Liberation Sans',sans-serif;transform:scaleX(0.738);">レイアウト</div>
<div class="t" style="left:349.0px;top:35.0px;font-size:13px;color:#ececec;font-weight:normal;font-family:'Liberation Sans',sans-serif;transform:scaleX(1.000);">表示</div>
<div class="t" style="left:403.0px;top:35.0px;font-size:13px;color:#ececec;font-weight:normal;font-family:'Liberation Sans',sans-serif;transform:scaleX(1.000);">管理</div>
<div class="t" style="left:457.0px;top:35.0px;font-size:13px;color:#ececec;font-weight:normal;font-family:'Liberation Sans',sans-serif;transform:scaleX(1.000);">出力</div>
<div class="t" style="left:510.5px;top:35.0px;font-size:13px;color:#ececec;font-weight:normal;font-family:'Liberation Sans',sans-serif;transform:scaleX(0.833);">ヘルプ</div>
<div class="t" style="left:572.0px;top:35.0px;font-size:13px;color:#ececec;font-weight:normal;font-family:'Liberation Sans',sans-serif;transform:scaleX(0.892);">拡張ツール</div>
<div class="t" style="left:659.5px;top:36.0px;font-size:11px;color:#ececec;font-weight:normal;font-family:'Liberation Sans',sans-serif;transform:scaleX(0.852);">PLUS</div>
<div class="t" style="left:1825.0px;top:32.0px;font-size:13px;color:#ececec;font-weight:normal;font-family:'Liberation Sans',sans-serif;transform:scaleX(0.744);">タイプ</div>
<div class="t" style="left:105.0px;top:128.0px;font-size:13px;color:#f2f4f6;font-weight:normal;font-family:'Liberation Sans',sans-serif;transform:scaleX(0.962);">作成</div>
<div class="t" style="left:364.0px;top:128.0px;font-size:13px;color:#f2f4f6;font-weight:normal;font-family:'Liberation Sans',sans-serif;transform:scaleX(0.962);">修正</div>
<div class="t" style="left:648.0px;top:128.0px;font-size:13px;color:#f2f4f6;font-weight:normal;font-family:'Liberation Sans',sans-serif;transform:scaleX(0.962);">画層</div>
<div class="t" style="left:872.0px;top:128.0px;font-size:13px;color:#f2f4f6;font-weight:normal;font-family:'Liberation Sans',sans-serif;transform:scaleX(0.962);">注釈</div>
<div class="t" style="left:1034.5px;top:128.0px;font-size:13px;color:#f2f4f6;font-weight:normal;font-family:'Liberation Sans',sans-serif;transform:scaleX(0.683);">ブロック</div>
<div class="t" style="left:1201.0px;top:128.0px;font-size:13px;color:#f2f4f6;font-weight:normal;font-family:'Liberation Sans',sans-serif;transform:scaleX(0.770);">オブジェクト プロパティ管理</div>
<div class="t" style="left:1423.5px;top:128.0px;font-size:13px;color:#f2f4f6;font-weight:normal;font-family:'Liberation Sans',sans-serif;transform:scaleX(0.709);">ユーティリティ</div>
<div class="t" style="left:1527.0px;top:128.0px;font-size:13px;color:#f2f4f6;font-weight:normal;font-family:'Liberation Sans',sans-serif;transform:scaleX(0.725);">クリップボード</div>
<div class="t" style="left:15.5px;top:95.0px;font-size:13px;color:#000;font-weight:normal;font-family:'Liberation Sans',sans-serif;transform:scaleX(1.019);">線分</div>
<div class="t" style="left:54.0px;top:95.0px;font-size:13px;color:#000;font-weight:normal;font-family:'Liberation Sans',sans-serif;transform:scaleX(0.715);">ポリライン</div>
<div class="t" style="left:119.0px;top:95.0px;font-size:13px;color:#000;font-weight:normal;font-family:'Liberation Sans',sans-serif;transform:scaleX(0.923);">円</div>
<div class="t" style="left:157.0px;top:95.0px;font-size:13px;color:#000;font-weight:normal;font-family:'Liberation Sans',sans-serif;transform:scaleX(1.000);">円弧</div>
<div class="t" style="left:262.5px;top:61.0px;font-size:13px;color:#000;font-weight:normal;font-family:'Liberation Sans',sans-serif;transform:scaleX(0.981);">削除</div>
<div class="t" style="left:342.0px;top:61.0px;font-size:13px;color:#000;font-weight:normal;font-family:'Liberation Sans',sans-serif;transform:scaleX(1.000);">分解</div>
<div class="t" style="left:262.5px;top:83.0px;font-size:13px;color:#000;font-weight:normal;font-family:'Liberation Sans',sans-serif;transform:scaleX(0.990);">尺度変更</div>
<div class="t" style="left:342.0px;top:83.0px;font-size:13px;color:#000;font-weight:normal;font-family:'Liberation Sans',sans-serif;transform:scaleX(0.715);">ストレッチ</div>
<div class="t" style="left:417.0px;top:83.0px;font-size:13px;color:#000;font-weight:normal;font-family:'Liberation Sans',sans-serif;transform:scaleX(1.000);">鏡像</div>
<div class="t" style="left:262.5px;top:105.0px;font-size:13px;color:#000;font-weight:normal;font-family:'Liberation Sans',sans-serif;transform:scaleX(0.981);">移動</div>
<div class="t" style="left:342.0px;top:105.0px;font-size:13px;color:#000;font-weight:normal;font-family:'Liberation Sans',sans-serif;transform:scaleX(0.962);">回転</div>
<div class="t" style="left:417.0px;top:105.0px;font-size:13px;color:#000;font-weight:normal;font-family:'Liberation Sans',sans-serif;transform:scaleX(0.962);">複写</div>
<div class="t" style="left:669.0px;top:105.5px;font-size:13px;color:#111;font-weight:normal;font-family:'Liberation Sans',sans-serif;transform:scaleX(0.968);">0</div>
<div class="t" style="left:527.5px;top:95.3px;font-size:13px;color:#000;font-weight:normal;font-family:'Liberation Sans',sans-serif;transform:scaleX(0.791);">画層プロパティ</div>
<div class="t" style="left:551.5px;top:107.5px;font-size:13px;color:#000;font-weight:normal;font-family:'Liberation Sans',sans-serif;transform:scaleX(0.981);">管理</div>
<div class="t" style="left:816.0px;top:95.0px;font-size:13px;color:#000;font-weight:normal;font-family:'Liberation Sans',sans-serif;transform:scaleX(1.000);">文字</div>
<div class="t" style="left:873.5px;top:60.5px;font-size:13px;color:#000;font-weight:normal;font-family:'Liberation Sans',sans-serif;transform:scaleX(0.962);">表</div>
<div class="t" style="left:873.5px;top:83.0px;font-size:13px;color:#000;font-weight:normal;font-family:'Liberation Sans',sans-serif;transform:scaleX(0.897);">マルチ引出線</div>
<div class="t" style="left:873.5px;top:105.0px;font-size:13px;color:#000;font-weight:normal;font-family:'Liberation Sans',sans-serif;transform:scaleX(0.929);">長さ寸法記入</div>
<div class="t" style="left:981.0px;top:95.5px;font-size:13px;color:#000;font-weight:normal;font-family:'Liberation Sans',sans-serif;transform:scaleX(0.962);">挿入</div>
<div class="t" style="left:1038.0px;top:61.0px;font-size:13px;color:#000;font-weight:normal;font-family:'Liberation Sans',sans-serif;transform:scaleX(0.846);">部分削除ブロック</div>
<div class="t" style="left:1038.0px;top:83.0px;font-size:13px;color:#000;font-weight:normal;font-family:'Liberation Sans',sans-serif;transform:scaleX(0.782);">ブロック定義</div>
<div class="t" style="left:1038.0px;top:105.0px;font-size:13px;color:#000;font-weight:normal;font-family:'Liberation Sans',sans-serif;transform:scaleX(0.692);">エディタ</div>
<div class="t" style="left:1307.0px;top:62.2px;font-size:12.5px;color:#111;font-weight:normal;font-family:'Liberation Sans',sans-serif;transform:scaleX(0.840);">ByLayer</div>
<div class="t" style="left:1307.0px;top:84.2px;font-size:12.5px;color:#111;font-weight:normal;font-family:'Liberation Sans',sans-serif;transform:scaleX(0.840);">ByLayer</div>
<div class="t" style="left:1237.5px;top:106.2px;font-size:12.5px;color:#111;font-weight:normal;font-family:'Liberation Sans',sans-serif;transform:scaleX(0.818);">ByLayer</div>
<div class="t" style="left:1145.0px;top:95.0px;font-size:13px;color:#000;font-weight:normal;font-family:'Liberation Sans',sans-serif;transform:scaleX(0.723);">プロパティ</div>
<div class="t" style="left:1154.0px;top:107.5px;font-size:13px;color:#000;font-weight:normal;font-family:'Liberation Sans',sans-serif;transform:scaleX(0.744);">コピー</div>
<div class="t" style="left:1405.0px;top:95.0px;font-size:13px;color:#000;font-weight:normal;font-family:'Liberation Sans',sans-serif;transform:scaleX(0.760);">メジャー</div>
<div class="t" style="left:1523.0px;top:95.0px;font-size:13px;color:#000;font-weight:normal;font-family:'Liberation Sans',sans-serif;transform:scaleX(0.865);">貼り付け</div>
<div class="t" style="left:4.0px;top:152.0px;font-size:13px;color:#3a3a3a;font-weight:normal;font-family:'Liberation Sans',sans-serif;transform:scaleX(0.723);">プロパティ</div>
<div class="t" style="left:13.0px;top:177.0px;font-size:13px;color:#111;font-weight:normal;font-family:'Liberation Sans',sans-serif;transform:scaleX(0.785);">何も選択されていませ</div>
<div class="t" style="left:13.4px;top:205.2px;font-size:12.5px;color:#4a4a4a;font-weight:bold;font-family:'Liberation Sans',sans-serif;transform:scaleX(0.946);">一般</div>
<div class="t" style="left:33.7px;top:225.8px;font-size:12.5px;color:#111;font-weight:normal;font-family:'Liberation Sans',sans-serif;transform:scaleX(0.869);">色</div>
<div class="t" style="left:112.5px;top:225.8px;font-size:12.5px;color:#111;font-weight:normal;font-family:'Liberation Sans',sans-serif;transform:scaleX(0.874);">ByLayer</div>
<div class="t" style="left:33.7px;top:246.8px;font-size:12.5px;color:#111;font-weight:normal;font-family:'Liberation Sans',sans-serif;transform:scaleX(0.915);">画層</div>
<div class="t" style="left:97.7px;top:246.8px;font-size:12.5px;color:#111;font-weight:normal;font-family:'Liberation Sans',sans-serif;transform:scaleX(0.690);">0</div>
<div class="t" style="left:33.7px;top:267.8px;font-size:12.5px;color:#111;font-weight:normal;font-family:'Liberation Sans',sans-serif;transform:scaleX(0.915);">線種</div>
<div class="t" style="left:153.0px;top:267.8px;font-size:12.5px;color:#111;font-weight:normal;font-family:'Liberation Sans',sans-serif;transform:scaleX(0.885);">ByLayer</div>
<div class="t" style="left:33.7px;top:288.8px;font-size:12.5px;color:#111;font-weight:normal;font-family:'Liberation Sans',sans-serif;transform:scaleX(0.917);">線種尺度</div>
<div class="t" style="left:97.7px;top:288.8px;font-size:12.5px;color:#111;font-weight:normal;font-family:'Liberation Sans',sans-serif;transform:scaleX(0.792);">1.0000</div>
<div class="t" style="left:33.7px;top:309.8px;font-size:12.5px;color:#111;font-weight:normal;font-family:'Liberation Sans',sans-serif;transform:scaleX(0.910);">線の太さ</div>
<div class="t" style="left:153.0px;top:309.8px;font-size:12.5px;color:#111;font-weight:normal;font-family:'Liberation Sans',sans-serif;transform:scaleX(0.885);">ByLayer</div>
<div class="t" style="left:33.7px;top:330.8px;font-size:12.5px;color:#111;font-weight:normal;font-family:'Liberation Sans',sans-serif;transform:scaleX(0.905);">透過性</div>
<div class="t" style="left:97.7px;top:330.8px;font-size:12.5px;color:#111;font-weight:normal;font-family:'Liberation Sans',sans-serif;transform:scaleX(0.879);">ByLayer</div>
<div class="t" style="left:33.7px;top:351.8px;font-size:12.5px;color:#111;font-weight:normal;font-family:'Liberation Sans',sans-serif;transform:scaleX(0.781);">厚さ</div>
<div class="t" style="left:97.7px;top:351.8px;font-size:12.5px;color:#111;font-weight:normal;font-family:'Liberation Sans',sans-serif;transform:scaleX(0.792);">0.0000</div>
<div class="t" style="left:13.4px;top:376.2px;font-size:12.5px;color:#4a4a4a;font-weight:bold;font-family:'Liberation Sans',sans-serif;transform:scaleX(1.025);">3D 表示</div>
<div class="t" style="left:33.7px;top:396.8px;font-size:12.5px;color:#111;font-weight:normal;font-family:'Liberation Sans',sans-serif;transform:scaleX(0.666);">マテリアル</div>
<div class="t" style="left:97.7px;top:396.8px;font-size:12.5px;color:#111;font-weight:normal;font-family:'Liberation Sans',sans-serif;transform:scaleX(0.879);">ByLayer</div>
<div class="t" style="left:33.7px;top:417.8px;font-size:12.5px;color:#111;font-weight:normal;font-family:'Liberation Sans',sans-serif;transform:scaleX(0.852);">影を表示</div>
<div class="t" style="left:97.7px;top:417.8px;font-size:12.5px;color:#111;font-weight:normal;font-family:'Liberation Sans',sans-serif;transform:scaleX(0.800);">影を投じる/受ける</div>
<div class="t" style="left:13.4px;top:442.2px;font-size:12.5px;color:#4a4a4a;font-weight:bold;font-family:'Liberation Sans',sans-serif;transform:scaleX(0.835);">印刷スタイル</div>
<div class="t" style="left:33.7px;top:462.8px;font-size:12.5px;color:#111;font-weight:normal;font-family:'Liberation Sans',sans-serif;transform:scaleX(0.739);">印刷スタイ…</div>
<div class="t" style="left:97.7px;top:462.8px;font-size:12.5px;color:#111;font-weight:normal;font-family:'Liberation Sans',sans-serif;transform:scaleX(0.884);">ByColor</div>
<div class="t" style="left:33.7px;top:483.8px;font-size:12.5px;color:#111;font-weight:normal;font-family:'Liberation Sans',sans-serif;transform:scaleX(0.739);">印刷スタイ…</div>
<div class="t" style="left:97.7px;top:483.8px;font-size:12.5px;color:#111;font-weight:normal;font-family:'Liberation Sans',sans-serif;transform:scaleX(0.862);">monochrome.ctb</div>
<div class="t" style="left:33.7px;top:504.8px;font-size:12.5px;color:#111;font-weight:normal;font-family:'Liberation Sans',sans-serif;transform:scaleX(0.905);">適用先</div>
<div class="t" style="left:97.7px;top:504.8px;font-size:12.5px;color:#111;font-weight:normal;font-family:'Liberation Sans',sans-serif;transform:scaleX(0.700);">モデル</div>
<div class="t" style="left:33.7px;top:525.8px;font-size:12.5px;color:#111;font-weight:normal;font-family:'Liberation Sans',sans-serif;transform:scaleX(0.746);">印刷テーブ…</div>
<div class="t" style="left:97.7px;top:525.8px;font-size:12.5px;color:#111;font-weight:normal;font-family:'Liberation Sans',sans-serif;transform:scaleX(0.879);">色指定</div>
<div class="t" style="left:13.4px;top:550.2px;font-size:12.5px;color:#4a4a4a;font-weight:bold;font-family:'Liberation Sans',sans-serif;transform:scaleX(0.733);">ビュー</div>
<div class="t" style="left:33.7px;top:570.8px;font-size:12.5px;color:#111;font-weight:normal;font-family:'Liberation Sans',sans-serif;transform:scaleX(0.934);">中心 X</div>
<div class="t" style="left:97.7px;top:570.8px;font-size:12.5px;color:#111;font-weight:normal;font-family:'Liberation Sans',sans-serif;transform:scaleX(0.825);">202.5152</div>
<div class="t" style="left:33.7px;top:591.8px;font-size:12.5px;color:#111;font-weight:normal;font-family:'Liberation Sans',sans-serif;transform:scaleX(0.934);">中心 Y</div>
<div class="t" style="left:97.7px;top:591.8px;font-size:12.5px;color:#111;font-weight:normal;font-family:'Liberation Sans',sans-serif;transform:scaleX(0.817);">97.2983</div>
<div class="t" style="left:33.7px;top:612.8px;font-size:12.5px;color:#111;font-weight:normal;font-family:'Liberation Sans',sans-serif;transform:scaleX(0.951);">中心 Z</div>
<div class="t" style="left:97.7px;top:612.8px;font-size:12.5px;color:#111;font-weight:normal;font-family:'Liberation Sans',sans-serif;transform:scaleX(0.806);">0.0000</div>
<div class="t" style="left:33.7px;top:633.8px;font-size:12.5px;color:#111;font-weight:normal;font-family:'Liberation Sans',sans-serif;transform:scaleX(0.781);">高さ</div>
<div class="t" style="left:97.7px;top:633.8px;font-size:12.5px;color:#111;font-weight:normal;font-family:'Liberation Sans',sans-serif;transform:scaleX(0.819);">598.5751</div>
<div class="t" style="left:33.7px;top:654.8px;font-size:12.5px;color:#111;font-weight:normal;font-family:'Liberation Sans',sans-serif;transform:scaleX(0.869);">幅</div>
<div class="t" style="left:97.7px;top:654.8px;font-size:12.5px;color:#111;font-weight:normal;font-family:'Liberation Sans',sans-serif;transform:scaleX(0.826);">1358.4912</div>
<div class="t" style="left:13.4px;top:679.2px;font-size:12.5px;color:#4a4a4a;font-weight:bold;font-family:'Liberation Sans',sans-serif;transform:scaleX(0.849);">その他</div>
<div class="t" style="left:33.7px;top:699.8px;font-size:12.5px;color:#111;font-weight:normal;font-family:'Liberation Sans',sans-serif;transform:scaleX(0.898);">異尺度対…</div>
<div class="t" style="left:97.5px;top:699.8px;font-size:12.5px;color:#111;font-weight:normal;font-family:'Liberation Sans',sans-serif;transform:scaleX(0.719);">1:1</div>
<div class="t" style="left:33.7px;top:720.8px;font-size:12.5px;color:#111;font-weight:normal;font-family:'Liberation Sans',sans-serif;transform:scaleX(0.716);">UCS アイコ…</div>
<div class="t" style="left:97.5px;top:720.8px;font-size:12.5px;color:#111;font-weight:normal;font-family:'Liberation Sans',sans-serif;transform:scaleX(0.712);">はい</div>
<div class="t" style="left:33.7px;top:741.8px;font-size:12.5px;color:#111;font-weight:normal;font-family:'Liberation Sans',sans-serif;transform:scaleX(0.716);">UCS アイコ…</div>
<div class="t" style="left:97.5px;top:741.8px;font-size:12.5px;color:#111;font-weight:normal;font-family:'Liberation Sans',sans-serif;transform:scaleX(0.718);">いいえ</div>
<div class="t" style="left:33.7px;top:762.8px;font-size:12.5px;color:#111;font-weight:normal;font-family:'Liberation Sans',sans-serif;transform:scaleX(0.675);">ビューポー…</div>
<div class="t" style="left:97.5px;top:762.8px;font-size:12.5px;color:#111;font-weight:normal;font-family:'Liberation Sans',sans-serif;transform:scaleX(0.712);">はい</div>
<div class="t" style="left:33.7px;top:783.8px;font-size:12.5px;color:#111;font-weight:normal;font-family:'Liberation Sans',sans-serif;transform:scaleX(0.893);">UCS 名</div>
<div class="t" style="left:33.7px;top:804.8px;font-size:12.5px;color:#111;font-weight:normal;font-family:'Liberation Sans',sans-serif;transform:scaleX(0.739);">表示スタイ…</div>
<div class="t" style="left:97.5px;top:804.8px;font-size:12.5px;color:#111;font-weight:normal;font-family:'Liberation Sans',sans-serif;transform:scaleX(0.738);">2D ワイヤフレーム</div>
<div class="t" style="left:239.0px;top:153.0px;font-size:13px;color:#000;font-weight:bold;font-family:'Liberation Sans',sans-serif;transform:scaleX(0.947);">01_平面図.dwg</div>
<div class="t" style="left:306.4px;top:917.5px;font-size:13px;color:#fff;font-weight:normal;font-family:'Liberation Sans',sans-serif;transform:scaleX(0.733);">モデル</div>
<div class="t" style="left:348.5px;top:917.9px;font-size:13px;color:#1a1a1a;font-weight:normal;font-family:'Liberation Sans',sans-serif;transform:scaleX(0.685);">レイアウト1</div>
<div class="t" style="left:412.5px;top:917.9px;font-size:13px;color:#1a1a1a;font-weight:normal;font-family:'Liberation Sans',sans-serif;transform:scaleX(0.685);">レイアウト2</div>
<div class="t" style="left:476.0px;top:918.4px;font-size:12px;color:#1a1a1a;font-weight:normal;font-family:'Liberation Sans',sans-serif;transform:scaleX(1.069);">+</div>
<div class="t" style="left:247.0px;top:933.5px;font-size:13px;color:#111;font-weight:normal;font-family:'Liberation Sans',sans-serif;transform:scaleX(0.755);clip-path:inset(9.5px 0 0 0)">コマンド:</div>
<div class="t" style="left:247.0px;top:952.0px;font-size:13px;color:#111;font-weight:normal;font-family:'Liberation Sans',sans-serif;transform:scaleX(0.755);">コマンド:</div>
<div class="t" style="left:247.0px;top:970.5px;font-size:13px;color:#111;font-weight:normal;font-family:'Liberation Sans',sans-serif;transform:scaleX(0.755);">コマンド:</div>
<div class="t" style="left:247.0px;top:990.5px;font-size:13px;color:#111;font-weight:normal;font-family:'Liberation Sans',sans-serif;transform:scaleX(0.755);">コマンド:</div>
<div class="t" style="left:3.0px;top:1014.5px;font-size:12px;color:#111;font-weight:normal;font-family:'Liberation Sans',sans-serif;transform:scaleX(0.902);">655.8834, -26.9342, 0.0000</div>
<div class="t" style="left:545.0px;top:1014.5px;font-size:12px;color:#111;font-weight:normal;font-family:'Liberation Sans',sans-serif;transform:scaleX(0.839);">1:1</div>
<div class="t" style="left:1887.0px;top:1014.5px;font-size:13px;color:#101020;font-weight:normal;font-family:'Liberation Sans',sans-serif;transform:scaleX(0.799);">IJCAD</div>
</body></html>
